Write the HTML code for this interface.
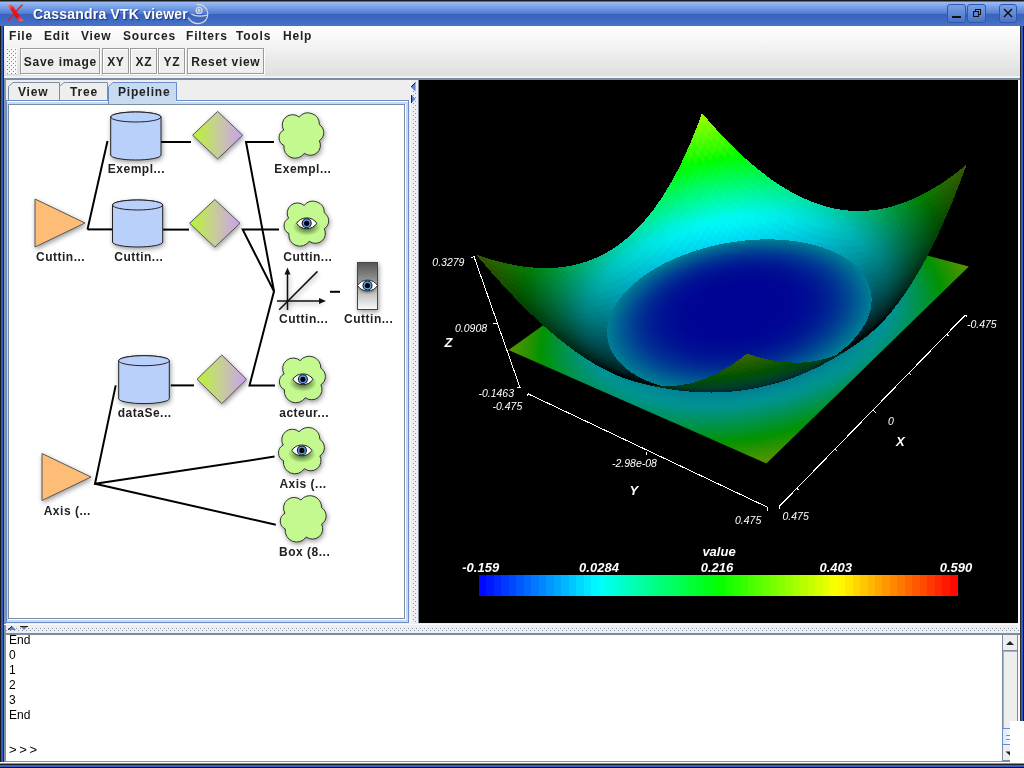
<!DOCTYPE html>
<html><head><meta charset="utf-8">
<style>
*{margin:0;padding:0;box-sizing:border-box}
html,body{width:1024px;height:768px;overflow:hidden;background:#000}
body{position:relative;font-family:"Liberation Sans",sans-serif}
.t,.btn span,.tx,svg{will-change:transform}
.a{position:absolute}
.t{position:absolute;white-space:nowrap;font-weight:bold;font-size:12px;color:#222;line-height:14px;letter-spacing:0.8px}
#title{left:0;top:0;width:1024px;height:26px;background:linear-gradient(#1a1a1a 0,#1a1a1a 1px,#9cbef6 2px,#7ea6ea 6px,#5c86d8 12px,#4c78d0 14px,#3a62bc 14px,#3e68c2 19px,#4672c8 25px,#4a74c9 26px)}
#frameL{left:0;top:0;width:4px;height:768px;background:linear-gradient(90deg,#1a1a14 0,#1a1a14 1px,#2f5bc8 1px,#2f5bc8 3px,#2a2a28 3px)}
#frameR{left:1020px;top:0;width:4px;height:768px;background:linear-gradient(90deg,#2a2a20 0,#2a2a20 1px,#2f5bc8 1px,#2f5bc8 3px,#111 3px)}
#frameB{left:0;top:762px;width:1024px;height:6px;background:linear-gradient(#fff 0,#fff 1px,#222 2px,#222 3px,#3a62c4 3px,#3a62c4 5px,#111 5px)}
#chrome{left:4px;top:26px;width:1016px;height:52px;background:linear-gradient(#ffffff,#f3f3f3 20px,#dedede 50px)}
.btn{position:absolute;top:48px;height:26px;border:1px solid #9a9a9a;background:#efefef;box-shadow:inset 1px 1px 0 #fff,1px 1px 0 #fff}
.btn span{position:absolute;top:6px;left:0;right:0;text-align:center;font-weight:bold;font-size:12px;color:#222;line-height:14px;letter-spacing:0.7px;text-indent:0.7px}
</style></head><body>
<div id="frameL" class="a"></div>
<div id="frameR" class="a"></div>
<div id="title" class="a"></div>
<!-- title icon X -->
<svg class="a" style="left:0;top:0" width="30" height="26" viewBox="0 0 30 26">
<defs><linearGradient id="xg" x1="0" y1="0" x2="1" y2="1"><stop offset="0" stop-color="#ff9a9a"/><stop offset="0.3" stop-color="#ee1a1a"/><stop offset="0.7" stop-color="#e01010"/><stop offset="1" stop-color="#ff8080"/></linearGradient></defs>
<path d="M21.6 4.6 L23.4 4.6 L8.6 21 L6.8 21 Z" fill="#e41c1c"/>
<path d="M6.8 4.6 L11.6 4.6 L23.2 21 L18.4 21 Z" fill="url(#xg)"/>
</svg>
<div class="t" style="left:33px;top:7px;font-size:14px;letter-spacing:0.2px;color:#fff;text-shadow:1px 1px 1px #1c3478">Cassandra VTK viewer</div>
<svg class="a" style="left:186px;top:2px" width="24" height="24" viewBox="0 0 24 24">
<g fill="none" stroke="#d8d8d8" stroke-width="1.2">
<circle cx="13.1" cy="8.4" r="3"/><circle cx="13.1" cy="8.4" r="1"/>
<path d="M10.4 2.3 Q20 2 21.8 11 Q22 20 13 21.6 Q6 22 2.2 15.6"/>
<path d="M5.3 11.9 Q11 15.5 21.3 13.2"/>
</g></svg>
<!-- title buttons -->
<div class="a" style="left:947px;top:4px;width:19px;height:19px;border:1px solid #3458a8;border-radius:3px;background:linear-gradient(#7aa0e6,#4a72c8)"></div>
<div class="a" style="left:952px;top:16px;width:9px;height:2px;background:#111"></div>
<div class="a" style="left:967px;top:4px;width:19px;height:19px;border:1px solid #3458a8;border-radius:3px;background:linear-gradient(#7aa0e6,#4a72c8)"></div>
<div class="a" style="left:975px;top:9px;width:6px;height:6px;border:1px solid #111"></div>
<div class="a" style="left:973px;top:11px;width:6px;height:6px;border:1px solid #111;background:#5a82d4"></div>
<div class="a" style="left:999px;top:4px;width:18px;height:19px;border:1px solid #3458a8;border-radius:3px;background:linear-gradient(#7aa0e6,#4a72c8)"></div>
<svg class="a" style="left:1002px;top:7px" width="12" height="12"><path d="M2 2L10 10M10 2L2 10" stroke="#111" stroke-width="1.5"/></svg>

<div id="chrome" class="a"></div>
<div class="a" style="left:4px;top:76px;width:1016px;height:2px;background:#f2f2f2"></div>
<div class="a" style="left:4px;top:78px;width:1016px;height:2px;background:#7a8ea2"></div>
<!-- menu -->
<div class="t" style="left:9px;top:29px">File</div>
<div class="t" style="left:44px;top:29px">Edit</div>
<div class="t" style="left:81px;top:29px">View</div>
<div class="t" style="left:123px;top:29px">Sources</div>
<div class="t" style="left:186px;top:29px">Filters</div>
<div class="t" style="left:236px;top:29px">Tools</div>
<div class="t" style="left:283px;top:29px">Help</div>
<!-- toolbar grip -->
<svg class="a" style="left:6px;top:48px" width="12" height="27"><defs><pattern id="gp" width="4" height="4" patternUnits="userSpaceOnUse" x="1" y="1"><rect width="4" height="4" fill="#f6f6f6"/><rect x="0" y="0" width="1" height="1" fill="#75859c"/><rect x="2" y="2" width="1" height="1" fill="#75859c"/><rect x="1" y="1" width="1" height="1" fill="#fff"/><rect x="3" y="3" width="1" height="1" fill="#fff"/></pattern></defs><rect x="0" y="0" width="11" height="26" fill="url(#gp)"/></svg>
<div class="btn" style="left:20px;width:80px"><span>Save image</span></div>
<div class="btn" style="left:102px;width:27px"><span>XY</span></div>
<div class="btn" style="left:130px;width:27px"><span>XZ</span></div>
<div class="btn" style="left:158px;width:27px"><span>YZ</span></div>
<div class="btn" style="left:187px;width:77px"><span>Reset view</span></div>

<!-- main split area -->
<div class="a" style="left:4px;top:80px;width:1016px;height:554px;background:#eeeeee"></div>
<div class="a" style="left:4px;top:80px;width:2px;height:682px;background:#8494a6"></div>
<!-- tabs -->
<div class="a" style="left:6px;top:100px;width:403px;height:523px;background:#6a8ccc"></div>
<div class="a" style="left:7px;top:101px;width:401px;height:521px;background:#c6daf0;border-top:1px solid #fff"></div>
<div class="a" style="left:8px;top:104px;width:397px;height:515px;background:#7a8ca2"></div>
<div class="a" style="left:9px;top:105px;width:395px;height:513px;background:#fff"></div>
<div class="a" style="left:405px;top:104px;width:1px;height:516px;background:#fff"></div>
<svg class="a" style="left:0;top:0" width="409" height="620" viewBox="0 0 409 620">
<defs>
<filter id="sh" x="-30%" y="-30%" width="160%" height="160%"><feGaussianBlur in="SourceAlpha" stdDeviation="2.6"/><feOffset dx="1" dy="1.5"/><feComponentTransfer><feFuncA type="linear" slope="0.4"/></feComponentTransfer><feMerge><feMergeNode/><feMergeNode in="SourceGraphic"/></feMerge></filter>
<linearGradient id="dg" x1="0" x2="1" y1="0" y2="0"><stop offset="0" stop-color="#b8f530"/><stop offset="0.5" stop-color="#c8cc9a"/><stop offset="1" stop-color="#c8a0f0"/></linearGradient>
<radialGradient id="eyesh"><stop offset="0" stop-color="#2a4a18" stop-opacity="0.95"/><stop offset="1" stop-color="#2a4a18" stop-opacity="0"/></radialGradient><radialGradient id="eyesh2"><stop offset="0" stop-color="#000" stop-opacity="0.5"/><stop offset="1" stop-color="#000" stop-opacity="0"/></radialGradient>
<linearGradient id="rg" x1="0" x2="0" y1="0" y2="1"><stop offset="0" stop-color="#555"/><stop offset="1" stop-color="#fafafa"/></linearGradient>
<clipPath id="wc"><rect x="9" y="105" width="395" height="513"/></clipPath>
</defs>
<g clip-path="url(#wc)">
<g stroke="#000" stroke-width="2" fill="none">
<path d="M87.5 229.4 L107.5 141"/>
<path d="M87.5 229.4 L112 229.4"/>
<path d="M161 142 L191 142"/>
<path d="M274 142 L246 142 L274 291.3"/>
<path d="M163 229.6 L189 229.6"/>
<path d="M279 229.6 L242.7 229.6 L274 291.3 L249.5 385.4 L275 385.4"/>
<path d="M170.8 385.4 L194 385.4"/>
<path d="M330 291.8 L340 291.8"/>
<path d="M115.7 385.4 L95 483.8 L274.6 456.6"/>
<path d="M95 483.8 L275.8 524.7"/>
</g>

<path d="M35.0 199.0 L35.0 247.0 L85.0 223.0 Z" fill="#fdbd76" stroke="#555" stroke-width="1" filter="url(#sh)"/>
<path d="M42.0 453.5 L42.0 500.5 L91.0 477.0 Z" fill="#fdbd76" stroke="#555" stroke-width="1" filter="url(#sh)"/>
<path d="M110.7 117.0 L110.7 155.0 A25.1 5.0 0 0 0 161.0 155.0 L161.0 117.0 A25.1 5.0 0 0 0 110.7 117.0 Z" fill="#b8d0fa" stroke="#222" stroke-width="1" filter="url(#sh)"/><ellipse cx="135.8" cy="117.0" rx="25.1" ry="5.0" fill="#b8d0fa" stroke="#222" stroke-width="1"/>
<path d="M112.5 205.0 L112.5 242.0 A25.1 5.0 0 0 0 162.7 242.0 L162.7 205.0 A25.1 5.0 0 0 0 112.5 205.0 Z" fill="#b8d0fa" stroke="#222" stroke-width="1" filter="url(#sh)"/><ellipse cx="137.6" cy="205.0" rx="25.1" ry="5.0" fill="#b8d0fa" stroke="#222" stroke-width="1"/>
<path d="M118.7 360.7 L118.7 398.6 A25.3 5.0 0 0 0 169.3 398.6 L169.3 360.7 A25.3 5.0 0 0 0 118.7 360.7 Z" fill="#b8d0fa" stroke="#222" stroke-width="1" filter="url(#sh)"/><ellipse cx="144.0" cy="360.7" rx="25.3" ry="5.0" fill="#b8d0fa" stroke="#222" stroke-width="1"/>
<path d="M192.6 135.2 L217.6 111.4 L242.7 135.2 L217.6 159.0 Z" fill="url(#dg)" stroke="#555" stroke-width="1" filter="url(#sh)"/>
<path d="M189.6 223.3 L214.8 199.5 L240.0 223.3 L214.8 247.2 Z" fill="url(#dg)" stroke="#555" stroke-width="1" filter="url(#sh)"/>
<path d="M197.0 379.3 L221.8 355.0 L246.5 379.3 L221.8 403.6 Z" fill="url(#dg)" stroke="#555" stroke-width="1" filter="url(#sh)"/>
<path d="M299.21 117.13 A11.31 11.31 0 0 1 319.32 124.58 A9.54 9.54 0 0 1 319.32 140.69 A10.05 10.05 0 0 1 304.29 153.27 A11.16 11.16 0 0 1 283.98 145.42 A8.54 8.54 0 0 1 283.68 130.11 A10.26 10.26 0 0 1 299.21 117.13 Z" fill="#c3f98f" stroke="#333" stroke-width="1" filter="url(#sh)"/>
<path d="M304.16 205.48 A11.31 11.31 0 0 1 324.31 212.85 A9.43 9.43 0 0 1 324.31 228.78 A10.01 10.01 0 0 1 309.24 241.22 A11.16 11.16 0 0 1 288.89 233.45 A8.45 8.45 0 0 1 288.59 218.32 A10.22 10.22 0 0 1 304.16 205.48 Z" fill="#c3f98f" stroke="#333" stroke-width="1" filter="url(#sh)"/>
<ellipse cx="306.7" cy="226.8" rx="14" ry="9" fill="url(#eyesh)"/><path d="M296.7 223.3 C300.7 216.1 312.7 216.1 316.7 223.3 C312.7 230.5 300.7 230.5 296.7 223.3 Z" fill="#fff" stroke="#222" stroke-width="1"/><circle cx="306.7" cy="223.3" r="5" fill="#151515"/><circle cx="306.7" cy="223.3" r="4" fill="#5a9af0"/><circle cx="306.7" cy="223.3" r="2.6" fill="#000"/>
<path d="M300.13 360.62 A11.65 11.65 0 0 1 320.87 368.26 A9.77 9.77 0 0 1 320.87 384.77 A10.34 10.34 0 0 1 305.36 397.67 A11.50 11.50 0 0 1 284.42 389.62 A8.76 8.76 0 0 1 284.11 373.93 A10.55 10.55 0 0 1 300.13 360.62 Z" fill="#c3f98f" stroke="#333" stroke-width="1" filter="url(#sh)"/>
<ellipse cx="302.9" cy="382.8" rx="14" ry="9" fill="url(#eyesh)"/><path d="M292.9 379.3 C296.9 372.1 308.9 372.1 312.9 379.3 C308.9 386.5 296.9 386.5 292.9 379.3 Z" fill="#fff" stroke="#222" stroke-width="1"/><circle cx="302.9" cy="379.3" r="5" fill="#151515"/><circle cx="302.9" cy="379.3" r="4" fill="#5a9af0"/><circle cx="302.9" cy="379.3" r="2.6" fill="#000"/>
<path d="M299.18 431.81 A11.62 11.62 0 0 1 319.88 439.41 A9.73 9.73 0 0 1 319.88 455.84 A10.30 10.30 0 0 1 304.41 468.69 A11.47 11.47 0 0 1 283.51 460.67 A8.72 8.72 0 0 1 283.20 445.06 A10.52 10.52 0 0 1 299.18 431.81 Z" fill="#c3f98f" stroke="#333" stroke-width="1" filter="url(#sh)"/>
<ellipse cx="301.9" cy="453.9" rx="14" ry="9" fill="url(#eyesh)"/><path d="M291.9 450.4 C295.9 443.2 307.9 443.2 311.9 450.4 C307.9 457.6 295.9 457.6 291.9 450.4 Z" fill="#fff" stroke="#222" stroke-width="1"/><circle cx="301.9" cy="450.4" r="5" fill="#151515"/><circle cx="301.9" cy="450.4" r="4" fill="#5a9af0"/><circle cx="301.9" cy="450.4" r="2.6" fill="#000"/>
<path d="M300.94 500.02 A11.60 11.60 0 0 1 321.59 507.63 A9.75 9.75 0 0 1 321.59 524.11 A10.30 10.30 0 0 1 306.15 536.98 A11.45 11.45 0 0 1 285.30 528.95 A8.74 8.74 0 0 1 284.99 513.30 A10.51 10.51 0 0 1 300.94 500.02 Z" fill="#c3f98f" stroke="#333" stroke-width="1" filter="url(#sh)"/>
<g filter="url(#sh)" stroke="#111" stroke-width="1.5" fill="none">
<path d="M287.5 310 L287.5 272"/><path d="M277 301 L321 301"/><path d="M279.2 309.8 L317.5 271.4"/>
</g>
<path d="M287.5 267.6 L284.5 274.5 L290.5 274.5 Z" fill="#111"/>
<path d="M326 301 L319 298 L319 304 Z" fill="#111"/>

<rect x="357.5" y="262.5" width="20" height="47" fill="url(#rg)" stroke="#444" stroke-width="1" filter="url(#sh)"/>
<ellipse cx="367.5" cy="289.5" rx="10" ry="5" fill="url(#eyesh2)"/><path d="M357.5 285.5 C361.5 278.3 373.5 278.3 377.5 285.5 C373.5 292.7 361.5 292.7 357.5 285.5 Z" fill="#fff" stroke="#222" stroke-width="1"/><circle cx="367.5" cy="285.5" r="5" fill="#151515"/><circle cx="367.5" cy="285.5" r="4" fill="#5a9af0"/><circle cx="367.5" cy="285.5" r="2.6" fill="#000"/>
<g font-family="Liberation Sans" font-weight="bold" font-size="12" fill="#222" letter-spacing="0.5">
<text x="136.4" y="172.8" text-anchor="middle">Exempl...</text>
<text x="60.6" y="260.8" text-anchor="middle">Cuttin...</text>
<text x="138.8" y="260.8" text-anchor="middle">Cuttin...</text>
<text x="302.8" y="173.3" text-anchor="middle">Exempl...</text>
<text x="307.8" y="260.8" text-anchor="middle">Cuttin...</text>
<text x="303.7" y="322.8" text-anchor="middle">Cuttin...</text>
<text x="368.7" y="322.8" text-anchor="middle">Cuttin...</text>
<text x="144.7" y="417.3" text-anchor="middle">dataSe...</text>
<text x="304.2" y="417.3" text-anchor="middle">acteur...</text>
<text x="67.3" y="515.3" text-anchor="middle">Axis (...</text>
<text x="303.0" y="487.8" text-anchor="middle">Axis (...</text>
<text x="304.7" y="555.8" text-anchor="middle">Box (8...</text>
</g></g></svg>
<div class="a" style="left:8px;top:619px;width:398px;height:1px;background:#fff"></div>

<svg class="a" style="left:0;top:76px" width="200" height="30">
<path d="M8.5 24 L8.5 10.5 L13 6.5 L59.5 6.5 L59.5 24" fill="#eeeeee" stroke="#7a8ea8" stroke-width="1"/>
<path d="M59.5 24 L59.5 10.5 L64 6.5 L107.5 6.5 L107.5 24" fill="#eeeeee" stroke="#7a8ea8" stroke-width="1"/>
<path d="M108.5 28 L108.5 10.5 L113 6.5 L176.5 6.5 L176.5 24.5 L200 24.5" fill="#c6daf0" stroke="#6a8ccc" stroke-width="1"/>
<path d="M6 24.5 L108 24.5" stroke="#6a8ccc" stroke-width="1"/>
<rect x="109" y="24" width="67" height="4" fill="#c6daf0"/>
</svg>
<div class="t" style="left:18px;top:85px">View</div>
<div class="t" style="left:70px;top:85px">Tree</div>
<div class="t" style="left:118px;top:85px">Pipeline</div>

<!-- vertical splitter -->
<svg class="a" style="left:409px;top:80px" width="10" height="543"><defs><pattern id="dv" width="10" height="4" patternUnits="userSpaceOnUse"><rect x="4" y="3" width="1" height="1" fill="#8494aa"/><rect x="6" y="1" width="1" height="1" fill="#8494aa"/></pattern></defs><rect x="1" y="0" width="1" height="543" fill="#fafafa"/><rect width="10" height="543" fill="url(#dv)"/></svg>
<svg class="a" style="left:408px;top:80px" width="10" height="30">
<rect x="3" y="0" width="7" height="10" fill="#eeeeee"/>
<path d="M3 7 L7.5 2.5 L7.5 11.5 Z" fill="#5a7ed0"/><path d="M3 7 L7.5 2.5" stroke="#111" stroke-width="1"/>
<path d="M7.5 19 L3.5 15 L3.5 23 Z" fill="#5a7ed0"/><path d="M3.5 15 L3.5 23" stroke="#222" stroke-width="1"/>
</svg>
<div class="a" style="left:418px;top:80px;width:1px;height:543px;background:#7a8ca2"></div>
<div class="a" style="left:1018px;top:80px;width:2px;height:682px;background:#fbfbfb"></div>
<div class="a" style="left:419px;top:80px;width:599px;height:543px;background:#000"></div>
<svg class="a" style="left:419px;top:80px" width="599" height="543" viewBox="419 80 599 543">
<defs>
<clipPath id="bowlc"><path d="M476.2 254.6 C480.0 255.8 491.0 259.6 499.1 261.5 C507.2 263.4 516.4 264.9 525.1 265.7 C533.8 266.4 542.5 266.6 551.2 266.0 C559.9 265.4 568.5 264.1 577.2 262.0 C585.9 259.9 594.6 257.6 603.3 253.2 C612.0 248.8 620.7 242.8 629.4 235.5 C638.1 228.2 647.6 219.0 655.4 209.4 C663.2 199.8 670.6 188.2 676.3 178.2 C681.9 168.2 685.0 160.4 689.3 149.5 C693.6 138.6 699.9 119.1 702.0 113.0 C706.2 117.7 718.5 132.4 727.3 141.0 C736.1 149.6 745.6 157.0 754.7 164.3 C763.8 171.6 772.9 178.9 782.0 184.8 C791.1 190.7 800.3 196.0 809.4 199.8 C818.5 203.6 827.6 206.0 836.7 207.5 C845.8 209.0 855.0 209.4 864.1 208.8 C873.2 208.2 882.3 206.8 891.4 203.9 C900.5 201.0 909.7 196.2 918.8 191.6 C927.9 187.0 938.1 181.1 946.1 176.6 C954.1 172.1 963.5 166.5 967.0 164.5 C965.3 169.2 960.5 183.7 957.0 193.0 C953.5 202.3 950.2 210.3 946.1 220.3 C942.0 230.3 937.0 244.0 932.4 253.1 C927.8 262.2 924.2 267.2 918.8 275.0 C913.4 282.8 906.5 292.2 900.0 300.0 C893.5 307.8 890.0 312.8 879.8 321.9 C869.6 331.0 854.8 345.1 838.8 354.7 C822.8 364.3 800.5 373.3 784.0 379.3 C767.5 385.3 753.7 388.4 740.0 390.5 C726.3 392.6 714.0 392.2 702.0 391.6 C690.0 391.0 677.6 388.6 667.8 387.0 C658.0 385.4 651.3 384.4 643.1 382.1 C634.9 379.8 626.6 376.7 618.4 373.4 C610.1 370.1 601.9 366.8 593.6 362.3 C585.4 357.8 577.5 352.6 568.9 346.2 C560.2 339.8 549.9 331.8 541.7 324.0 C533.5 316.2 527.3 307.6 519.5 299.2 C511.7 290.8 501.9 280.7 494.7 273.3 C487.5 265.9 479.3 257.7 476.2 254.6 Z"/></clipPath>
<clipPath id="planec"><path d="M508.3 349.9 L711.0 152.0 L968.6 266.4 L767.0 463.5 Z"/></clipPath>
<filter id="bl1" x="-50%" y="-50%" width="200%" height="200%" color-interpolation-filters="sRGB"><feGaussianBlur stdDeviation="1"/></filter>
<filter id="bl2" x="-50%" y="-50%" width="200%" height="200%" color-interpolation-filters="sRGB"><feGaussianBlur stdDeviation="2"/></filter>
<filter id="bl4" x="-50%" y="-50%" width="200%" height="200%" color-interpolation-filters="sRGB"><feGaussianBlur stdDeviation="4"/></filter>
<filter id="bl8" x="-50%" y="-50%" width="200%" height="200%" color-interpolation-filters="sRGB"><feGaussianBlur stdDeviation="8"/></filter>
<filter id="bl15" x="-50%" y="-50%" width="200%" height="200%" color-interpolation-filters="sRGB"><feGaussianBlur stdDeviation="15"/></filter>
<filter id="bl25" x="-50%" y="-50%" width="200%" height="200%" color-interpolation-filters="sRGB"><feGaussianBlur stdDeviation="25"/></filter>
<radialGradient id="ellg" cx="0.56" cy="0.42" r="0.6"><stop offset="0" stop-color="#000090"/><stop offset="0.4" stop-color="#000a92"/><stop offset="0.8" stop-color="#0a5aa0"/><stop offset="1" stop-color="#1090a0"/></radialGradient>
</defs>
<clipPath id="pq"><path d="M508.5 349.9 L766.4 463.4 L968.9 266.4 L717.7 201.5 Z"/></clipPath>
<g clip-path="url(#pq)"><g filter="url(#bl2)"><path d="M567.9 446.6L584.7 454.0L603.3 460.3L623.6 465.4L645.3 469.1L668.2 471.5L692.1 472.3L716.7 471.7L741.7 469.5L766.8 465.8L791.6 460.6L815.9 454.0L839.3 446.1L861.5 437.0L882.3 426.8L901.5 415.8L918.9 403.9L934.3 391.4L947.5 378.5L958.7 365.4L967.6 352.1L974.3 338.8L978.9 325.6L981.3 312.8L981.7 300.3L980.2 288.2L976.8 276.8L971.8 265.9L965.1 255.7L956.9 246.2L947.4 237.5L936.7 229.5L924.8 222.3L912.0 215.9L898.3 210.3L883.8 205.6L868.7 201.6L853.0 198.4L836.9 196.0L820.4 194.4L803.5 193.6L786.5 193.5L769.3 194.1L752.0 195.5L734.7 197.6L717.5 200.4L700.5 203.9L683.6 208.0L667.1 212.9L650.9 218.4L635.1 224.5L619.8 231.2L605.0 238.5L591.0 246.4L577.6 254.9L565.1 263.9L553.5 273.4L542.9 283.4L533.3 293.8L525.0 304.5L518.0 315.7L512.4 327.1L508.2 338.7L505.7 350.4L504.9 362.3L505.9 374.1L508.7 385.7L513.5 397.2L520.3 408.2L529.2 418.9L540.1 428.9L553.0 438.1Z" fill="#619300"/><path d="M569.7 445.1L586.3 452.5L604.8 458.7L624.8 463.7L646.3 467.4L669.0 469.7L692.6 470.5L717.0 469.9L741.7 467.7L766.5 464.0L791.0 458.9L815.0 452.4L838.2 444.6L860.2 435.6L880.8 425.5L899.8 414.6L916.9 402.9L932.2 390.6L945.3 377.8L956.4 364.8L965.2 351.6L971.9 338.5L976.5 325.5L979.0 312.7L979.4 300.3L977.9 288.4L974.6 277.1L969.6 266.3L963.0 256.2L955.0 246.8L945.6 238.1L934.9 230.2L923.2 223.0L910.5 216.7L897.0 211.2L882.7 206.4L867.7 202.5L852.1 199.3L836.1 196.9L819.7 195.3L803.0 194.4L786.1 194.3L769.0 195.0L751.9 196.4L734.8 198.4L717.7 201.2L700.8 204.7L684.1 208.8L667.6 213.6L651.5 219.1L635.9 225.1L620.7 231.8L606.1 239.1L592.1 246.9L578.9 255.3L566.5 264.3L555.0 273.7L544.5 283.6L535.0 293.9L526.8 304.6L519.9 315.6L514.3 326.9L510.3 338.4L507.8 350.1L507.0 361.8L508.0 373.4L510.9 385.0L515.7 396.3L522.5 407.3L531.2 417.8L542.1 427.6L554.9 436.8Z" fill="#5d9300"/><path d="M571.4 443.7L587.9 450.9L606.2 457.1L626.0 462.0L647.3 465.6L669.7 467.9L693.1 468.7L717.2 468.1L741.7 465.9L766.2 462.3L790.4 457.2L814.2 450.8L837.0 443.1L858.8 434.2L879.2 424.3L898.0 413.4L915.0 401.8L930.1 389.7L943.1 377.1L954.1 364.2L962.9 351.2L969.6 338.2L974.1 325.3L976.6 312.7L977.1 300.4L975.6 288.6L972.4 277.3L967.5 266.7L961.0 256.6L953.0 247.3L943.7 238.7L933.2 230.9L921.6 223.8L909.1 217.5L895.6 212.0L881.5 207.2L866.6 203.3L851.2 200.2L835.3 197.8L819.1 196.2L802.5 195.3L785.7 195.2L768.8 195.9L751.8 197.2L734.8 199.3L717.8 202.0L701.1 205.5L684.5 209.6L668.2 214.4L652.2 219.8L636.7 225.8L621.6 232.4L607.1 239.6L593.3 247.4L580.2 255.8L567.9 264.6L556.5 274.0L546.1 283.8L536.8 294.0L528.6 304.6L521.8 315.5L516.3 326.7L512.3 338.1L509.9 349.7L509.2 361.3L510.2 372.8L513.1 384.3L517.9 395.4L524.6 406.3L533.3 416.7L544.1 426.4L556.8 435.5Z" fill="#579300"/><path d="M573.2 442.3L589.5 449.4L607.6 455.4L627.3 460.3L648.3 463.9L670.5 466.1L693.6 466.9L717.4 466.3L741.6 464.1L765.8 460.5L789.8 455.5L813.3 449.2L835.9 441.6L857.4 432.8L877.6 423.0L896.2 412.3L913.1 400.8L928.0 388.8L940.9 376.3L951.8 363.6L960.6 350.7L967.2 337.9L971.7 325.1L974.2 312.6L974.7 300.5L973.3 288.8L970.2 277.6L965.3 267.1L958.9 257.1L951.1 247.9L941.9 239.3L931.5 231.5L920.1 224.5L907.6 218.3L894.3 212.8L880.3 208.1L865.5 204.2L850.3 201.1L834.5 198.7L818.4 197.1L802.0 196.2L785.3 196.1L768.5 196.8L751.7 198.1L734.8 200.1L718.0 202.9L701.3 206.3L684.9 210.4L668.7 215.1L652.9 220.5L637.5 226.4L622.5 233.0L608.2 240.2L594.5 247.9L581.5 256.2L569.3 265.0L558.0 274.3L547.7 284.0L538.5 294.1L530.4 304.6L523.7 315.5L518.3 326.6L514.4 337.9L512.0 349.3L511.3 360.8L512.4 372.2L515.2 383.5L520.0 394.6L526.7 405.3L535.4 415.6L546.0 425.2L558.7 434.2Z" fill="#519300"/><path d="M574.9 440.8L591.1 447.9L609.0 453.8L628.5 458.6L649.3 462.2L671.3 464.3L694.1 465.1L717.7 464.5L741.6 462.4L765.5 458.8L789.2 453.9L812.4 447.6L834.8 440.0L856.1 431.4L876.0 421.7L894.5 411.1L911.1 399.8L925.9 387.9L938.8 375.6L949.5 363.0L958.2 350.3L964.8 337.6L969.3 325.0L971.8 312.6L972.4 300.6L971.1 289.0L968.0 277.9L963.2 267.4L956.9 257.6L949.1 248.4L940.1 239.9L929.8 232.2L918.5 225.2L906.2 219.0L893.0 213.6L879.1 208.9L864.5 205.0L849.3 201.9L833.7 199.6L817.7 198.0L801.5 197.1L784.9 197.0L768.3 197.7L751.6 199.0L734.8 201.0L718.2 203.7L701.6 207.1L685.3 211.1L669.3 215.8L653.6 221.2L638.3 227.1L623.5 233.6L609.2 240.7L595.6 248.4L582.8 256.6L570.7 265.4L559.5 274.6L549.3 284.2L540.2 294.3L532.3 304.7L525.6 315.4L520.3 326.4L516.4 337.6L514.1 348.9L513.4 360.3L514.5 371.6L517.4 382.8L522.2 393.7L528.8 404.3L537.5 414.5L548.0 424.0L560.5 432.8Z" fill="#4b9300"/><path d="M576.7 439.4L592.7 446.4L610.4 452.2L629.7 457.0L650.3 460.4L672.0 462.6L694.6 463.3L717.9 462.7L741.5 460.6L765.2 457.1L788.7 452.2L811.6 446.0L833.7 438.5L854.8 430.0L874.5 420.4L892.7 410.0L909.2 398.8L923.9 387.1L936.6 374.9L947.3 362.4L955.9 349.8L962.5 337.3L967.0 324.8L969.5 312.6L970.1 300.7L968.8 289.2L965.7 278.2L961.1 267.8L954.8 258.1L947.2 249.0L938.2 240.6L928.1 232.9L916.9 226.0L904.7 219.8L891.7 214.4L877.9 209.8L863.4 205.9L848.4 202.8L832.9 200.5L817.1 198.9L800.9 198.1L784.6 197.9L768.0 198.5L751.4 199.9L734.8 201.9L718.3 204.6L701.9 207.9L685.7 211.9L669.8 216.6L654.2 221.9L639.1 227.8L624.4 234.2L610.3 241.3L596.8 248.9L584.1 257.1L572.1 265.7L561.0 274.8L551.0 284.4L541.9 294.4L534.1 304.7L527.5 315.4L522.2 326.2L518.4 337.3L516.2 348.5L515.6 359.8L516.7 371.0L519.6 382.1L524.3 392.9L531.0 403.4L539.5 413.4L550.0 422.8L562.4 431.5Z" fill="#459300"/><path d="M578.4 438.0L594.3 444.8L611.9 450.6L630.9 455.3L651.3 458.7L672.8 460.8L695.1 461.6L718.1 460.9L741.5 458.8L764.9 455.4L788.1 450.5L810.7 444.4L832.6 437.0L853.4 428.6L872.9 419.1L891.0 408.8L907.3 397.8L921.8 386.2L934.4 374.2L945.0 361.8L953.6 349.4L960.1 336.9L964.6 324.6L967.1 312.5L967.7 300.7L966.5 289.4L963.5 278.5L958.9 268.2L952.8 258.5L945.2 249.5L936.4 241.2L926.4 233.6L915.3 226.7L903.2 220.6L890.3 215.2L876.7 210.6L862.3 206.8L847.5 203.7L832.1 201.4L816.4 199.8L800.4 199.0L784.2 198.8L767.8 199.4L751.3 200.7L734.9 202.7L718.5 205.4L702.2 208.7L686.1 212.7L670.4 217.3L654.9 222.6L639.9 228.4L625.3 234.9L611.3 241.9L598.0 249.4L585.4 257.5L573.5 266.1L562.6 275.1L552.6 284.6L543.7 294.5L535.9 304.7L529.4 315.3L524.2 326.1L520.5 337.1L518.3 348.2L517.7 359.3L518.8 370.4L521.7 381.3L526.5 392.0L533.1 402.4L541.6 412.3L552.0 421.6L564.3 430.2Z" fill="#409300"/><path d="M580.2 436.6L595.9 443.3L613.3 449.1L632.1 453.6L652.2 457.0L673.5 459.1L695.6 459.8L718.3 459.1L741.4 457.1L764.6 453.6L787.5 448.9L809.9 442.8L831.5 435.6L852.1 427.2L871.4 417.9L889.2 407.7L905.4 396.8L919.8 385.3L932.2 373.4L942.8 361.3L951.3 349.0L957.7 336.6L962.2 324.4L964.8 312.5L965.4 300.8L964.2 289.6L961.3 278.8L956.8 268.6L950.7 259.0L943.3 250.1L934.6 241.8L924.7 234.3L913.7 227.4L901.8 221.4L889.0 216.0L875.4 211.5L861.3 207.7L846.5 204.6L831.3 202.3L815.8 200.7L799.9 199.9L783.8 199.7L767.5 200.3L751.2 201.6L734.9 203.6L718.6 206.2L702.5 209.5L686.6 213.5L670.9 218.1L655.6 223.3L640.7 229.1L626.3 235.5L612.4 242.4L599.2 249.9L586.7 257.9L574.9 266.4L564.1 275.4L554.2 284.8L545.4 294.6L537.7 304.8L531.3 315.2L526.2 325.9L522.5 336.8L520.4 347.8L519.9 358.8L521.0 369.8L523.9 380.6L528.6 391.2L535.2 401.4L543.6 411.2L554.0 420.4L566.2 428.9Z" fill="#3a9300"/><path d="M581.9 435.2L597.5 441.8L614.7 447.5L633.3 452.0L653.2 455.3L674.2 457.3L696.1 458.0L718.6 457.4L741.4 455.3L764.2 451.9L786.9 447.2L809.0 441.2L830.4 434.1L850.7 425.8L869.8 416.6L887.5 406.5L903.5 395.8L917.7 384.5L930.1 372.7L940.5 360.7L948.9 348.5L955.4 336.3L959.9 324.3L962.4 312.4L963.1 300.9L961.9 289.8L959.1 279.1L954.6 269.0L948.7 259.5L941.3 250.6L932.7 242.4L922.9 234.9L912.1 228.2L900.3 222.1L887.6 216.9L874.2 212.3L860.2 208.5L845.6 205.5L830.5 203.2L815.1 201.6L799.4 200.8L783.4 200.7L767.3 201.2L751.1 202.5L734.9 204.5L718.8 207.1L702.8 210.4L687.0 214.3L671.5 218.8L656.3 224.0L641.5 229.7L627.2 236.1L613.5 243.0L600.4 250.4L588.0 258.4L576.3 266.8L565.6 275.7L555.8 285.0L547.1 294.8L539.5 304.8L533.2 315.2L528.2 325.8L524.6 336.5L522.5 347.4L522.0 358.3L523.2 369.2L526.1 379.9L530.8 390.3L537.3 400.4L545.7 410.1L555.9 419.2L568.0 427.6Z" fill="#349300"/><path d="M583.6 433.7L599.1 440.3L616.1 445.9L634.5 450.3L654.2 453.6L675.0 455.6L696.6 456.3L718.8 455.6L741.3 453.6L763.9 450.2L786.3 445.6L808.2 439.7L829.3 432.6L849.4 424.4L868.3 415.3L885.7 405.4L901.6 394.8L915.7 383.6L927.9 372.0L938.3 360.1L946.6 348.1L953.1 336.0L957.5 324.1L960.1 312.4L960.7 301.0L959.7 289.9L956.9 279.4L952.5 269.4L946.6 260.0L939.4 251.2L930.9 243.0L921.2 235.6L910.5 228.9L898.8 222.9L886.3 217.7L873.0 213.2L859.1 209.4L844.7 206.4L829.7 204.1L814.4 202.5L798.8 201.7L783.0 201.6L767.0 202.1L751.0 203.4L734.9 205.3L718.9 207.9L703.1 211.2L687.4 215.1L672.0 219.6L657.0 224.7L642.3 230.4L628.1 236.7L614.5 243.5L601.5 250.9L589.3 258.8L577.8 267.2L567.1 276.0L557.5 285.2L548.9 294.9L541.4 304.8L535.1 315.1L530.2 325.6L526.6 336.3L524.6 347.0L524.1 357.8L525.3 368.5L528.2 379.1L532.9 389.5L539.4 399.5L547.7 409.0L557.9 418.0L569.9 426.3Z" fill="#2f9300"/><path d="M585.4 432.3L600.6 438.8L617.5 444.3L635.7 448.7L655.2 451.9L675.7 453.9L697.1 454.5L719.0 453.9L741.3 451.9L763.6 448.6L785.7 443.9L807.4 438.1L828.2 431.1L848.1 423.1L866.8 414.1L884.0 404.3L899.7 393.8L913.6 382.7L925.8 371.3L936.0 359.5L944.3 347.6L950.7 335.7L955.2 323.9L957.7 312.3L958.4 301.0L957.4 290.1L954.7 279.7L950.4 269.8L944.6 260.4L937.5 251.7L929.0 243.7L919.5 236.3L908.9 229.6L897.3 223.7L884.9 218.5L871.8 214.0L858.0 210.3L843.7 207.3L828.9 205.0L813.8 203.5L798.3 202.6L782.6 202.5L766.8 203.0L750.9 204.3L735.0 206.2L719.1 208.8L703.4 212.0L687.8 215.9L672.6 220.3L657.7 225.4L643.1 231.1L629.1 237.3L615.6 244.1L602.7 251.4L590.6 259.2L579.2 267.5L568.7 276.3L559.1 285.5L550.6 295.0L543.2 304.9L537.0 315.0L532.2 325.4L528.7 336.0L526.7 346.6L526.3 357.3L527.5 367.9L530.4 378.4L535.1 388.6L541.5 398.5L549.8 407.9L559.9 416.8L571.7 425.0Z" fill="#299300"/><path d="M587.1 430.9L602.2 437.3L618.8 442.7L636.9 447.1L656.1 450.2L676.4 452.1L697.6 452.8L719.2 452.1L741.2 450.2L763.3 446.9L785.2 442.3L806.5 436.6L827.1 429.7L846.8 421.7L865.2 412.8L882.3 403.2L897.8 392.8L911.6 381.9L923.6 370.6L933.8 359.0L942.0 347.2L948.4 335.4L952.8 323.8L955.4 312.3L956.1 301.1L955.1 290.3L952.5 280.0L948.2 270.2L942.5 260.9L935.5 252.3L927.2 244.3L917.8 237.0L907.3 230.4L895.8 224.5L883.6 219.3L870.6 214.9L857.0 211.2L842.8 208.2L828.1 205.9L813.1 204.4L797.8 203.5L782.2 203.4L766.5 204.0L750.8 205.2L735.0 207.1L719.3 209.6L703.7 212.8L688.3 216.7L673.1 221.1L658.3 226.1L644.0 231.7L630.0 237.9L616.7 244.7L603.9 251.9L591.9 259.7L580.6 267.9L570.2 276.6L560.8 285.7L552.3 295.1L545.0 304.9L538.9 315.0L534.1 325.3L530.7 335.7L528.8 346.3L528.4 356.8L529.6 367.3L532.5 377.7L537.2 387.8L543.6 397.5L551.8 406.8L561.8 415.6L573.6 423.7Z" fill="#249300"/><path d="M588.8 429.5L603.8 435.8L620.2 441.2L638.1 445.4L657.1 448.5L677.2 450.4L698.0 451.1L719.5 450.4L741.2 448.4L763.0 445.2L784.6 440.7L805.7 435.0L826.1 428.2L845.5 420.4L863.7 411.6L880.6 402.0L895.9 391.8L909.6 381.0L921.5 369.8L931.6 358.4L939.8 346.8L946.0 335.1L950.5 323.6L953.0 312.3L953.8 301.2L952.8 290.5L950.2 280.3L946.1 270.5L940.5 261.4L933.5 252.8L925.4 244.9L916.0 237.7L905.7 231.1L894.4 225.3L882.2 220.1L869.4 215.7L855.9 212.0L841.8 209.1L827.3 206.8L812.4 205.3L797.3 204.5L781.8 204.3L766.3 204.9L750.6 206.1L735.0 208.0L719.4 210.5L704.0 213.7L688.7 217.4L673.7 221.8L659.0 226.8L644.8 232.4L631.0 238.6L617.7 245.2L605.1 252.4L593.2 260.1L582.0 268.3L571.8 276.9L562.4 285.9L554.1 295.3L546.9 304.9L540.9 314.9L536.1 325.1L532.8 335.4L530.9 345.9L530.5 356.3L531.8 366.7L534.7 376.9L539.3 386.9L545.7 396.6L553.9 405.8L563.8 414.4L575.4 422.4Z" fill="#1e9300"/><path d="M590.5 428.1L605.3 434.4L621.6 439.6L639.2 443.8L658.1 446.9L677.9 448.7L698.5 449.3L719.7 448.7L741.2 446.7L762.7 443.5L784.0 439.1L804.9 433.5L825.0 426.7L844.2 419.0L862.2 410.4L878.9 400.9L894.1 390.8L907.6 380.2L919.4 369.1L929.3 357.8L937.5 346.3L943.7 334.8L948.1 323.4L950.7 312.2L951.5 301.3L950.6 290.7L948.0 280.6L944.0 270.9L938.4 261.9L931.6 253.4L923.5 245.5L914.3 238.4L904.1 231.9L892.9 226.1L880.9 221.0L868.2 216.6L854.8 212.9L840.9 210.0L826.5 207.7L811.8 206.2L796.7 205.4L781.5 205.2L766.0 205.8L750.5 207.0L735.0 208.8L719.6 211.3L704.3 214.5L689.1 218.2L674.3 222.6L659.7 227.6L645.6 233.1L631.9 239.2L618.8 245.8L606.3 252.9L594.5 260.6L583.5 268.6L573.3 277.2L564.0 286.1L555.8 295.4L548.7 305.0L542.8 314.8L538.1 324.9L534.8 335.2L533.0 345.5L532.7 355.8L533.9 366.1L536.9 376.2L541.5 386.1L547.8 395.6L555.9 404.7L565.7 413.2L577.3 421.1Z" fill="#199300"/><path d="M592.2 426.8L606.9 432.9L623.0 438.1L640.4 442.2L659.0 445.2L678.6 447.0L699.0 447.6L719.9 447.0L741.1 445.0L762.4 441.9L783.4 437.5L804.0 431.9L823.9 425.3L842.9 417.7L860.7 409.1L877.2 399.8L892.2 389.8L905.6 379.3L917.2 368.4L927.1 357.2L935.2 345.9L941.4 334.5L945.8 323.3L948.3 312.2L949.2 301.4L948.3 290.9L945.8 280.9L941.8 271.3L936.4 262.3L929.6 253.9L921.7 246.2L912.6 239.0L902.4 232.6L891.4 226.8L879.5 221.8L866.9 217.5L853.7 213.8L839.9 210.9L825.7 208.7L811.1 207.1L796.2 206.3L781.1 206.2L765.8 206.7L750.4 207.9L735.0 209.7L719.7 212.2L704.5 215.3L689.6 219.0L674.8 223.4L660.4 228.3L646.4 233.8L632.9 239.8L619.9 246.4L607.5 253.4L595.8 261.0L584.9 269.0L574.8 277.5L565.7 286.3L557.6 295.5L550.5 305.0L544.7 314.8L540.1 324.8L536.9 334.9L535.1 345.1L534.8 355.3L536.1 365.5L539.0 375.5L543.6 385.2L549.9 394.7L557.9 403.6L567.7 412.0L579.1 419.8Z" fill="#129300"/><path d="M593.9 425.4L608.4 431.4L624.3 436.5L641.6 440.6L660.0 443.5L679.3 445.3L699.5 445.9L720.1 445.2L741.1 443.3L762.1 440.2L782.9 435.9L803.2 430.4L822.9 423.8L841.6 416.3L859.2 407.9L875.5 398.7L890.3 388.9L903.6 378.5L915.1 367.7L924.9 356.7L932.9 345.5L939.1 334.2L943.4 323.1L946.0 312.1L946.9 301.4L946.0 291.1L943.6 281.2L939.7 271.7L934.3 262.8L927.7 254.5L919.8 246.8L910.8 239.7L900.8 233.3L889.9 227.6L878.2 222.6L865.7 218.3L852.6 214.7L839.0 211.8L824.9 209.6L810.4 208.1L795.7 207.2L780.7 207.1L765.5 207.6L750.3 208.8L735.1 210.6L719.9 213.1L704.8 216.2L690.0 219.8L675.4 224.1L661.1 229.0L647.3 234.4L633.8 240.4L621.0 246.9L608.7 253.9L597.2 261.4L586.3 269.4L576.4 277.8L567.3 286.5L559.3 295.6L552.4 305.0L546.6 314.7L542.1 324.6L538.9 334.6L537.2 344.7L536.9 354.8L538.2 364.9L541.2 374.8L545.7 384.4L552.0 393.7L560.0 402.5L569.6 410.8L581.0 418.5Z" fill="#0a9300"/><path d="M595.6 424.0L610.0 429.9L625.7 435.0L642.8 439.0L660.9 441.9L680.1 443.6L699.9 444.2L720.3 443.5L741.0 441.6L761.8 438.6L782.3 434.3L802.4 428.9L821.8 422.4L840.3 415.0L857.7 406.7L873.8 397.6L888.5 387.9L901.6 377.6L913.0 367.0L922.7 356.1L930.6 345.0L936.8 334.0L941.1 322.9L943.7 312.1L944.5 301.5L943.8 291.3L941.4 281.4L937.5 272.1L932.3 263.3L925.7 255.0L918.0 247.4L909.1 240.4L899.2 234.1L888.4 228.4L876.8 223.5L864.5 219.2L851.5 215.6L838.0 212.7L824.1 210.5L809.8 209.0L795.1 208.2L780.3 208.0L765.3 208.5L750.2 209.7L735.1 211.5L720.1 213.9L705.1 217.0L690.4 220.7L676.0 224.9L661.8 229.7L648.1 235.1L634.8 241.1L622.1 247.5L609.9 254.5L598.5 261.9L587.8 269.8L577.9 278.1L569.0 286.7L561.1 295.8L554.2 305.1L548.5 314.7L544.1 324.4L541.0 334.4L539.3 344.4L539.1 354.4L540.4 364.3L543.3 374.0L547.8 383.6L554.1 392.7L562.0 401.5L571.6 409.7L582.8 417.2Z" fill="#029300"/><path d="M597.3 422.6L611.5 428.5L627.1 433.4L643.9 437.4L661.9 440.2L680.8 441.9L700.4 442.5L720.6 441.8L741.0 440.0L761.5 436.9L781.7 432.7L801.6 427.4L820.7 421.0L839.0 413.6L856.2 405.4L872.1 396.5L886.6 386.9L899.6 376.8L910.9 366.3L920.5 355.5L928.4 344.6L934.5 333.7L938.8 322.8L941.4 312.0L942.2 301.6L941.5 291.5L939.2 281.7L935.4 272.5L930.2 263.8L923.8 255.6L916.1 248.0L907.4 241.1L897.6 234.8L886.9 229.2L875.5 224.3L863.3 220.0L850.4 216.5L837.1 213.6L823.3 211.4L809.1 209.9L794.6 209.1L779.9 208.9L765.0 209.4L750.1 210.6L735.1 212.4L720.2 214.8L705.4 217.8L690.9 221.5L676.5 225.7L662.5 230.5L648.9 235.8L635.8 241.7L623.1 248.1L611.1 255.0L599.8 262.3L589.2 270.1L579.5 278.3L570.7 286.9L562.8 295.9L556.1 305.1L550.5 314.6L546.1 324.3L543.1 334.1L541.4 344.0L541.2 353.9L542.5 363.7L545.4 373.3L550.0 382.7L556.2 391.8L564.0 400.4L573.5 408.5L584.6 415.9Z" fill="#009305"/><path d="M599.0 421.2L613.0 427.0L628.4 431.9L645.1 435.8L662.8 438.6L681.5 440.3L700.9 440.8L720.8 440.1L740.9 438.3L761.2 435.3L781.2 431.1L800.8 425.8L819.7 419.6L837.7 412.3L854.7 404.2L870.4 395.4L884.8 385.9L897.6 376.0L908.8 365.6L918.3 355.0L926.1 344.2L932.1 333.4L936.4 322.6L939.0 312.0L939.9 301.7L939.2 291.6L937.0 282.0L933.3 272.9L928.2 264.2L921.8 256.2L914.3 248.7L905.6 241.8L896.0 235.6L885.4 230.0L874.1 225.1L862.0 220.9L849.3 217.4L836.1 214.5L822.5 212.4L808.4 210.9L794.1 210.0L779.5 209.9L764.8 210.4L750.0 211.5L735.1 213.3L720.4 215.7L705.7 218.7L691.3 222.3L677.1 226.4L663.2 231.2L649.7 236.5L636.7 242.3L624.2 248.7L612.3 255.5L601.1 262.8L590.7 270.5L581.0 278.6L572.3 287.2L564.6 296.0L557.9 305.1L552.4 314.5L548.1 324.1L545.1 333.8L543.5 343.6L543.3 353.4L544.7 363.1L547.6 372.6L552.1 381.9L558.2 390.8L566.0 399.3L575.4 407.3L586.4 414.6Z" fill="#00930d"/><path d="M600.7 419.9L614.6 425.6L629.8 430.3L646.2 434.2L663.8 436.9L682.2 438.6L701.4 439.1L721.0 438.5L740.9 436.6L760.8 433.6L780.6 429.5L799.9 424.3L818.6 418.1L836.5 411.0L853.2 403.0L868.8 394.3L883.0 385.0L895.6 375.1L906.7 364.9L916.1 354.4L923.9 343.8L929.8 333.1L934.1 322.4L936.7 312.0L937.6 301.7L937.0 291.8L934.8 282.3L931.1 273.3L926.1 264.7L919.9 256.7L912.4 249.3L903.9 242.5L894.4 236.3L883.9 230.8L872.7 226.0L860.8 221.8L848.2 218.3L835.2 215.4L821.6 213.3L807.7 211.8L793.5 211.0L779.1 210.8L764.5 211.3L749.8 212.4L735.2 214.2L720.5 216.5L706.0 219.5L691.7 223.1L677.7 227.2L663.9 231.9L650.6 237.2L637.7 242.9L625.3 249.2L613.6 256.0L602.5 263.2L592.1 270.9L582.6 278.9L574.0 287.4L566.3 296.1L559.8 305.2L554.3 314.5L550.1 323.9L547.2 333.5L545.6 343.2L545.5 352.9L546.8 362.4L549.7 371.9L554.2 381.0L560.3 389.9L568.0 398.3L577.3 406.1L588.2 413.4Z" fill="#009314"/><path d="M602.4 418.5L616.1 424.1L631.1 428.8L647.4 432.6L664.7 435.3L682.9 436.9L701.8 437.4L721.2 436.8L740.9 435.0L760.5 432.0L780.1 428.0L799.1 422.8L817.6 416.7L835.2 409.7L851.8 401.8L867.1 393.2L881.1 384.0L893.7 374.3L904.6 364.2L914.0 353.8L921.6 343.3L927.6 332.8L931.8 322.3L934.4 311.9L935.3 301.8L934.7 292.0L932.6 282.6L929.0 273.6L924.1 265.2L917.9 257.3L910.6 249.9L902.1 243.2L892.7 237.1L882.4 231.6L871.3 226.8L859.6 222.6L847.1 219.2L834.2 216.4L820.8 214.2L807.0 212.7L793.0 211.9L778.7 211.8L764.2 212.2L749.7 213.3L735.2 215.1L720.7 217.4L706.3 220.4L692.2 223.9L678.2 228.0L664.6 232.7L651.4 237.9L638.7 243.6L626.4 249.8L614.8 256.5L603.8 263.7L593.6 271.3L584.2 279.2L575.6 287.6L568.1 296.3L561.6 305.2L556.3 314.4L552.1 323.8L549.2 333.3L547.7 342.8L547.6 352.4L549.0 361.8L551.9 371.1L556.3 380.2L562.4 388.9L570.0 397.2L579.3 404.9L590.1 412.1Z" fill="#00931b"/><path d="M604.0 417.1L617.6 422.7L632.5 427.3L648.6 431.0L665.7 433.7L683.6 435.3L702.3 435.7L721.4 435.1L740.8 433.3L760.2 430.4L779.5 426.4L798.3 421.3L816.5 415.3L833.9 408.4L850.3 400.6L865.5 392.1L879.3 383.0L891.7 373.5L902.5 363.5L911.8 353.3L919.4 342.9L925.3 332.5L929.5 322.1L932.1 311.9L933.0 301.9L932.5 292.2L930.4 282.9L926.9 274.0L922.0 265.7L915.9 257.8L908.7 250.5L900.4 243.9L891.1 237.8L880.9 232.4L870.0 227.6L858.3 223.5L846.0 220.1L833.2 217.3L820.0 215.2L806.4 213.7L792.4 212.9L778.3 212.7L764.0 213.2L749.6 214.3L735.2 216.0L720.9 218.3L706.6 221.2L692.6 224.7L678.8 228.8L665.3 233.4L652.3 238.5L639.6 244.2L627.5 250.4L616.0 257.0L605.1 264.1L595.0 271.6L585.7 279.5L577.3 287.8L569.9 296.4L563.5 305.2L558.2 314.3L554.1 323.6L551.3 333.0L549.8 342.4L549.7 351.9L551.1 361.2L554.0 370.4L558.4 379.4L564.5 388.0L572.0 396.1L581.2 403.8L591.9 410.8Z" fill="#009323"/><path d="M605.7 415.8L619.1 421.2L633.8 425.8L649.7 429.4L666.6 432.0L684.3 433.6L702.7 434.1L721.6 433.4L740.8 431.7L759.9 428.8L778.9 424.8L797.5 419.9L815.5 413.9L832.7 407.1L848.8 399.4L863.8 391.0L877.5 382.1L889.7 372.6L900.5 362.8L909.6 352.7L917.1 342.5L923.0 332.2L927.2 321.9L929.8 311.8L930.8 302.0L930.2 292.4L928.2 283.2L924.7 274.4L920.0 266.1L914.0 258.4L906.8 251.2L898.6 244.6L889.5 238.6L879.4 233.2L868.6 228.5L857.1 224.4L844.9 221.0L832.3 218.2L819.2 216.1L805.7 214.6L791.9 213.8L777.9 213.6L763.7 214.1L749.5 215.2L735.2 216.9L721.0 219.2L706.9 222.1L693.0 225.5L679.4 229.6L666.1 234.1L653.1 239.2L640.6 244.9L628.6 251.0L617.2 257.5L606.5 264.6L596.5 272.0L587.3 279.8L579.0 288.0L571.6 296.5L565.3 305.3L560.1 314.3L556.1 323.4L553.3 332.7L551.9 342.1L551.9 351.4L553.3 360.6L556.1 369.7L560.6 378.5L566.5 387.0L574.0 395.1L583.1 402.6L593.7 409.5Z" fill="#00932a"/><path d="M607.4 414.4L620.6 419.8L635.2 424.3L650.8 427.8L667.5 430.4L685.0 432.0L703.2 432.4L721.8 431.8L740.7 430.0L759.7 427.2L778.4 423.3L796.7 418.4L814.5 412.5L831.4 405.7L847.4 398.2L862.2 390.0L875.7 381.1L887.8 371.8L898.4 362.1L907.4 352.2L914.9 342.1L920.7 331.9L924.9 321.8L927.5 311.8L928.5 302.0L927.9 292.6L926.0 283.5L922.6 274.8L917.9 266.6L912.0 258.9L905.0 251.8L896.9 245.3L887.8 239.3L877.9 234.0L867.2 229.3L855.8 225.3L843.8 221.9L831.3 219.1L818.3 217.0L805.0 215.6L791.3 214.8L777.5 214.6L763.5 215.0L749.4 216.1L735.3 217.8L721.2 220.1L707.2 222.9L693.5 226.4L680.0 230.3L666.8 234.9L654.0 239.9L641.6 245.5L629.7 251.5L618.5 258.1L607.8 265.0L598.0 272.4L588.9 280.1L580.7 288.2L573.4 296.6L567.2 305.3L562.1 314.2L558.1 323.3L555.4 332.5L554.0 341.7L554.0 350.9L555.4 360.0L558.3 369.0L562.7 377.7L568.6 386.1L576.0 394.0L585.0 401.4L595.5 408.3Z" fill="#009331"/><path d="M609.0 413.1L622.1 418.3L636.5 422.8L652.0 426.3L668.4 428.8L685.7 430.3L703.7 430.8L722.1 430.1L740.7 428.4L759.4 425.6L777.8 421.7L795.9 416.9L813.4 411.1L830.2 404.4L845.9 397.0L860.5 388.9L873.9 380.2L885.8 371.0L896.3 361.4L905.3 351.6L912.6 341.6L918.4 331.6L922.6 321.6L925.2 311.8L926.2 302.1L925.7 292.8L923.8 283.8L920.5 275.2L915.9 267.1L910.1 259.5L903.1 252.4L895.1 245.9L886.2 240.1L876.4 234.8L865.8 230.1L854.6 226.1L842.7 222.8L830.3 220.0L817.5 218.0L804.3 216.5L790.8 215.7L777.1 215.5L763.2 216.0L749.2 217.0L735.3 218.7L721.4 221.0L707.6 223.8L693.9 227.2L680.6 231.1L667.5 235.6L654.8 240.6L642.6 246.1L630.8 252.1L619.7 258.6L609.2 265.5L599.4 272.8L590.4 280.4L582.3 288.4L575.2 296.8L569.0 305.3L564.0 314.1L560.1 323.1L557.5 332.2L556.1 341.3L556.1 350.4L557.5 359.4L560.4 368.3L564.8 376.8L570.7 385.1L578.0 392.9L586.9 400.3L597.3 407.0Z" fill="#009338"/><path d="M610.7 411.7L623.7 416.9L637.8 421.3L653.1 424.7L669.4 427.2L686.4 428.7L704.1 429.1L722.3 428.5L740.6 426.8L759.1 424.0L777.3 420.2L795.1 415.4L812.4 409.7L828.9 403.2L844.4 395.8L858.9 387.8L872.1 379.2L883.9 370.2L894.3 360.7L903.1 351.0L910.4 341.2L916.1 331.3L920.3 321.4L922.8 311.7L923.9 302.2L923.4 293.0L921.6 284.1L918.3 275.6L913.8 267.6L908.1 260.0L901.3 253.1L893.4 246.6L884.6 240.8L874.9 235.6L864.5 231.0L853.3 227.0L841.6 223.7L829.4 221.0L816.7 218.9L803.6 217.5L790.2 216.7L776.7 216.5L762.9 216.9L749.1 218.0L735.3 219.6L721.5 221.8L707.9 224.6L694.4 228.0L681.1 231.9L668.2 236.4L655.7 241.3L643.5 246.8L631.9 252.7L620.9 259.1L610.5 265.9L600.9 273.1L592.0 280.7L584.0 288.7L577.0 296.9L570.9 305.4L565.9 314.1L562.1 322.9L559.5 331.9L558.2 340.9L558.2 349.9L559.7 358.8L562.5 367.5L566.9 376.0L572.7 384.2L580.0 391.9L588.8 399.1L599.1 405.7Z" fill="#00933f"/><path d="M612.4 410.4L625.2 415.5L639.2 419.8L654.2 423.1L670.3 425.6L687.1 427.0L704.6 427.5L722.5 426.8L740.6 425.1L758.8 422.4L776.8 418.7L794.4 414.0L811.4 408.3L827.7 401.9L843.0 394.6L857.2 386.7L870.3 378.3L881.9 369.3L892.2 360.1L901.0 350.5L908.2 340.8L913.9 331.0L918.0 321.3L920.5 311.7L921.6 302.3L921.2 293.1L919.4 284.4L916.2 276.0L911.8 268.0L906.1 260.6L899.4 253.7L891.6 247.3L882.9 241.6L873.4 236.4L863.1 231.8L852.1 227.9L840.5 224.6L828.4 221.9L815.8 219.9L802.9 218.4L789.7 217.6L776.3 217.4L762.7 217.9L749.0 218.9L735.3 220.5L721.7 222.7L708.2 225.5L694.8 228.8L681.7 232.7L668.9 237.1L656.5 242.0L644.5 247.4L633.0 253.3L622.1 259.6L611.9 266.4L602.4 273.5L593.6 281.0L585.7 288.9L578.7 297.0L572.8 305.4L567.9 314.0L564.1 322.8L561.6 331.6L560.3 340.5L560.4 349.4L561.8 358.2L564.7 366.8L569.0 375.2L574.8 383.2L582.0 390.8L590.7 398.0L600.9 404.5Z" fill="#009346"/><path d="M614.0 409.0L626.6 414.0L640.5 418.3L655.4 421.6L671.2 424.0L687.8 425.4L705.0 425.8L722.7 425.2L740.6 423.5L758.5 420.8L776.2 417.1L793.6 412.5L810.4 407.0L826.4 400.6L841.6 393.5L855.6 385.7L868.5 377.3L880.0 368.5L890.2 359.4L898.8 349.9L906.0 340.4L911.6 330.7L915.7 321.1L918.3 311.6L919.3 302.3L918.9 293.3L917.2 284.6L914.1 276.4L909.7 268.5L904.2 261.2L897.5 254.3L889.9 248.0L881.3 242.3L871.9 237.2L861.7 232.7L850.8 228.8L839.4 225.5L827.4 222.8L815.0 220.8L802.2 219.4L789.1 218.6L775.9 218.4L762.4 218.8L748.9 219.8L735.3 221.4L721.9 223.6L708.5 226.4L695.3 229.7L682.3 233.5L669.6 237.9L657.4 242.7L645.5 248.1L634.2 253.9L623.4 260.1L613.3 266.8L603.8 273.9L595.2 281.3L587.4 289.1L580.5 297.1L574.6 305.4L569.8 313.9L566.1 322.6L563.6 331.4L562.4 340.2L562.5 348.9L564.0 357.6L566.8 366.1L571.1 374.3L576.8 382.3L584.0 389.8L592.6 396.8L602.6 403.2Z" fill="#00934c"/><path d="M615.6 407.7L628.1 412.6L641.8 416.8L656.5 420.1L672.1 422.4L688.5 423.8L705.5 424.2L722.9 423.6L740.5 421.9L758.2 419.3L775.7 415.6L792.8 411.0L809.4 405.6L825.2 399.3L840.1 392.3L854.0 384.6L866.7 376.4L878.1 367.7L888.1 358.7L896.7 349.4L903.8 339.9L909.3 330.4L913.4 321.0L916.0 311.6L917.0 302.4L916.7 293.5L915.0 284.9L911.9 276.7L907.6 269.0L902.2 261.7L895.7 255.0L888.1 248.7L879.7 243.1L870.4 238.0L860.3 233.5L849.6 229.7L838.3 226.4L826.4 223.8L814.2 221.7L801.5 220.3L788.6 219.5L775.4 219.4L762.2 219.8L748.8 220.8L735.4 222.4L722.0 224.5L708.8 227.2L695.7 230.5L682.9 234.3L670.4 238.6L658.2 243.4L646.5 248.7L635.3 254.5L624.6 260.7L614.6 267.3L605.3 274.3L596.8 281.6L589.1 289.3L582.3 297.3L576.5 305.5L571.8 313.9L568.1 322.4L565.7 331.1L564.5 339.8L564.6 348.4L566.1 357.0L568.9 365.4L573.2 373.5L578.9 381.3L586.0 388.7L594.5 395.6L604.4 402.0Z" fill="#009353"/><path d="M617.3 406.3L629.6 411.2L643.1 415.3L657.6 418.5L673.0 420.8L689.2 422.2L705.9 422.6L723.1 421.9L740.5 420.3L757.9 417.7L775.1 414.1L792.0 409.6L808.4 404.2L824.0 398.0L838.7 391.1L852.4 383.6L864.9 375.5L876.2 366.9L886.1 358.0L894.6 348.8L901.6 339.5L907.1 330.1L911.1 320.8L913.7 311.5L914.8 302.5L914.4 293.7L912.8 285.2L909.8 277.1L905.6 269.5L900.2 262.3L893.8 255.6L886.4 249.4L878.0 243.8L868.8 238.8L858.9 234.4L848.3 230.5L837.1 227.3L825.4 224.7L813.3 222.7L800.8 221.3L788.0 220.5L775.0 220.3L761.9 220.7L748.6 221.7L735.4 223.3L722.2 225.4L709.1 228.1L696.2 231.3L683.5 235.1L671.1 239.4L659.1 244.1L647.5 249.4L636.4 255.1L625.9 261.2L616.0 267.7L606.8 274.7L598.4 281.9L590.8 289.5L584.1 297.4L578.4 305.5L573.7 313.8L570.2 322.3L567.8 330.8L566.6 339.4L566.8 347.9L568.2 356.4L571.1 364.7L575.3 372.7L580.9 380.4L588.0 387.7L596.4 394.5L606.2 400.7Z" fill="#00935a"/><path d="M618.9 405.0L631.1 409.8L644.4 413.8L658.7 417.0L673.9 419.2L689.9 420.6L706.4 420.9L723.3 420.3L740.4 418.7L757.6 416.1L774.6 412.6L791.2 408.2L807.3 402.9L822.7 396.8L837.3 390.0L850.8 382.5L863.1 374.5L874.3 366.1L884.0 357.3L892.4 348.3L899.4 339.1L904.8 329.9L908.8 320.6L911.4 311.5L912.5 302.6L912.2 293.9L910.6 285.5L907.7 277.5L903.5 269.9L898.3 262.8L891.9 256.2L884.6 250.1L876.4 244.6L867.3 239.6L857.5 235.2L847.1 231.4L836.0 228.2L824.5 225.6L812.5 223.7L800.1 222.3L787.5 221.5L774.6 221.3L761.6 221.7L748.5 222.7L735.4 224.2L722.4 226.3L709.4 229.0L696.6 232.2L684.1 235.9L671.8 240.1L659.9 244.8L648.5 250.0L637.5 255.7L627.1 261.7L617.3 268.2L608.3 275.0L599.9 282.2L592.5 289.7L585.9 297.5L580.2 305.5L575.7 313.8L572.2 322.1L569.8 330.5L568.7 339.0L568.9 347.4L570.4 355.8L573.2 363.9L577.4 371.9L583.0 379.5L589.9 386.6L598.3 393.3L608.0 399.5Z" fill="#009360"/><path d="M620.6 403.7L632.6 408.4L645.7 412.3L659.8 415.4L674.8 417.7L690.6 419.0L706.8 419.3L723.5 418.7L740.4 417.1L757.3 414.6L774.1 411.1L790.5 406.7L806.3 401.5L821.5 395.5L835.8 388.8L849.2 381.5L861.4 373.6L872.4 365.3L882.0 356.6L890.3 347.7L897.2 338.7L902.6 329.6L906.6 320.5L909.1 311.5L910.2 302.6L910.0 294.1L908.4 285.8L905.5 277.9L901.5 270.4L896.3 263.4L890.1 256.8L882.8 250.8L874.7 245.3L865.8 240.4L856.1 236.1L845.8 232.3L834.9 229.1L823.5 226.6L811.6 224.6L799.4 223.2L786.9 222.5L774.2 222.3L761.4 222.6L748.4 223.6L735.4 225.1L722.5 227.2L709.7 229.9L697.1 233.0L684.7 236.7L672.6 240.9L660.8 245.5L649.5 250.7L638.6 256.2L628.4 262.2L618.7 268.6L609.7 275.4L601.5 282.5L594.1 290.0L587.7 297.7L582.1 305.6L577.6 313.7L574.2 321.9L571.9 330.3L570.8 338.6L571.0 347.0L572.5 355.2L575.3 363.2L579.5 371.0L585.0 378.5L591.9 385.6L600.2 392.2L609.7 398.3Z" fill="#009367"/><path d="M622.2 402.3L634.1 407.0L647.0 410.9L661.0 413.9L675.7 416.1L691.2 417.4L707.3 417.7L723.7 417.1L740.4 415.5L757.0 413.0L773.5 409.6L789.7 405.3L805.3 400.1L820.3 394.2L834.4 387.6L847.6 380.4L859.6 372.7L870.4 364.5L880.0 356.0L888.2 347.2L895.0 338.3L900.3 329.3L904.3 320.3L906.8 311.4L907.9 302.7L907.7 294.3L906.2 286.1L903.4 278.3L899.4 270.9L894.3 263.9L888.2 257.5L881.1 251.5L873.1 246.1L864.3 241.2L854.7 236.9L844.5 233.2L833.8 230.1L822.5 227.5L810.8 225.6L798.7 224.2L786.4 223.4L773.8 223.2L761.1 223.6L748.3 224.6L735.5 226.1L722.7 228.1L710.0 230.7L697.5 233.9L685.3 237.5L673.3 241.6L661.7 246.2L650.5 251.3L639.8 256.8L629.6 262.8L620.1 269.1L611.2 275.8L603.1 282.8L595.8 290.2L589.4 297.8L584.0 305.6L579.6 313.6L576.2 321.8L574.0 330.0L572.9 338.2L573.1 346.5L574.6 354.6L577.4 362.5L581.6 370.2L587.0 377.6L593.9 384.6L602.0 391.1L611.5 397.0Z" fill="#00936d"/><path d="M623.8 401.0L635.5 405.6L648.3 409.4L662.1 412.4L676.6 414.5L691.9 415.8L707.7 416.1L723.9 415.5L740.3 414.0L756.7 411.5L773.0 408.1L788.9 403.9L804.4 398.8L819.1 393.0L833.0 386.5L846.0 379.4L857.9 371.7L868.6 363.7L878.0 355.3L886.1 346.7L892.8 337.9L898.1 329.0L902.0 320.1L904.5 311.4L905.7 302.8L905.5 294.4L904.0 286.4L901.3 278.7L897.4 271.4L892.4 264.5L886.3 258.1L879.3 252.2L871.4 246.9L862.7 242.0L853.3 237.8L843.3 234.1L832.6 231.0L821.5 228.5L809.9 226.5L798.0 225.2L785.8 224.4L773.4 224.2L760.8 224.6L748.2 225.5L735.5 227.0L722.9 229.0L710.3 231.6L698.0 234.7L685.8 238.3L674.0 242.4L662.5 247.0L651.5 252.0L640.9 257.4L630.9 263.3L621.5 269.6L612.7 276.2L604.7 283.1L597.5 290.4L591.2 297.9L585.9 305.6L581.5 313.6L578.2 321.6L576.0 329.7L575.0 337.9L575.3 346.0L576.8 354.0L579.5 361.8L583.6 369.4L589.1 376.6L595.8 383.5L603.9 389.9L613.3 395.8Z" fill="#009374"/><path d="M625.4 399.7L637.0 404.2L649.6 407.9L663.2 410.9L677.5 413.0L692.6 414.2L708.2 414.5L724.1 413.9L740.3 412.4L756.4 409.9L772.5 406.6L788.2 402.4L803.4 397.5L817.9 391.7L831.6 385.3L844.4 378.3L856.1 370.8L866.7 362.9L876.0 354.6L884.0 346.1L890.6 337.4L895.9 328.7L899.8 320.0L902.3 311.3L903.4 302.9L903.2 294.6L901.8 286.7L899.1 279.1L895.3 271.9L890.4 265.1L884.4 258.7L877.5 252.9L869.8 247.6L861.2 242.9L851.9 238.6L842.0 235.0L831.5 231.9L820.5 229.4L809.1 227.5L797.3 226.1L785.2 225.4L773.0 225.2L760.6 225.5L748.0 226.5L735.5 227.9L723.0 230.0L710.6 232.5L698.4 235.6L686.4 239.1L674.8 243.2L663.4 247.7L652.5 252.6L642.0 258.0L632.1 263.8L622.8 270.0L614.2 276.6L606.3 283.4L599.3 290.6L593.0 298.0L587.8 305.7L583.5 313.5L580.2 321.4L578.1 329.5L577.1 337.5L577.4 345.5L578.9 353.4L581.7 361.1L585.7 368.5L591.1 375.7L597.8 382.5L605.8 388.8L615.0 394.5Z" fill="#00937a"/><path d="M627.1 398.4L638.5 402.8L650.9 406.5L664.3 409.4L678.4 411.4L693.3 412.6L708.6 412.9L724.3 412.3L740.2 410.8L756.2 408.4L771.9 405.1L787.4 401.0L802.4 396.1L816.7 390.5L830.2 384.2L842.8 377.3L854.4 369.9L864.8 362.1L874.0 354.0L881.9 345.6L888.4 337.0L893.6 328.4L897.5 319.8L900.0 311.3L901.1 302.9L901.0 294.8L899.6 287.0L897.0 279.5L893.2 272.3L888.4 265.6L882.6 259.4L875.8 253.6L868.1 248.4L859.7 243.7L850.5 239.5L840.7 235.9L830.4 232.8L819.5 230.4L808.2 228.5L796.6 227.1L784.7 226.4L772.6 226.2L760.3 226.5L747.9 227.4L735.5 228.9L723.2 230.9L711.0 233.4L698.9 236.4L687.0 239.9L675.5 243.9L664.3 248.4L653.5 253.3L643.2 258.6L633.4 264.4L624.2 270.5L615.7 277.0L607.9 283.8L601.0 290.8L594.8 298.2L589.6 305.7L585.4 313.4L582.2 321.3L580.2 329.2L579.2 337.1L579.5 345.0L581.0 352.8L583.8 360.4L587.8 367.7L593.1 374.8L599.8 381.4L607.6 387.6L616.8 393.3Z" fill="#009380"/><path d="M628.7 397.1L639.9 401.4L652.2 405.0L665.4 407.9L679.3 409.9L693.9 411.1L709.0 411.3L724.5 410.7L740.2 409.3L755.9 406.9L771.4 403.7L786.6 399.6L801.4 394.8L815.5 389.2L828.8 383.0L841.2 376.3L852.6 369.0L862.9 361.3L872.0 353.3L879.8 345.0L886.3 336.6L891.4 328.1L895.2 319.7L897.7 311.3L898.9 303.0L898.8 295.0L897.4 287.3L894.9 279.8L891.2 272.8L886.4 266.2L880.7 260.0L874.0 254.3L866.5 249.1L858.1 244.5L849.1 240.4L839.4 236.8L829.2 233.8L818.5 231.3L807.4 229.4L795.9 228.1L784.1 227.3L772.1 227.1L760.0 227.5L747.8 228.4L735.6 229.8L723.4 231.8L711.3 234.3L699.3 237.3L687.6 240.7L676.2 244.7L665.2 249.1L654.5 254.0L644.3 259.2L634.7 264.9L625.6 271.0L617.2 277.3L609.5 284.1L602.7 291.1L596.6 298.3L591.5 305.7L587.4 313.4L584.3 321.1L582.2 328.9L581.3 336.7L581.6 344.5L583.1 352.2L585.9 359.6L589.9 366.9L595.2 373.8L601.7 380.4L609.5 386.5L618.5 392.1Z" fill="#009386"/><path d="M630.3 395.8L641.4 400.0L653.5 403.6L666.4 406.3L680.2 408.3L694.6 409.5L709.5 409.8L724.7 409.2L740.2 407.7L755.6 405.4L770.9 402.2L785.9 398.2L800.4 393.5L814.3 388.0L827.4 381.9L839.7 375.2L850.9 368.1L861.0 360.5L870.0 352.6L877.7 344.5L884.1 336.2L889.2 327.8L893.0 319.5L895.5 311.2L896.6 303.1L896.5 295.2L895.2 287.5L892.7 280.2L889.1 273.3L884.5 266.7L878.8 260.7L872.2 255.0L864.8 249.9L856.6 245.3L847.7 241.2L838.2 237.7L828.1 234.7L817.5 232.3L806.5 230.4L795.2 229.1L783.6 228.3L771.7 228.1L759.7 228.5L747.7 229.4L735.6 230.8L723.5 232.7L711.6 235.2L699.8 238.1L688.2 241.6L677.0 245.5L666.0 249.8L655.5 254.6L645.5 259.8L635.9 265.4L627.0 271.4L618.7 277.7L611.2 284.4L604.4 291.3L598.4 298.4L593.4 305.8L589.3 313.3L586.3 320.9L584.3 328.6L583.5 336.3L583.8 344.0L585.3 351.6L588.0 358.9L592.0 366.1L597.2 372.9L603.7 379.4L611.4 385.4L620.3 390.9Z" fill="#00938c"/><path d="M631.9 394.5L642.8 398.6L654.7 402.1L667.5 404.9L681.1 406.8L695.3 407.9L709.9 408.2L724.9 407.6L740.1 406.2L755.3 403.9L770.4 400.7L785.1 396.8L799.4 392.1L813.1 386.8L826.0 380.8L838.1 374.2L849.2 367.2L859.2 359.7L868.0 352.0L875.6 343.9L881.9 335.8L887.0 327.6L890.7 319.3L893.2 311.2L894.4 303.2L894.3 295.4L893.0 287.8L890.6 280.6L887.1 273.8L882.5 267.3L876.9 261.3L870.4 255.7L863.1 250.7L855.1 246.1L846.3 242.1L836.9 238.6L826.9 235.6L816.5 233.2L805.6 231.4L794.5 230.1L783.0 229.3L771.3 229.1L759.5 229.5L747.6 230.3L735.6 231.7L723.7 233.6L711.9 236.1L700.3 239.0L688.9 242.4L677.7 246.2L666.9 250.5L656.5 255.3L646.6 260.4L637.2 266.0L628.4 271.9L620.2 278.1L612.8 284.7L606.1 291.5L600.3 298.6L595.3 305.8L591.3 313.2L588.3 320.8L586.4 328.4L585.6 336.0L585.9 343.5L587.4 351.0L590.1 358.2L594.0 365.3L599.2 372.0L605.6 378.3L613.2 384.2L622.0 389.6Z" fill="#00938f"/><path d="M633.5 393.1L644.3 397.3L656.0 400.7L668.6 403.4L682.0 405.3L695.9 406.4L710.4 406.6L725.1 406.0L740.1 404.6L755.0 402.4L769.9 399.3L784.4 395.4L798.5 390.8L811.9 385.5L824.7 379.6L836.5 373.2L847.4 366.3L857.3 358.9L866.0 351.3L873.5 343.4L879.8 335.4L884.8 327.3L888.5 319.2L890.9 311.1L892.1 303.2L892.1 295.6L890.8 288.1L888.5 281.0L885.0 274.2L880.5 267.9L875.0 261.9L868.7 256.4L861.5 251.4L853.5 246.9L844.9 242.9L835.6 239.5L825.8 236.6L815.5 234.2L804.8 232.3L793.7 231.1L782.4 230.3L770.9 230.1L759.2 230.4L747.4 231.3L735.6 232.7L723.9 234.6L712.2 237.0L700.7 239.8L689.5 243.2L678.5 247.0L667.8 251.3L657.5 256.0L647.8 261.0L638.5 266.5L629.8 272.3L621.7 278.5L614.4 285.0L607.8 291.7L602.1 298.7L597.2 305.8L593.3 313.2L590.3 320.6L588.5 328.1L587.7 335.6L588.0 343.0L589.5 350.4L592.2 357.5L596.1 364.4L601.2 371.1L607.6 377.3L615.1 383.1L623.7 388.4Z" fill="#009391"/><path d="M635.1 391.8L645.7 395.9L657.3 399.2L669.7 401.9L682.8 403.7L696.6 404.8L710.8 405.1L725.3 404.5L740.0 403.1L754.8 400.9L769.3 397.8L783.6 394.0L797.5 389.5L810.8 384.3L823.3 378.5L835.0 372.2L845.7 365.4L855.4 358.1L864.0 350.6L871.4 342.9L877.6 335.0L882.6 327.0L886.2 319.0L888.7 311.1L889.9 303.3L889.8 295.7L888.7 288.4L886.3 281.4L882.9 274.7L878.5 268.4L873.2 262.6L866.9 257.1L859.8 252.2L852.0 247.7L843.4 243.8L834.3 240.4L824.6 237.5L814.5 235.1L803.9 233.3L793.0 232.0L781.8 231.3L770.5 231.1L758.9 231.4L747.3 232.3L735.7 233.6L724.1 235.5L712.5 237.9L701.2 240.7L690.1 244.0L679.2 247.8L668.7 252.0L658.6 256.6L648.9 261.6L639.8 267.1L631.2 272.8L623.2 278.9L616.0 285.3L609.5 291.9L603.9 298.8L599.1 305.9L595.2 313.1L592.4 320.4L590.5 327.8L589.8 335.2L590.1 342.5L591.6 349.7L594.3 356.8L598.2 363.6L603.2 370.1L609.5 376.3L616.9 382.0L625.5 387.2Z" fill="#009293"/><path d="M636.7 390.6L647.2 394.5L658.6 397.8L670.8 400.4L683.7 402.2L697.2 403.3L711.2 403.5L725.5 402.9L740.0 401.5L754.5 399.4L768.8 396.4L782.9 392.6L796.5 388.2L809.6 383.1L821.9 377.4L833.4 371.2L844.0 364.5L853.6 357.4L862.0 350.0L869.3 342.3L875.5 334.6L880.3 326.7L884.0 318.8L886.4 311.1L887.6 303.4L887.6 295.9L886.5 288.7L884.2 281.8L880.9 275.2L876.5 269.0L871.3 263.2L865.1 257.8L858.1 253.0L850.4 248.6L842.0 244.7L833.0 241.3L823.5 238.4L813.5 236.1L803.1 234.3L792.3 233.0L781.3 232.3L770.0 232.1L758.6 232.4L747.2 233.2L735.7 234.6L724.2 236.4L712.9 238.8L701.7 241.6L690.7 244.8L680.0 248.6L669.6 252.7L659.6 257.3L650.1 262.3L641.0 267.6L632.6 273.3L624.8 279.3L617.6 285.6L611.3 292.2L605.7 298.9L601.0 305.9L597.2 313.0L594.4 320.3L592.6 327.5L591.9 334.8L592.2 342.0L593.8 349.1L596.4 356.1L600.3 362.8L605.3 369.2L611.4 375.2L618.8 380.9L627.2 386.0Z" fill="#009093"/><path d="M638.3 389.3L648.6 393.1L659.8 396.4L671.8 398.9L684.6 400.7L697.9 401.7L711.6 402.0L725.7 401.4L740.0 400.0L754.2 397.9L768.3 394.9L782.2 391.3L795.6 386.9L808.4 381.9L820.6 376.3L831.9 370.1L842.3 363.6L851.7 356.6L860.1 349.3L867.3 341.8L873.3 334.2L878.1 326.4L881.8 318.7L884.2 311.0L885.4 303.5L885.4 296.1L884.3 289.0L882.1 282.2L878.8 275.7L874.6 269.5L869.4 263.8L863.3 258.6L856.5 253.7L848.9 249.4L840.6 245.5L831.7 242.2L822.3 239.4L812.5 237.1L802.2 235.3L791.6 234.0L780.7 233.3L769.6 233.1L758.4 233.4L747.1 234.2L735.7 235.5L724.4 237.4L713.2 239.7L702.1 242.4L691.3 245.7L680.7 249.3L670.5 253.5L660.6 258.0L651.2 262.9L642.3 268.1L634.0 273.8L626.3 279.7L619.3 285.9L613.0 292.4L607.5 299.1L602.9 306.0L599.2 313.0L596.4 320.1L594.7 327.3L594.0 334.4L594.4 341.5L595.9 348.5L598.5 355.4L602.3 362.0L607.3 368.3L613.4 374.2L620.6 379.7L628.9 384.8Z" fill="#008e93"/><path d="M639.8 388.0L650.0 391.8L661.1 395.0L672.9 397.4L685.4 399.2L698.5 400.2L712.1 400.4L725.9 399.9L739.9 398.5L753.9 396.4L767.8 393.5L781.4 389.9L794.6 385.6L807.2 380.7L819.2 375.2L830.3 369.1L840.6 362.7L849.9 355.8L858.1 348.7L865.2 341.3L871.2 333.7L875.9 326.1L879.5 318.5L881.9 311.0L883.1 303.5L883.2 296.3L882.1 289.3L879.9 282.6L876.8 276.1L872.6 270.1L867.5 264.5L861.5 259.3L854.8 254.5L847.3 250.2L839.2 246.4L830.4 243.1L821.2 240.3L811.4 238.0L801.3 236.3L790.9 235.0L780.1 234.3L769.2 234.1L758.1 234.4L746.9 235.2L735.7 236.5L724.6 238.3L713.5 240.6L702.6 243.3L691.9 246.5L681.5 250.1L671.4 254.2L661.7 258.6L652.4 263.5L643.6 268.7L635.4 274.2L627.8 280.1L620.9 286.2L614.7 292.6L609.3 299.2L604.8 306.0L601.1 312.9L598.5 319.9L596.7 327.0L596.1 334.0L596.5 341.1L598.0 347.9L600.6 354.7L604.4 361.2L609.3 367.4L615.3 373.2L622.4 378.6L630.6 383.6Z" fill="#008b93"/><path d="M641.4 386.7L651.4 390.4L662.3 393.5L674.0 396.0L686.3 397.7L699.2 398.7L712.5 398.9L726.1 398.3L739.9 397.0L753.7 394.9L767.3 392.1L780.7 388.5L793.7 384.3L806.1 379.5L817.8 374.0L828.8 368.1L838.9 361.8L848.1 355.0L856.2 348.0L863.2 340.7L869.0 333.3L873.8 325.9L877.3 318.4L879.7 310.9L880.9 303.6L880.9 296.5L879.9 289.6L877.8 282.9L874.7 276.6L870.6 270.7L865.6 265.1L859.8 260.0L853.1 255.3L845.8 251.0L837.8 247.3L829.1 244.0L820.0 241.3L810.4 239.0L800.4 237.3L790.1 236.0L779.5 235.3L768.8 235.1L757.8 235.4L746.8 236.2L735.8 237.5L724.8 239.2L713.8 241.5L703.1 244.2L692.5 247.3L682.2 250.9L672.3 254.9L662.7 259.3L653.5 264.1L644.9 269.2L636.8 274.7L629.3 280.5L622.5 286.5L616.4 292.8L611.2 299.3L606.7 306.0L603.1 312.8L600.5 319.8L598.8 326.7L598.2 333.7L598.6 340.6L600.1 347.3L602.7 354.0L606.4 360.3L611.3 366.4L617.2 372.2L624.3 377.5L632.3 382.4Z" fill="#008993"/><path d="M643.0 385.4L652.9 389.1L663.6 392.1L675.0 394.5L687.2 396.2L699.8 397.1L712.9 397.3L726.3 396.8L739.8 395.5L753.4 393.4L766.8 390.6L780.0 387.2L792.7 383.0L804.9 378.3L816.5 372.9L827.3 367.1L837.2 360.9L846.2 354.3L854.2 347.3L861.1 340.2L866.9 332.9L871.6 325.6L875.1 318.2L877.4 310.9L878.6 303.7L878.7 296.7L877.7 289.9L875.7 283.3L872.6 277.1L868.6 271.2L863.7 265.8L858.0 260.7L851.4 256.0L844.2 251.9L836.3 248.2L827.8 244.9L818.9 242.2L809.4 240.0L799.6 238.2L789.4 237.0L779.0 236.3L768.3 236.1L757.5 236.4L746.7 237.2L735.8 238.4L724.9 240.2L714.2 242.4L703.5 245.1L693.1 248.2L683.0 251.7L673.2 255.7L663.7 260.0L654.7 264.7L646.2 269.8L638.2 275.2L630.9 280.9L624.2 286.8L618.2 293.0L613.0 299.5L608.6 306.1L605.1 312.8L602.5 319.6L600.9 326.4L600.3 333.3L600.7 340.1L602.2 346.7L604.8 353.2L608.5 359.5L613.3 365.5L619.2 371.2L626.1 376.4L634.1 381.2Z" fill="#008793"/><path d="M644.6 384.1L654.3 387.7L664.8 390.7L676.1 393.0L688.0 394.7L700.5 395.6L713.4 395.8L726.5 395.3L739.8 394.0L753.1 392.0L766.3 389.2L779.2 385.8L791.8 381.7L803.8 377.1L815.1 371.8L825.8 366.1L835.5 360.0L844.4 353.5L852.3 346.7L859.1 339.7L864.8 332.5L869.4 325.3L872.8 318.1L875.2 310.9L876.4 303.8L876.5 296.8L875.5 290.1L873.5 283.7L870.6 277.6L866.6 271.8L861.8 266.4L856.2 261.4L849.8 256.8L842.6 252.7L834.9 249.0L826.5 245.8L817.7 243.1L808.4 240.9L798.7 239.2L788.7 238.0L778.4 237.3L767.9 237.1L757.3 237.4L746.6 238.2L735.8 239.4L725.1 241.1L714.5 243.3L704.0 245.9L693.8 249.0L683.7 252.5L674.1 256.4L664.8 260.7L655.9 265.3L647.5 270.3L639.6 275.6L632.4 281.3L625.8 287.1L619.9 293.3L614.8 299.6L610.5 306.1L607.1 312.7L604.5 319.4L603.0 326.2L602.4 332.9L602.8 339.6L604.3 346.1L606.9 352.5L610.6 358.7L615.3 364.6L621.1 370.1L627.9 375.3L635.8 380.0Z" fill="#008593"/><path d="M646.1 382.8L655.7 386.4L666.1 389.3L677.2 391.6L688.9 393.2L701.1 394.1L713.8 394.3L726.7 393.8L739.8 392.5L752.8 390.5L765.8 387.8L778.5 384.4L790.8 380.5L802.6 375.9L813.8 370.7L824.2 365.1L833.9 359.1L842.6 352.7L850.3 346.0L857.0 339.2L862.7 332.1L867.2 325.0L870.6 317.9L872.9 310.8L874.2 303.8L874.3 297.0L873.4 290.4L871.4 284.1L868.5 278.1L864.6 272.4L859.9 267.0L854.4 262.1L848.1 257.6L841.1 253.5L833.5 249.9L825.2 246.8L816.5 244.1L807.4 241.9L797.8 240.2L787.9 239.0L777.8 238.3L767.5 238.1L757.0 238.4L746.4 239.2L735.8 240.4L725.3 242.1L714.8 244.2L704.5 246.8L694.4 249.8L684.5 253.3L675.0 257.1L665.8 261.4L657.0 265.9L648.8 270.9L641.1 276.1L633.9 281.7L627.4 287.5L621.7 293.5L616.6 299.7L612.4 306.1L609.1 312.6L606.6 319.2L605.1 325.9L604.5 332.5L605.0 339.1L606.5 345.5L609.0 351.8L612.6 357.9L617.3 363.7L623.0 369.1L629.7 374.2L637.5 378.8Z" fill="#008293"/><path d="M647.7 381.6L657.1 385.0L667.3 387.9L678.2 390.1L689.7 391.7L701.8 392.6L714.2 392.8L726.9 392.2L739.7 391.0L752.6 389.0L765.3 386.4L777.8 383.1L789.9 379.2L801.5 374.7L812.5 369.6L822.7 364.1L832.2 358.2L840.8 352.0L848.4 345.4L855.0 338.6L860.5 331.7L865.0 324.7L868.4 317.7L870.7 310.8L871.9 303.9L872.1 297.2L871.2 290.7L869.3 284.5L866.4 278.5L862.7 272.9L858.0 267.7L852.6 262.8L846.4 258.4L839.5 254.3L832.0 250.8L823.9 247.7L815.4 245.0L806.3 242.9L796.9 241.2L787.2 240.1L777.2 239.4L767.0 239.1L756.7 239.4L746.3 240.2L735.9 241.4L725.5 243.0L715.1 245.2L705.0 247.7L695.0 250.7L685.3 254.1L675.9 257.9L666.8 262.0L658.2 266.6L650.1 271.4L642.5 276.6L635.5 282.1L629.1 287.8L623.4 293.7L618.5 299.9L614.3 306.2L611.0 312.6L608.6 319.1L607.1 325.6L606.6 332.1L607.1 338.6L608.6 344.9L611.1 351.1L614.7 357.1L619.3 362.8L624.9 368.1L631.6 373.1L639.2 377.6Z" fill="#007d93"/><path d="M649.3 380.3L658.5 383.7L668.5 386.5L679.3 388.7L690.6 390.2L702.4 391.1L714.6 391.3L727.1 390.7L739.7 389.5L752.3 387.6L764.8 385.0L777.0 381.8L788.9 377.9L800.3 373.5L811.1 368.5L821.2 363.1L830.5 357.3L838.9 351.2L846.4 344.8L853.0 338.1L858.4 331.3L862.9 324.5L866.2 317.6L868.5 310.7L869.7 304.0L869.9 297.4L869.0 291.0L867.2 284.9L864.4 279.0L860.7 273.5L856.1 268.3L850.8 263.5L844.7 259.1L838.0 255.2L830.6 251.7L822.6 248.6L814.2 246.0L805.3 243.9L796.0 242.2L786.5 241.1L776.6 240.4L766.6 240.2L756.4 240.4L746.2 241.2L735.9 242.3L725.6 244.0L715.5 246.1L705.4 248.6L695.6 251.5L686.0 254.9L676.8 258.6L667.9 262.7L659.4 267.2L651.4 272.0L643.9 277.1L637.0 282.4L630.7 288.1L625.2 293.9L620.3 300.0L616.2 306.2L613.0 312.5L610.7 318.9L609.2 325.3L608.7 331.8L609.2 338.1L610.7 344.3L613.2 350.4L616.7 356.3L621.3 361.8L626.8 367.1L633.4 371.9L640.9 376.4Z" fill="#007893"/><path d="M650.8 379.0L659.9 382.4L669.8 385.1L680.3 387.2L691.4 388.8L703.0 389.6L715.0 389.8L727.3 389.2L739.6 388.0L752.0 386.1L764.3 383.6L776.3 380.4L788.0 376.6L799.2 372.3L809.8 367.5L819.7 362.2L828.8 356.5L837.1 350.4L844.5 344.1L850.9 337.6L856.3 330.9L860.7 324.2L864.0 317.4L866.3 310.7L867.5 304.1L867.6 297.6L866.8 291.3L865.0 285.3L862.3 279.5L858.7 274.1L854.2 269.0L849.0 264.2L843.0 259.9L836.4 256.0L829.1 252.5L821.3 249.5L813.0 247.0L804.3 244.9L795.2 243.2L785.7 242.1L776.0 241.4L766.2 241.2L756.1 241.4L746.0 242.2L735.9 243.3L725.8 244.9L715.8 247.0L705.9 249.5L696.2 252.4L686.8 255.7L677.7 259.4L668.9 263.4L660.6 267.8L652.7 272.5L645.3 277.5L638.6 282.8L632.4 288.4L626.9 294.2L622.1 300.1L618.2 306.2L615.0 312.4L612.7 318.7L611.3 325.1L610.8 331.4L611.3 337.6L612.8 343.7L615.3 349.7L618.8 355.5L623.3 360.9L628.7 366.1L635.2 370.8L642.6 375.2Z" fill="#007393"/><path d="M652.4 377.8L661.3 381.0L671.0 383.7L681.4 385.8L692.3 387.3L703.7 388.1L715.4 388.3L727.5 387.7L739.6 386.6L751.8 384.7L763.8 382.2L775.6 379.1L787.1 375.4L798.1 371.1L808.5 366.4L818.2 361.2L827.2 355.6L835.3 349.7L842.6 343.5L848.9 337.1L854.2 330.5L858.5 323.9L861.8 317.3L864.0 310.7L865.2 304.1L865.4 297.8L864.6 291.6L862.9 285.6L860.2 280.0L856.7 274.6L852.3 269.6L847.2 264.9L841.3 260.7L834.8 256.8L827.7 253.4L820.0 250.4L811.8 247.9L803.2 245.8L794.3 244.2L785.0 243.1L775.5 242.4L765.7 242.2L755.9 242.5L745.9 243.2L735.9 244.3L726.0 245.9L716.1 247.9L706.4 250.4L696.9 253.2L687.6 256.5L678.6 260.1L670.0 264.1L661.8 268.4L654.0 273.1L646.8 278.0L640.1 283.2L634.0 288.7L628.7 294.4L624.0 300.3L620.1 306.3L617.0 312.4L614.7 318.6L613.4 324.8L612.9 331.0L613.4 337.1L614.9 343.2L617.4 349.0L620.8 354.6L625.2 360.0L630.6 365.1L637.0 369.7L644.2 374.0Z" fill="#006e93"/><path d="M653.9 376.5L662.7 379.7L672.2 382.3L682.4 384.4L693.1 385.8L704.3 386.6L715.9 386.8L727.6 386.3L739.6 385.1L751.5 383.3L763.3 380.8L774.9 377.8L786.1 374.1L796.9 370.0L807.1 365.3L816.7 360.2L825.5 354.7L833.5 348.9L840.7 342.8L846.9 336.6L852.1 330.1L856.4 323.6L859.6 317.1L861.8 310.6L863.0 304.2L863.2 297.9L862.5 291.9L860.8 286.0L858.2 280.5L854.7 275.2L850.4 270.2L845.4 265.7L839.6 261.5L833.2 257.7L826.2 254.3L818.7 251.4L810.7 248.9L802.2 246.8L793.4 245.2L784.3 244.1L774.9 243.4L765.3 243.2L755.6 243.5L745.8 244.2L736.0 245.3L726.2 246.9L716.5 248.9L706.9 251.3L697.5 254.1L688.4 257.3L679.5 260.9L671.0 264.8L663.0 269.1L655.3 273.6L648.2 278.5L641.7 283.6L635.7 289.0L630.4 294.6L625.8 300.4L622.0 306.3L619.0 312.3L616.8 318.4L615.5 324.5L615.0 330.6L615.6 336.6L617.0 342.6L619.5 348.3L622.9 353.8L627.2 359.1L632.5 364.1L638.8 368.6L645.9 372.8Z" fill="#006993"/><path d="M655.5 375.2L664.1 378.4L673.5 380.9L683.4 383.0L694.0 384.4L704.9 385.1L716.3 385.3L727.8 384.8L739.5 383.6L751.2 381.8L762.8 379.4L774.2 376.4L785.2 372.9L795.8 368.8L805.8 364.2L815.2 359.2L823.9 353.8L831.8 348.1L838.8 342.2L844.9 336.0L850.0 329.7L854.2 323.4L857.4 316.9L859.6 310.6L860.8 304.3L861.0 298.1L860.3 292.2L858.6 286.4L856.1 280.9L852.7 275.7L848.5 270.9L843.6 266.4L838.0 262.2L831.7 258.5L824.8 255.2L817.4 252.3L809.5 249.8L801.2 247.8L792.5 246.3L783.5 245.1L774.3 244.5L764.9 244.3L755.3 244.5L745.7 245.2L736.0 246.3L726.3 247.8L716.8 249.8L707.4 252.2L698.1 254.9L689.1 258.1L680.4 261.6L672.1 265.5L664.1 269.7L656.6 274.2L649.7 279.0L643.2 284.0L637.4 289.3L632.2 294.8L627.7 300.5L623.9 306.3L621.0 312.2L618.8 318.2L617.5 324.2L617.2 330.2L617.7 336.1L619.1 342.0L621.5 347.6L624.9 353.0L629.2 358.2L634.4 363.1L640.6 367.5L647.6 371.6Z" fill="#006493"/><path d="M657.0 374.0L665.5 377.0L674.7 379.6L684.5 381.5L694.8 382.9L705.6 383.7L716.7 383.8L728.0 383.3L739.5 382.2L751.0 380.4L762.3 378.1L773.5 375.1L784.3 371.6L794.7 367.6L804.5 363.1L813.7 358.2L822.2 353.0L830.0 347.4L836.9 341.6L842.9 335.5L847.9 329.3L852.0 323.1L855.2 316.8L857.4 310.5L858.6 304.4L858.8 298.3L858.1 292.4L856.5 286.8L854.0 281.4L850.7 276.3L846.6 271.5L841.8 267.1L836.3 263.0L830.1 259.3L823.3 256.1L816.0 253.2L808.3 250.8L800.1 248.8L791.6 247.3L782.8 246.2L773.7 245.5L764.4 245.3L755.0 245.5L745.5 246.2L736.0 247.3L726.5 248.8L717.1 250.7L707.9 253.1L698.8 255.8L689.9 258.9L681.4 262.4L673.2 266.2L665.3 270.3L658.0 274.7L651.1 279.5L644.8 284.4L639.0 289.7L633.9 295.1L629.5 300.6L625.9 306.4L623.0 312.2L620.9 318.1L619.6 324.0L619.3 329.8L619.8 335.7L621.2 341.4L623.6 346.9L626.9 352.2L631.2 357.3L636.3 362.0L642.4 366.4L649.3 370.4Z" fill="#005e93"/><path d="M658.6 372.7L666.9 375.7L675.9 378.2L685.5 380.1L695.6 381.4L706.2 382.2L717.1 382.3L728.2 381.8L739.5 380.7L750.7 379.0L761.8 376.7L772.8 373.8L783.4 370.4L793.6 366.5L803.2 362.1L812.3 357.3L820.6 352.1L828.2 346.6L835.0 340.9L840.9 335.0L845.8 328.9L849.9 322.8L853.0 316.6L855.2 310.5L856.3 304.4L856.6 298.5L855.9 292.7L854.4 287.2L852.0 281.9L848.7 276.9L844.7 272.2L840.0 267.8L834.6 263.8L828.5 260.2L821.9 257.0L814.7 254.2L807.1 251.8L799.1 249.8L790.7 248.3L782.0 247.2L773.1 246.5L764.0 246.3L754.7 246.6L745.4 247.2L736.0 248.3L726.7 249.8L717.5 251.7L708.3 254.0L699.4 256.7L690.7 259.7L682.3 263.1L674.2 266.9L666.5 270.9L659.3 275.3L652.5 280.0L646.3 284.9L640.7 290.0L635.7 295.3L631.4 300.8L627.8 306.4L625.0 312.1L622.9 317.9L621.7 323.7L621.4 329.5L621.9 335.2L623.3 340.8L625.7 346.2L629.0 351.4L633.1 356.4L638.2 361.0L644.2 365.4L651.0 369.3Z" fill="#005993"/><path d="M660.1 371.5L668.3 374.4L677.1 376.8L686.5 378.7L696.5 380.0L706.8 380.7L717.5 380.8L728.4 380.4L739.4 379.3L750.4 377.6L761.4 375.3L772.1 372.5L782.5 369.2L792.4 365.3L801.9 361.0L810.8 356.3L819.0 351.3L826.4 345.9L833.1 340.3L838.9 334.5L843.8 328.5L847.8 322.5L850.8 316.5L852.9 310.5L854.1 304.5L854.4 298.7L853.8 293.0L852.3 287.6L849.9 282.4L846.7 277.4L842.8 272.8L838.2 268.5L832.9 264.6L826.9 261.0L820.4 257.9L813.4 255.1L805.9 252.7L798.0 250.8L789.8 249.3L781.3 248.2L772.5 247.6L763.5 247.4L754.4 247.6L745.3 248.2L736.1 249.3L726.9 250.8L717.8 252.6L708.8 254.9L700.0 257.5L691.5 260.5L683.2 263.9L675.3 267.6L667.7 271.6L660.6 275.9L654.0 280.4L647.9 285.3L642.4 290.3L637.5 295.5L633.2 300.9L629.7 306.4L626.9 312.1L625.0 317.7L623.8 323.4L623.5 329.1L624.0 334.7L625.5 340.2L627.8 345.5L631.0 350.6L635.1 355.5L640.1 360.0L646.0 364.3L652.6 368.1Z" fill="#005493"/><path d="M661.6 370.2L669.6 373.1L678.3 375.5L687.6 377.3L697.3 378.6L707.4 379.3L717.9 379.4L728.6 378.9L739.4 377.8L750.2 376.2L760.9 374.0L771.4 371.2L781.6 367.9L791.3 364.2L800.6 360.0L809.3 355.3L817.3 350.4L824.6 345.1L831.2 339.7L836.9 334.0L841.7 328.1L845.6 322.2L848.6 316.3L850.7 310.4L851.9 304.6L852.2 298.9L851.6 293.3L850.1 288.0L847.8 282.8L844.7 278.0L840.9 273.5L836.4 269.2L831.2 265.4L825.3 261.9L819.0 258.7L812.1 256.0L804.7 253.7L797.0 251.8L788.9 250.3L780.5 249.3L771.9 248.6L763.1 248.4L754.2 248.6L745.1 249.3L736.1 250.3L727.1 251.7L718.1 253.6L709.3 255.8L700.7 258.4L692.3 261.3L684.2 264.6L676.4 268.3L668.9 272.2L662.0 276.4L655.4 280.9L649.5 285.7L644.0 290.6L639.2 295.7L635.1 301.0L631.7 306.5L628.9 312.0L627.0 317.6L625.9 323.1L625.6 328.7L626.1 334.2L627.6 339.6L629.9 344.8L633.0 349.8L637.1 354.6L642.0 359.0L647.7 363.2L654.3 366.9Z" fill="#004e93"/><path d="M663.1 369.0L671.0 371.8L679.5 374.1L688.6 375.9L698.1 377.1L708.1 377.8L718.3 377.9L728.8 377.4L739.3 376.4L749.9 374.8L760.4 372.6L770.7 369.9L780.6 366.7L790.2 363.0L799.3 358.9L807.8 354.4L815.7 349.5L822.9 344.4L829.3 339.0L834.9 333.5L839.6 327.8L843.5 322.0L846.5 316.2L848.5 310.4L849.7 304.7L850.0 299.0L849.4 293.6L848.0 288.3L845.8 283.3L842.7 278.6L839.0 274.1L834.5 270.0L829.4 266.2L823.7 262.7L817.5 259.6L810.7 257.0L803.5 254.7L795.9 252.8L788.0 251.3L779.8 250.3L771.3 249.7L762.6 249.5L753.9 249.7L745.0 250.3L736.1 251.3L727.3 252.7L718.5 254.5L709.8 256.7L701.3 259.3L693.1 262.2L685.1 265.4L677.4 269.0L670.1 272.8L663.3 277.0L656.9 281.4L651.0 286.1L645.7 290.9L641.0 296.0L637.0 301.2L633.6 306.5L630.9 311.9L629.1 317.4L628.0 322.9L627.7 328.3L628.2 333.7L629.7 339.0L631.9 344.1L635.1 349.0L639.1 353.7L643.9 358.0L649.5 362.1L656.0 365.8Z" fill="#004993"/><path d="M664.7 367.8L672.4 370.5L680.7 372.7L689.6 374.5L698.9 375.7L708.7 376.4L718.7 376.5L729.0 376.0L739.3 375.0L749.7 373.4L759.9 371.3L770.0 368.6L779.7 365.5L789.1 361.9L798.0 357.8L806.4 353.4L814.1 348.7L821.1 343.7L827.4 338.4L832.9 332.9L837.5 327.4L841.3 321.7L844.3 316.0L846.3 310.3L847.5 304.7L847.8 299.2L847.2 293.9L845.9 288.7L843.7 283.8L840.8 279.1L837.1 274.8L832.7 270.7L827.7 266.9L822.2 263.6L816.0 260.5L809.4 257.9L802.3 255.7L794.9 253.8L787.1 252.4L779.0 251.3L770.7 250.7L762.2 250.5L753.6 250.7L744.9 251.3L736.1 252.3L727.4 253.7L718.8 255.5L710.3 257.6L702.0 260.1L693.9 263.0L686.0 266.2L678.5 269.7L671.4 273.5L664.6 277.6L658.4 281.9L652.6 286.5L647.4 291.2L642.8 296.2L638.8 301.3L635.5 306.5L632.9 311.9L631.1 317.2L630.1 322.6L629.8 327.9L630.4 333.2L631.8 338.4L634.0 343.4L637.1 348.2L641.0 352.8L645.8 357.1L651.3 361.0L657.6 364.6Z" fill="#004593"/><path d="M666.2 366.5L673.7 369.2L681.9 371.4L690.6 373.1L699.8 374.3L709.3 374.9L719.1 375.0L729.1 374.5L739.3 373.5L749.4 372.0L759.4 369.9L769.3 367.3L778.8 364.2L788.0 360.7L796.7 356.8L804.9 352.5L812.5 347.8L819.4 342.9L825.5 337.8L830.9 332.4L835.5 327.0L839.2 321.4L842.1 315.9L844.1 310.3L845.3 304.8L845.6 299.4L845.1 294.2L843.7 289.1L841.6 284.3L838.8 279.7L835.2 275.4L830.9 271.4L826.0 267.7L820.6 264.4L814.6 261.4L808.1 258.8L801.1 256.6L793.8 254.8L786.2 253.4L778.2 252.4L770.1 251.8L761.8 251.6L753.3 251.8L744.7 252.3L736.2 253.3L727.6 254.7L719.1 256.4L710.8 258.5L702.6 261.0L694.7 263.8L687.0 266.9L679.6 270.4L672.6 274.1L666.0 278.1L659.8 282.4L654.2 286.9L649.1 291.6L644.6 296.4L640.7 301.4L637.5 306.6L635.0 311.8L633.2 317.0L632.1 322.3L631.9 327.5L632.5 332.7L633.9 337.8L636.1 342.7L639.1 347.4L643.0 351.9L647.6 356.1L653.1 359.9L659.3 363.4Z" fill="#004093"/><path d="M667.7 365.3L675.1 367.9L683.1 370.0L691.6 371.7L700.6 372.8L709.9 373.5L719.5 373.6L729.3 373.1L739.2 372.1L749.1 370.6L759.0 368.6L768.6 366.0L777.9 363.0L786.9 359.6L795.5 355.7L803.5 351.5L810.9 347.0L817.6 342.2L823.7 337.1L828.9 331.9L833.4 326.6L837.1 321.2L839.9 315.7L841.9 310.3L843.1 304.9L843.4 299.6L842.9 294.5L841.6 289.5L839.6 284.8L836.8 280.3L833.3 276.0L829.1 272.1L824.3 268.5L819.0 265.2L813.1 262.3L806.7 259.8L799.9 257.6L792.8 255.8L785.3 254.4L777.5 253.4L769.5 252.8L761.3 252.6L753.0 252.8L744.6 253.4L736.2 254.3L727.8 255.7L719.5 257.4L711.3 259.5L703.3 261.9L695.4 264.6L687.9 267.7L680.7 271.1L673.8 274.8L667.3 278.7L661.3 282.9L655.8 287.3L650.8 291.9L646.4 296.7L642.6 301.6L639.4 306.6L637.0 311.7L635.2 316.9L634.2 322.0L634.0 327.2L634.6 332.2L636.0 337.2L638.1 342.0L641.1 346.6L644.9 351.0L649.5 355.1L654.9 358.8L660.9 362.3Z" fill="#003b93"/><path d="M669.2 364.1L676.5 366.6L684.3 368.7L692.6 370.3L701.4 371.4L710.5 372.0L719.9 372.1L729.5 371.7L739.2 370.7L748.9 369.2L758.5 367.2L767.9 364.8L777.1 361.8L785.8 358.5L794.2 354.7L802.0 350.6L809.3 346.1L815.9 341.4L821.8 336.5L827.0 331.4L831.4 326.2L835.0 320.9L837.8 315.5L839.7 310.2L840.9 304.9L841.2 299.8L840.7 294.7L839.5 289.9L837.5 285.2L834.8 280.8L831.3 276.7L827.3 272.8L822.6 269.3L817.4 266.1L811.6 263.2L805.4 260.7L798.7 258.6L791.7 256.8L784.4 255.5L776.7 254.5L768.9 253.9L760.9 253.7L752.7 253.9L744.5 254.4L736.2 255.4L728.0 256.7L719.8 258.4L711.8 260.4L703.9 262.8L696.2 265.5L688.8 268.5L681.7 271.8L675.0 275.4L668.7 279.3L662.8 283.4L657.3 287.7L652.5 292.2L648.1 296.9L644.4 301.7L641.4 306.6L639.0 311.7L637.3 316.7L636.3 321.8L636.1 326.8L636.7 331.7L638.1 336.6L640.2 341.3L643.2 345.8L646.9 350.1L651.4 354.1L656.6 357.8L662.6 361.1Z" fill="#003793"/><path d="M670.7 362.8L677.8 365.3L685.5 367.3L693.6 368.9L702.2 370.0L711.1 370.6L720.3 370.7L729.7 370.2L739.2 369.3L748.6 367.8L758.0 365.9L767.2 363.5L776.2 360.6L784.8 357.3L792.9 353.7L800.6 349.6L807.7 345.3L814.1 340.7L819.9 335.9L825.0 330.9L829.3 325.8L832.9 320.6L835.6 315.4L837.5 310.2L838.7 305.0L839.0 300.0L838.6 295.0L837.4 290.3L835.4 285.7L832.8 281.4L829.4 277.3L825.5 273.6L820.9 270.1L815.8 266.9L810.1 264.1L804.0 261.7L797.5 259.6L790.6 257.8L783.4 256.5L776.0 255.5L768.3 254.9L760.4 254.7L752.4 254.9L744.3 255.5L736.2 256.4L728.2 257.7L720.2 259.3L712.3 261.3L704.6 263.6L697.0 266.3L689.8 269.3L682.8 272.5L676.2 276.0L670.0 279.8L664.2 283.9L658.9 288.1L654.2 292.5L649.9 297.1L646.3 301.8L643.3 306.7L641.0 311.6L639.3 316.5L638.4 321.5L638.2 326.4L638.8 331.3L640.2 336.0L642.3 340.6L645.2 345.0L648.8 349.2L653.2 353.1L658.4 356.7L664.2 359.9Z" fill="#003393"/><path d="M672.2 361.6L679.2 364.0L686.7 366.0L694.6 367.5L703.0 368.6L711.7 369.2L720.7 369.2L729.9 368.8L739.1 367.9L748.4 366.5L757.5 364.6L766.5 362.2L775.3 359.4L783.7 356.2L791.6 352.6L799.1 348.7L806.1 344.5L812.4 340.0L818.1 335.3L823.0 330.4L827.3 325.4L830.7 320.3L833.4 315.2L835.3 310.1L836.5 305.1L836.8 300.1L836.4 295.3L835.2 290.7L833.3 286.2L830.8 282.0L827.5 278.0L823.6 274.3L819.2 270.9L814.2 267.8L808.7 265.0L802.7 262.6L796.3 260.6L789.6 258.9L782.5 257.5L775.2 256.6L767.7 256.0L759.9 255.8L752.1 256.0L744.2 256.5L736.3 257.4L728.4 258.7L720.5 260.3L712.8 262.2L705.2 264.5L697.9 267.1L690.7 270.0L683.9 273.2L677.5 276.7L671.4 280.4L665.7 284.4L660.5 288.5L655.9 292.9L651.7 297.4L648.2 302.0L645.3 306.7L643.0 311.5L641.4 316.4L640.5 321.2L640.3 326.0L640.9 330.8L642.3 335.4L644.3 339.9L647.2 344.2L650.8 348.3L655.1 352.1L660.1 355.6L665.9 358.8Z" fill="#002f93"/><path d="M673.7 360.4L680.5 362.7L687.8 364.7L695.6 366.2L703.8 367.2L712.3 367.7L721.1 367.8L730.1 367.4L739.1 366.5L748.1 365.1L757.1 363.2L765.9 360.9L774.4 358.2L782.6 355.1L790.4 351.6L797.7 347.7L804.5 343.6L810.7 339.2L816.2 334.7L821.1 329.9L825.2 325.0L828.6 320.1L831.3 315.1L833.2 310.1L834.3 305.2L834.6 300.3L834.2 295.6L833.1 291.0L831.3 286.7L828.8 282.5L825.6 278.6L821.8 275.0L817.4 271.7L812.6 268.6L807.2 265.9L801.3 263.6L795.1 261.5L788.5 259.9L781.6 258.6L774.4 257.6L767.0 257.1L759.5 256.9L751.8 257.0L744.1 257.6L736.3 258.4L728.5 259.7L720.9 261.3L713.3 263.2L705.9 265.4L698.7 268.0L691.7 270.8L685.0 273.9L678.7 277.3L672.7 281.0L667.2 284.9L662.1 288.9L657.6 293.2L653.5 297.6L650.1 302.1L647.2 306.7L645.0 311.5L643.5 316.2L642.6 320.9L642.5 325.6L643.0 330.3L644.4 334.8L646.4 339.2L649.2 343.4L652.7 347.4L657.0 351.1L661.9 354.5L667.5 357.6Z" fill="#002b93"/><path d="M675.2 359.2L681.9 361.5L689.0 363.3L696.6 364.8L704.6 365.8L712.9 366.3L721.5 366.4L730.2 366.0L739.1 365.1L747.9 363.7L756.6 361.9L765.2 359.7L773.5 357.0L781.5 354.0L789.1 350.6L796.3 346.8L802.9 342.8L809.0 338.5L814.4 334.0L819.1 329.4L823.2 324.6L826.5 319.8L829.1 314.9L831.0 310.1L832.1 305.2L832.4 300.5L832.1 295.9L831.0 291.4L829.2 287.2L826.7 283.1L823.7 279.3L820.0 275.7L815.7 272.5L810.9 269.5L805.7 266.8L800.0 264.5L793.9 262.5L787.4 260.9L780.7 259.6L773.7 258.7L766.4 258.1L759.0 257.9L751.5 258.1L743.9 258.6L736.3 259.5L728.7 260.7L721.2 262.2L713.8 264.1L706.5 266.3L699.5 268.8L692.6 271.6L686.1 274.7L679.9 278.0L674.1 281.6L668.7 285.3L663.7 289.3L659.3 293.5L655.3 297.8L651.9 302.3L649.2 306.8L647.0 311.4L645.5 316.0L644.7 320.7L644.6 325.3L645.1 329.8L646.4 334.2L648.5 338.5L651.2 342.6L654.7 346.5L658.8 350.1L663.7 353.5L669.1 356.5Z" fill="#002893"/><path d="M676.7 358.0L683.2 360.2L690.2 362.0L697.6 363.4L705.4 364.4L713.5 364.9L721.9 365.0L730.4 364.6L739.0 363.7L747.6 362.4L756.1 360.6L764.5 358.4L772.6 355.8L780.4 352.9L787.9 349.5L794.8 345.9L801.3 342.0L807.2 337.8L812.5 333.4L817.2 328.9L821.2 324.2L824.4 319.5L827.0 314.8L828.8 310.0L829.9 305.3L830.3 300.7L829.9 296.2L828.9 291.8L827.1 287.6L824.7 283.7L821.7 279.9L818.1 276.5L814.0 273.3L809.3 270.3L804.2 267.8L798.6 265.5L792.7 263.5L786.4 261.9L779.8 260.7L772.9 259.8L765.8 259.2L758.6 259.0L751.2 259.2L743.8 259.7L736.4 260.5L728.9 261.7L721.6 263.2L714.3 265.1L707.2 267.2L700.3 269.6L693.6 272.4L687.2 275.4L681.2 278.6L675.5 282.1L670.2 285.8L665.3 289.7L661.0 293.8L657.1 298.0L653.8 302.4L651.1 306.8L649.0 311.3L647.6 315.8L646.8 320.4L646.7 324.9L647.3 329.3L648.5 333.6L650.5 337.8L653.2 341.8L656.6 345.6L660.7 349.1L665.4 352.4L670.8 355.4Z" fill="#002593"/><path d="M678.2 356.7L684.5 358.9L691.4 360.7L698.6 362.1L706.2 363.0L714.1 363.5L722.3 363.6L730.6 363.2L739.0 362.3L747.4 361.0L755.7 359.3L763.8 357.2L771.8 354.6L779.4 351.7L786.6 348.5L793.4 344.9L799.7 341.1L805.5 337.1L810.7 332.8L815.2 328.4L819.1 323.9L822.3 319.3L824.8 314.6L826.6 310.0L827.7 305.4L828.1 300.9L827.7 296.5L826.7 292.2L825.0 288.1L822.7 284.2L819.8 280.6L816.3 277.2L812.3 274.1L807.7 271.2L802.7 268.7L797.3 266.4L791.4 264.5L785.3 263.0L778.8 261.7L772.1 260.8L765.2 260.3L758.1 260.1L750.9 260.2L743.7 260.7L736.4 261.6L729.1 262.7L721.9 264.2L714.8 266.0L707.8 268.1L701.1 270.5L694.6 273.2L688.3 276.1L682.4 279.3L676.8 282.7L671.7 286.3L666.9 290.2L662.7 294.1L658.9 298.3L655.7 302.5L653.1 306.9L651.0 311.3L649.6 315.7L648.9 320.1L648.8 324.5L649.4 328.8L650.6 333.0L652.6 337.1L655.2 341.0L658.6 344.7L662.5 348.2L667.2 351.3L672.4 354.2Z" fill="#002293"/><path d="M679.7 355.5L685.9 357.6L692.5 359.4L699.6 360.7L707.0 361.6L714.7 362.1L722.7 362.2L730.8 361.8L738.9 360.9L747.1 359.7L755.2 358.0L763.2 355.9L770.9 353.5L778.3 350.6L785.4 347.5L792.0 344.0L798.2 340.3L803.8 336.3L808.9 332.2L813.3 327.9L817.1 323.5L820.2 319.0L822.7 314.5L824.4 309.9L825.5 305.5L825.9 301.0L825.6 296.7L824.6 292.6L823.0 288.6L820.7 284.8L817.9 281.2L814.5 277.9L810.5 274.8L806.1 272.1L801.2 269.6L795.9 267.4L790.2 265.5L784.2 264.0L777.9 262.8L771.3 261.9L764.6 261.4L757.7 261.2L750.6 261.3L743.5 261.8L736.4 262.6L729.3 263.7L722.3 265.2L715.3 266.9L708.5 269.0L701.9 271.3L695.5 274.0L689.4 276.8L683.6 279.9L678.2 283.3L673.2 286.8L668.5 290.6L664.4 294.5L660.7 298.5L657.6 302.7L655.0 306.9L653.1 311.2L651.7 315.5L651.0 319.8L650.9 324.1L651.5 328.3L652.7 332.4L654.6 336.4L657.2 340.2L660.5 343.8L664.4 347.2L668.9 350.3L674.0 353.1Z" fill="#001f93"/><path d="M681.2 354.3L687.2 356.4L693.7 358.1L700.6 359.3L707.8 360.2L715.3 360.7L723.1 360.8L731.0 360.4L738.9 359.6L746.9 358.3L754.8 356.7L762.5 354.7L770.0 352.3L777.2 349.5L784.1 346.5L790.6 343.1L796.6 339.5L802.1 335.6L807.0 331.6L811.4 327.4L815.1 323.1L818.1 318.7L820.5 314.3L822.3 309.9L823.3 305.5L823.7 301.2L823.4 297.0L822.5 293.0L820.9 289.1L818.7 285.4L816.0 281.9L812.6 278.6L808.8 275.6L804.5 272.9L799.7 270.5L794.5 268.3L789.0 266.5L783.1 265.0L777.0 263.8L770.6 263.0L764.0 262.4L757.2 262.3L750.3 262.4L743.4 262.9L736.4 263.6L729.5 264.7L722.6 266.2L715.8 267.9L709.2 269.9L702.7 272.2L696.5 274.7L690.5 277.6L684.9 280.6L679.6 283.9L674.7 287.3L670.1 291.0L666.1 294.8L662.5 298.7L659.5 302.8L657.0 306.9L655.1 311.1L653.8 315.3L653.1 319.5L653.0 323.7L653.6 327.8L654.8 331.8L656.7 335.7L659.2 339.4L662.4 342.9L666.2 346.2L670.6 349.2L675.6 351.9Z" fill="#001c93"/><path d="M682.6 353.1L688.5 355.1L694.8 356.7L701.6 358.0L708.6 358.9L715.9 359.3L723.5 359.4L731.1 359.0L738.9 358.2L746.6 357.0L754.3 355.4L761.8 353.4L769.1 351.1L776.2 348.4L782.9 345.4L789.2 342.2L795.0 338.7L800.4 334.9L805.2 331.0L809.4 326.9L813.1 322.7L816.1 318.5L818.4 314.2L820.1 309.9L821.1 305.6L821.5 301.4L821.3 297.3L820.3 293.4L818.8 289.6L816.7 285.9L814.0 282.5L810.8 279.4L807.1 276.4L802.9 273.8L798.2 271.4L793.2 269.3L787.8 267.5L782.0 266.0L776.0 264.9L769.8 264.0L763.3 263.5L756.7 263.3L750.0 263.5L743.3 263.9L736.5 264.7L729.7 265.8L723.0 267.2L716.3 268.8L709.8 270.8L703.5 273.0L697.5 275.5L691.6 278.3L686.1 281.3L681.0 284.5L676.2 287.8L671.8 291.4L667.8 295.1L664.4 299.0L661.4 302.9L659.0 307.0L657.1 311.0L655.8 315.2L655.2 319.3L655.1 323.3L655.7 327.3L656.9 331.2L658.8 335.0L661.2 338.6L664.4 342.0L668.1 345.2L672.4 348.2L677.2 350.8Z" fill="#001a93"/><path d="M684.1 351.9L689.8 353.9L696.0 355.4L702.5 356.7L709.4 357.5L716.5 357.9L723.8 358.0L731.3 357.6L738.8 356.8L746.4 355.7L753.8 354.1L761.2 352.2L768.3 349.9L775.1 347.3L781.7 344.4L787.8 341.3L793.5 337.8L798.7 334.2L803.4 330.4L807.5 326.4L811.1 322.3L814.0 318.2L816.3 314.0L817.9 309.8L819.0 305.7L819.3 301.6L819.1 297.6L818.2 293.7L816.8 290.0L814.7 286.5L812.1 283.2L809.0 280.1L805.3 277.2L801.2 274.6L796.7 272.3L791.8 270.3L786.5 268.5L780.9 267.1L775.1 265.9L769.0 265.1L762.7 264.6L756.3 264.4L749.7 264.6L743.1 265.0L736.5 265.7L729.9 266.8L723.3 268.1L716.8 269.8L710.5 271.7L704.4 273.9L698.4 276.3L692.8 279.0L687.4 281.9L682.3 285.0L677.7 288.3L673.4 291.8L669.5 295.5L666.2 299.2L663.3 303.1L660.9 307.0L659.1 311.0L657.9 315.0L657.3 319.0L657.2 323.0L657.8 326.9L659.0 330.7L660.8 334.3L663.2 337.8L666.3 341.2L669.9 344.3L674.1 347.1L678.9 349.7Z" fill="#001793"/><path d="M685.6 350.7L691.2 352.6L697.2 354.1L703.5 355.3L710.2 356.1L717.1 356.5L724.2 356.6L731.5 356.2L738.8 355.5L746.1 354.3L753.4 352.8L760.5 351.0L767.4 348.8L774.1 346.3L780.4 343.4L786.4 340.3L791.9 337.0L797.0 333.5L801.6 329.8L805.6 325.9L809.0 321.9L811.9 317.9L814.1 313.9L815.8 309.8L816.8 305.7L817.2 301.8L816.9 297.9L816.1 294.1L814.7 290.5L812.7 287.1L810.2 283.8L807.1 280.8L803.6 278.0L799.6 275.5L795.2 273.2L790.4 271.2L785.3 269.5L779.9 268.1L774.2 267.0L768.2 266.2L762.1 265.7L755.8 265.5L749.4 265.6L743.0 266.1L736.5 266.8L730.1 267.8L723.7 269.1L717.4 270.7L711.2 272.6L705.2 274.7L699.4 277.1L693.9 279.7L688.6 282.6L683.7 285.6L679.2 288.9L675.0 292.2L671.3 295.8L668.0 299.4L665.2 303.2L662.9 307.0L661.2 310.9L660.0 314.8L659.4 318.7L659.3 322.6L659.9 326.4L661.1 330.1L662.9 333.6L665.2 337.0L668.2 340.3L671.7 343.3L675.8 346.0L680.5 348.5Z" fill="#001593"/><path d="M687.1 349.5L692.5 351.3L698.3 352.8L704.5 354.0L711.0 354.7L717.7 355.2L724.6 355.2L731.7 354.8L738.8 354.1L745.9 353.0L752.9 351.6L759.8 349.8L766.6 347.6L773.0 345.2L779.2 342.4L785.0 339.4L790.4 336.2L795.3 332.8L799.8 329.2L803.7 325.4L807.0 321.6L809.8 317.7L812.0 313.7L813.6 309.7L814.6 305.8L815.0 302.0L814.8 298.2L814.0 294.5L812.6 291.0L810.7 287.7L808.2 284.5L805.3 281.6L801.9 278.8L798.0 276.4L793.7 274.1L789.1 272.2L784.1 270.5L778.8 269.2L773.2 268.1L767.4 267.3L761.5 266.8L755.3 266.6L749.1 266.7L742.9 267.2L736.5 267.9L730.3 268.9L724.0 270.1L717.9 271.7L711.9 273.5L706.0 275.6L700.4 277.9L695.0 280.5L689.9 283.2L685.1 286.2L680.7 289.4L676.6 292.7L673.0 296.1L669.8 299.7L667.1 303.3L664.9 307.1L663.2 310.8L662.1 314.6L661.5 318.4L661.5 322.2L662.0 325.9L663.2 329.5L664.9 332.9L667.2 336.3L670.1 339.4L673.6 342.3L677.6 345.0L682.1 347.4Z" fill="#001393"/><path d="M688.5 348.3L693.8 350.1L699.4 351.5L705.4 352.6L711.7 353.4L718.3 353.8L725.0 353.8L731.8 353.5L738.7 352.8L745.6 351.7L752.5 350.3L759.2 348.5L765.7 346.5L772.0 344.1L778.0 341.4L783.6 338.5L788.8 335.4L793.6 332.1L798.0 328.6L801.8 324.9L805.0 321.2L807.8 317.4L809.9 313.5L811.5 309.7L812.4 305.9L812.8 302.1L812.6 298.5L811.8 294.9L810.5 291.5L808.7 288.2L806.3 285.2L803.4 282.3L800.1 279.6L796.4 277.2L792.2 275.1L787.7 273.2L782.8 271.5L777.7 270.2L772.3 269.1L766.6 268.4L760.8 267.9L754.9 267.7L748.8 267.8L742.7 268.2L736.6 268.9L730.4 269.9L724.4 271.1L718.4 272.7L712.5 274.4L706.8 276.5L701.4 278.7L696.1 281.2L691.2 283.9L686.5 286.8L682.2 289.9L678.3 293.1L674.7 296.4L671.6 299.9L669.0 303.5L666.9 307.1L665.2 310.8L664.1 314.5L663.6 318.2L663.6 321.8L664.1 325.4L665.3 328.9L667.0 332.2L669.2 335.5L672.0 338.5L675.4 341.3L679.3 343.9L683.7 346.3Z" fill="#001193"/><path d="M690.0 347.1L695.1 348.9L700.6 350.2L706.4 351.3L712.5 352.0L718.9 352.4L725.4 352.4L732.0 352.1L738.7 351.4L745.4 350.4L752.0 349.0L758.5 347.3L764.9 345.3L771.0 343.0L776.8 340.4L782.2 337.6L787.3 334.6L792.0 331.3L796.2 328.0L799.9 324.4L803.0 320.8L805.7 317.1L807.8 313.4L809.3 309.7L810.2 306.0L810.6 302.3L810.5 298.7L809.7 295.3L808.4 292.0L806.7 288.8L804.4 285.8L801.6 283.0L798.4 280.4L794.7 278.1L790.7 276.0L786.3 274.1L781.6 272.6L776.6 271.2L771.3 270.2L765.8 269.5L760.2 269.0L754.4 268.8L748.5 268.9L742.6 269.3L736.6 270.0L730.6 270.9L724.7 272.2L718.9 273.6L713.2 275.4L707.7 277.3L702.3 279.5L697.3 282.0L692.4 284.6L687.9 287.4L683.7 290.4L679.9 293.5L676.5 296.8L673.5 300.1L670.9 303.6L668.8 307.1L667.3 310.7L666.2 314.3L665.7 317.9L665.7 321.4L666.2 324.9L667.3 328.3L669.0 331.6L671.2 334.7L674.0 337.6L677.2 340.4L681.0 342.9L685.3 345.2Z" fill="#001093"/><path d="M691.4 346.0L696.4 347.6L701.7 349.0L707.4 350.0L713.3 350.7L719.4 351.0L725.8 351.1L732.2 350.7L738.7 350.1L745.1 349.1L751.6 347.8L757.9 346.1L764.0 344.2L769.9 341.9L775.5 339.4L780.8 336.7L785.8 333.8L790.3 330.6L794.4 327.4L798.0 323.9L801.1 320.4L803.6 316.9L805.7 313.2L807.1 309.6L808.1 306.0L808.5 302.5L808.3 299.0L807.6 295.7L806.4 292.4L804.6 289.4L802.4 286.5L799.7 283.8L796.6 281.2L793.1 279.0L789.2 276.9L784.9 275.1L780.3 273.6L775.5 272.3L770.4 271.3L765.1 270.6L759.6 270.1L753.9 269.9L748.2 270.0L742.4 270.4L736.6 271.1L730.8 272.0L725.1 273.2L719.4 274.6L713.9 276.3L708.5 278.2L703.3 280.3L698.4 282.7L693.7 285.2L689.3 288.0L685.2 290.9L681.5 293.9L678.2 297.1L675.3 300.4L672.8 303.7L670.8 307.2L669.3 310.6L668.3 314.1L667.8 317.6L667.8 321.0L668.3 324.4L669.4 327.7L671.0 330.9L673.2 333.9L675.9 336.7L679.1 339.4L682.7 341.8L686.9 344.0Z" fill="#000e93"/><path d="M692.9 344.8L697.7 346.4L702.9 347.7L708.3 348.7L714.1 349.3L720.0 349.7L726.1 349.7L732.4 349.4L738.6 348.7L744.9 347.8L751.1 346.5L757.2 344.9L763.2 343.0L768.9 340.9L774.3 338.4L779.5 335.8L784.2 333.0L788.6 329.9L792.6 326.8L796.1 323.5L799.1 320.1L801.6 316.6L803.5 313.1L805.0 309.6L805.9 306.1L806.3 302.7L806.1 299.3L805.5 296.1L804.3 292.9L802.6 289.9L800.5 287.1L797.9 284.5L794.9 282.1L791.4 279.8L787.7 277.8L783.5 276.1L779.1 274.6L774.4 273.3L769.4 272.4L764.3 271.7L758.9 271.2L753.5 271.0L747.9 271.1L742.3 271.5L736.7 272.1L731.0 273.0L725.4 274.2L719.9 275.6L714.6 277.2L709.4 279.1L704.3 281.2L699.5 283.4L695.0 285.9L690.7 288.6L686.8 291.4L683.2 294.3L680.0 297.4L677.1 300.6L674.7 303.9L672.8 307.2L671.3 310.6L670.4 314.0L669.9 317.3L669.9 320.7L670.4 323.9L671.5 327.1L673.1 330.2L675.2 333.1L677.8 335.9L680.9 338.4L684.4 340.8L688.5 342.9Z" fill="#000d93"/><path d="M694.3 343.6L699.0 345.1L704.0 346.4L709.3 347.3L714.8 348.0L720.6 348.3L726.5 348.3L732.5 348.0L738.6 347.4L744.7 346.5L750.7 345.2L756.6 343.7L762.3 341.9L767.9 339.8L773.1 337.5L778.1 334.9L782.7 332.2L787.0 329.2L790.8 326.2L794.2 323.0L797.1 319.7L799.5 316.3L801.4 312.9L802.8 309.6L803.7 306.2L804.1 302.9L804.0 299.6L803.3 296.4L802.2 293.4L800.6 290.5L798.5 287.8L796.0 285.2L793.1 282.9L789.8 280.7L786.1 278.8L782.1 277.1L777.8 275.6L773.3 274.4L768.5 273.4L763.5 272.7L758.3 272.3L753.0 272.1L747.6 272.2L742.2 272.6L736.7 273.2L731.2 274.1L725.8 275.2L720.5 276.5L715.3 278.1L710.2 279.9L705.3 282.0L700.7 284.2L696.2 286.6L692.1 289.2L688.3 291.9L684.8 294.8L681.7 297.8L679.0 300.9L676.7 304.0L674.8 307.2L673.4 310.5L672.4 313.8L672.0 317.0L672.0 320.3L672.5 323.4L673.6 326.5L675.1 329.5L677.2 332.3L679.7 335.0L682.7 337.5L686.2 339.8L690.0 341.8Z" fill="#000c93"/><path d="M695.8 342.4L700.3 343.9L705.1 345.1L710.2 346.0L715.6 346.7L721.2 347.0L726.9 347.0L732.7 346.7L738.6 346.1L744.4 345.2L750.2 344.0L755.9 342.5L761.5 340.7L766.8 338.7L771.9 336.5L776.7 334.0L781.2 331.4L785.3 328.5L789.0 325.6L792.3 322.5L795.1 319.3L797.5 316.1L799.3 312.8L800.7 309.5L801.6 306.3L802.0 303.0L801.8 299.9L801.2 296.8L800.1 293.9L798.6 291.1L796.6 288.4L794.2 286.0L791.4 283.7L788.2 281.6L784.6 279.7L780.7 278.0L776.6 276.6L772.2 275.5L767.5 274.5L762.7 273.9L757.7 273.4L752.5 273.3L747.3 273.4L742.0 273.7L736.7 274.3L731.4 275.1L726.2 276.2L721.0 277.5L715.9 279.1L711.0 280.8L706.3 282.8L701.8 284.9L697.5 287.3L693.5 289.8L689.8 292.4L686.5 295.2L683.4 298.1L680.8 301.1L678.6 304.2L676.8 307.3L675.4 310.4L674.5 313.6L674.1 316.8L674.1 319.9L674.7 323.0L675.7 325.9L677.2 328.8L679.1 331.5L681.6 334.1L684.5 336.5L687.9 338.7L691.6 340.7Z" fill="#000b93"/><path d="M697.2 341.2L701.6 342.7L706.3 343.8L711.2 344.7L716.4 345.3L721.7 345.6L727.3 345.6L732.9 345.3L738.5 344.8L744.2 343.9L749.8 342.7L755.3 341.3L760.6 339.6L765.8 337.7L770.7 335.5L775.4 333.1L779.7 330.6L783.7 327.8L787.2 325.0L790.4 322.0L793.1 318.9L795.4 315.8L797.2 312.6L798.6 309.5L799.4 306.3L799.8 303.2L799.7 300.2L799.1 297.2L798.1 294.4L796.6 291.7L794.7 289.1L792.3 286.7L789.6 284.5L786.5 282.4L783.1 280.6L779.3 279.0L775.3 277.7L771.0 276.5L766.5 275.6L761.9 275.0L757.0 274.5L752.0 274.4L747.0 274.5L741.9 274.8L736.7 275.4L731.6 276.2L726.5 277.2L721.5 278.5L716.6 280.0L711.9 281.7L707.3 283.6L702.9 285.7L698.8 287.9L694.9 290.4L691.4 292.9L688.1 295.6L685.2 298.4L682.7 301.3L680.5 304.3L678.8 307.3L677.5 310.4L676.6 313.4L676.2 316.5L676.2 319.5L676.8 322.5L677.7 325.3L679.2 328.1L681.1 330.7L683.5 333.2L686.3 335.6L689.6 337.7L693.2 339.6Z" fill="#000a93"/><path d="M698.7 340.1L702.9 341.4L707.4 342.6L712.1 343.4L717.1 344.0L722.3 344.3L727.6 344.3L733.0 344.0L738.5 343.4L743.9 342.6L749.3 341.5L754.7 340.1L759.8 338.5L764.8 336.6L769.5 334.5L774.0 332.2L778.2 329.8L782.0 327.1L785.5 324.4L788.5 321.5L791.2 318.6L793.4 315.5L795.1 312.5L796.4 309.4L797.3 306.4L797.6 303.4L797.5 300.5L797.0 297.6L796.0 294.9L794.6 292.2L792.7 289.7L790.5 287.4L787.8 285.3L784.9 283.3L781.6 281.6L777.9 280.0L774.1 278.7L769.9 277.6L765.6 276.7L761.1 276.1L756.4 275.7L751.6 275.5L746.7 275.6L741.7 275.9L736.8 276.5L731.8 277.2L726.9 278.3L722.1 279.5L717.3 280.9L712.7 282.6L708.3 284.4L704.1 286.4L700.1 288.6L696.4 291.0L692.9 293.4L689.8 296.0L687.0 298.8L684.5 301.6L682.4 304.4L680.8 307.4L679.5 310.3L678.7 313.3L678.3 316.2L678.4 319.1L678.9 322.0L679.8 324.8L681.2 327.4L683.1 330.0L685.4 332.4L688.1 334.6L691.3 336.6L694.8 338.5Z" fill="#000993"/><path d="M700.1 338.9L704.2 340.2L708.5 341.3L713.1 342.1L717.9 342.7L722.9 342.9L728.0 342.9L733.2 342.7L738.5 342.1L743.7 341.3L748.9 340.2L754.0 338.9L759.0 337.3L763.8 335.6L768.3 333.5L772.7 331.3L776.7 329.0L780.4 326.4L783.7 323.8L786.6 321.0L789.2 318.2L791.3 315.3L793.0 312.3L794.3 309.4L795.1 306.5L795.5 303.6L795.4 300.7L794.9 298.0L793.9 295.3L792.5 292.8L790.8 290.4L788.6 288.2L786.1 286.1L783.2 284.2L780.0 282.5L776.5 281.0L772.8 279.7L768.8 278.6L764.6 277.8L760.2 277.2L755.7 276.8L751.1 276.6L746.4 276.7L741.6 277.0L736.8 277.5L732.0 278.3L727.3 279.3L722.6 280.5L718.0 281.9L713.6 283.5L709.3 285.2L705.2 287.2L701.4 289.3L697.8 291.6L694.4 294.0L691.4 296.5L688.7 299.1L686.4 301.8L684.4 304.6L682.8 307.4L681.6 310.2L680.8 313.1L680.4 315.9L680.5 318.7L681.0 321.5L681.9 324.2L683.3 326.7L685.1 329.2L687.3 331.5L689.9 333.6L693.0 335.6L696.4 337.4Z" fill="#000893"/><path d="M701.5 337.7L705.4 339.0L709.6 340.0L714.0 340.8L718.7 341.3L723.5 341.6L728.4 341.6L733.4 341.4L738.4 340.8L743.5 340.0L748.5 339.0L753.4 337.7L758.2 336.2L762.8 334.5L767.2 332.6L771.3 330.5L775.2 328.2L778.7 325.7L781.9 323.2L784.8 320.5L787.2 317.8L789.3 315.0L790.9 312.2L792.1 309.4L792.9 306.5L793.3 303.8L793.2 301.0L792.7 298.4L791.8 295.8L790.5 293.4L788.8 291.1L786.7 288.9L784.3 286.9L781.6 285.1L778.5 283.4L775.1 282.0L771.5 280.7L767.7 279.7L763.7 278.9L759.4 278.3L755.1 277.9L750.6 277.8L746.1 277.8L741.5 278.1L736.8 278.6L732.2 279.4L727.6 280.3L723.1 281.5L718.7 282.8L714.4 284.3L710.3 286.1L706.4 287.9L702.7 290.0L699.2 292.2L696.0 294.5L693.1 296.9L690.5 299.4L688.2 302.0L686.3 304.7L684.8 307.4L683.6 310.2L682.9 312.9L682.5 315.7L682.6 318.4L683.1 321.0L684.0 323.6L685.3 326.0L687.1 328.4L689.2 330.6L691.7 332.7L694.7 334.6L697.9 336.3Z" fill="#000793"/><path d="M703.0 336.6L706.7 337.8L710.7 338.8L715.0 339.5L719.4 340.0L724.0 340.3L728.7 340.3L733.5 340.0L738.4 339.5L743.2 338.8L748.0 337.8L752.7 336.6L757.3 335.1L761.8 333.5L766.0 331.6L770.0 329.6L773.7 327.4L777.1 325.1L780.2 322.6L782.9 320.1L785.3 317.4L787.3 314.8L788.8 312.0L790.0 309.3L790.8 306.6L791.1 303.9L791.1 301.3L790.6 298.8L789.7 296.3L788.5 293.9L786.9 291.7L784.9 289.6L782.5 287.7L779.9 286.0L777.0 284.4L773.7 283.0L770.3 281.8L766.6 280.8L762.7 280.0L758.6 279.4L754.4 279.0L750.1 278.9L745.7 279.0L741.3 279.2L736.9 279.7L732.4 280.4L728.0 281.4L723.7 282.5L719.4 283.8L715.3 285.2L711.3 286.9L707.5 288.7L704.0 290.7L700.6 292.8L697.5 295.0L694.7 297.3L692.2 299.8L690.1 302.3L688.2 304.8L686.8 307.5L685.7 310.1L684.9 312.7L684.6 315.4L684.7 318.0L685.2 320.5L686.1 323.0L687.3 325.4L689.0 327.6L691.1 329.7L693.5 331.7L696.3 333.5L699.5 335.2Z" fill="#000793"/><path d="M704.4 335.4L708.0 336.6L711.8 337.5L715.9 338.2L720.2 338.7L724.6 339.0L729.1 339.0L733.7 338.7L738.4 338.2L743.0 337.5L747.6 336.6L752.1 335.4L756.5 334.0L760.7 332.4L764.8 330.6L768.6 328.7L772.2 326.6L775.4 324.4L778.4 322.0L781.0 319.6L783.3 317.1L785.2 314.5L786.8 311.9L787.9 309.3L788.6 306.7L789.0 304.1L788.9 301.6L788.5 299.1L787.7 296.8L786.5 294.5L784.9 292.4L783.0 290.4L780.8 288.5L778.2 286.8L775.4 285.3L772.3 284.0L769.0 282.8L765.4 281.8L761.7 281.1L757.8 280.5L753.8 280.2L749.6 280.0L745.4 280.1L741.2 280.4L736.9 280.8L732.6 281.5L728.4 282.4L724.2 283.5L720.1 284.7L716.2 286.1L712.3 287.7L708.7 289.5L705.3 291.3L702.1 293.4L699.1 295.5L696.4 297.8L694.0 300.1L691.9 302.5L690.2 305.0L688.8 307.5L687.7 310.0L687.0 312.6L686.7 315.1L686.8 317.6L687.3 320.0L688.1 322.4L689.4 324.7L691.0 326.8L693.0 328.9L695.3 330.8L698.0 332.5L701.1 334.1Z" fill="#000693"/><path d="M705.8 334.3L709.3 335.4L712.9 336.3L716.8 336.9L720.9 337.4L725.1 337.6L729.5 337.6L733.9 337.4L738.3 336.9L742.8 336.2L747.2 335.3L751.5 334.2L755.7 332.9L759.7 331.4L763.6 329.7L767.3 327.8L770.7 325.8L773.8 323.7L776.7 321.4L779.2 319.1L781.4 316.7L783.2 314.2L784.7 311.7L785.8 309.2L786.5 306.8L786.8 304.3L786.8 301.9L786.4 299.5L785.6 297.3L784.4 295.1L783.0 293.0L781.1 291.1L779.0 289.3L776.6 287.7L773.9 286.2L770.9 285.0L767.7 283.8L764.3 282.9L760.7 282.2L757.0 281.6L753.1 281.3L749.2 281.2L745.1 281.2L741.0 281.5L736.9 281.9L732.8 282.6L728.7 283.4L724.7 284.5L720.8 285.7L717.0 287.0L713.4 288.5L709.9 290.2L706.6 292.0L703.5 294.0L700.7 296.0L698.1 298.2L695.8 300.4L693.8 302.8L692.1 305.1L690.8 307.5L689.8 310.0L689.1 312.4L688.8 314.8L688.9 317.2L689.4 319.5L690.2 321.8L691.4 324.0L693.0 326.1L694.9 328.0L697.1 329.8L699.7 331.5L702.6 333.0Z" fill="#000693"/><path d="M707.2 333.1L710.5 334.2L714.1 335.0L717.8 335.7L721.7 336.1L725.7 336.3L729.8 336.3L734.1 336.1L738.3 335.6L742.5 335.0L746.7 334.1L750.9 333.0L754.9 331.8L758.7 330.3L762.4 328.7L765.9 326.9L769.2 325.0L772.2 323.0L774.9 320.9L777.3 318.6L779.4 316.3L781.2 314.0L782.6 311.6L783.6 309.2L784.3 306.8L784.7 304.5L784.6 302.2L784.2 299.9L783.5 297.7L782.4 295.7L781.0 293.7L779.3 291.9L777.2 290.2L774.9 288.6L772.3 287.2L769.5 286.0L766.4 284.9L763.2 284.0L759.8 283.3L756.2 282.8L752.5 282.4L748.7 282.3L744.8 282.4L740.9 282.6L736.9 283.1L733.0 283.7L729.1 284.5L725.3 285.5L721.5 286.6L717.9 287.9L714.4 289.4L711.0 291.0L707.9 292.7L704.9 294.6L702.2 296.6L699.8 298.6L697.6 300.8L695.7 303.0L694.1 305.3L692.8 307.6L691.8 309.9L691.2 312.2L690.9 314.5L691.0 316.8L691.5 319.1L692.3 321.2L693.4 323.3L694.9 325.3L696.8 327.1L698.9 328.9L701.4 330.5L704.2 331.9Z" fill="#000593"/><path d="M708.6 332.0L711.8 333.0L715.2 333.8L718.7 334.4L722.4 334.8L726.3 335.0L730.2 335.0L734.2 334.8L738.3 334.4L742.3 333.7L746.3 332.9L750.2 331.9L754.1 330.7L757.8 329.3L761.3 327.8L764.6 326.1L767.7 324.3L770.6 322.3L773.2 320.3L775.5 318.1L777.5 316.0L779.2 313.7L780.5 311.4L781.5 309.2L782.2 306.9L782.5 304.6L782.5 302.4L782.1 300.3L781.4 298.2L780.4 296.2L779.0 294.4L777.4 292.6L775.5 291.0L773.2 289.5L770.8 288.1L768.1 286.9L765.2 285.9L762.1 285.1L758.8 284.4L755.4 283.9L751.8 283.6L748.2 283.5L744.5 283.5L740.7 283.7L737.0 284.2L733.2 284.8L729.5 285.5L725.8 286.5L722.2 287.6L718.7 288.8L715.4 290.2L712.2 291.8L709.2 293.4L706.4 295.2L703.8 297.1L701.4 299.1L699.4 301.1L697.5 303.2L696.0 305.4L694.8 307.6L693.9 309.8L693.3 312.1L693.1 314.3L693.1 316.4L693.6 318.6L694.3 320.6L695.4 322.6L696.9 324.5L698.6 326.3L700.7 327.9L703.1 329.4L705.7 330.8Z" fill="#000593"/><path d="M710.0 330.8L713.0 331.8L716.3 332.5L719.6 333.1L723.2 333.5L726.8 333.7L730.6 333.7L734.4 333.5L738.2 333.1L742.1 332.5L745.9 331.7L749.6 330.7L753.2 329.6L756.8 328.3L760.1 326.8L763.3 325.2L766.2 323.5L769.0 321.6L771.4 319.7L773.6 317.7L775.5 315.6L777.1 313.5L778.4 311.3L779.4 309.1L780.0 307.0L780.4 304.8L780.3 302.7L780.0 300.7L779.3 298.7L778.4 296.8L777.1 295.0L775.5 293.3L773.7 291.8L771.6 290.4L769.2 289.1L766.7 287.9L763.9 287.0L760.9 286.2L757.8 285.5L754.5 285.0L751.2 284.7L747.7 284.6L744.2 284.7L740.6 284.9L737.0 285.3L733.4 285.8L729.9 286.6L726.4 287.5L722.9 288.5L719.6 289.7L716.4 291.1L713.4 292.5L710.5 294.1L707.8 295.8L705.4 297.6L703.1 299.5L701.1 301.5L699.4 303.5L698.0 305.5L696.8 307.6L695.9 309.8L695.4 311.9L695.2 314.0L695.3 316.1L695.7 318.1L696.4 320.0L697.5 321.9L698.8 323.7L700.5 325.4L702.5 327.0L704.8 328.4L707.3 329.7Z" fill="#000593"/><path d="M711.5 329.7L714.3 330.6L717.3 331.3L720.6 331.8L723.9 332.2L727.4 332.4L730.9 332.4L734.6 332.2L738.2 331.8L741.8 331.2L745.4 330.5L749.0 329.6L752.4 328.5L755.8 327.2L759.0 325.9L762.0 324.3L764.8 322.7L767.4 320.9L769.7 319.1L771.8 317.2L773.6 315.2L775.1 313.2L776.4 311.1L777.3 309.1L777.9 307.0L778.2 305.0L778.2 303.0L777.9 301.1L777.2 299.2L776.3 297.4L775.1 295.7L773.6 294.1L771.9 292.6L769.9 291.3L767.7 290.0L765.2 288.9L762.6 288.0L759.8 287.2L756.8 286.6L753.7 286.2L750.5 285.9L747.2 285.8L743.8 285.8L740.4 286.0L737.0 286.4L733.6 286.9L730.2 287.6L726.9 288.5L723.6 289.5L720.5 290.6L717.5 291.9L714.6 293.3L711.8 294.8L709.3 296.4L706.9 298.1L704.8 299.9L702.9 301.8L701.3 303.7L699.9 305.7L698.8 307.7L698.0 309.7L697.5 311.7L697.3 313.7L697.4 315.7L697.8 317.6L698.5 319.5L699.5 321.3L700.8 323.0L702.4 324.6L704.3 326.0L706.4 327.4L708.8 328.6Z" fill="#000593"/><path d="M712.9 328.5L715.6 329.4L718.4 330.0L721.5 330.6L724.6 330.9L727.9 331.1L731.3 331.1L734.7 330.9L738.2 330.5L741.6 330.0L745.0 329.3L748.4 328.4L751.6 327.4L754.8 326.2L757.8 324.9L760.6 323.5L763.3 321.9L765.8 320.3L768.0 318.5L770.0 316.7L771.7 314.9L773.1 312.9L774.3 311.0L775.2 309.1L775.8 307.1L776.0 305.2L776.0 303.3L775.7 301.5L775.2 299.7L774.3 298.0L773.2 296.4L771.8 294.8L770.1 293.4L768.2 292.1L766.1 291.0L763.8 290.0L761.3 289.1L758.6 288.3L755.8 287.7L752.9 287.3L749.8 287.0L746.7 286.9L743.5 287.0L740.3 287.2L737.1 287.5L733.8 288.0L730.6 288.7L727.4 289.5L724.4 290.5L721.4 291.5L718.5 292.7L715.7 294.1L713.2 295.5L710.7 297.0L708.5 298.7L706.5 300.4L704.7 302.1L703.2 304.0L701.9 305.8L700.8 307.7L700.1 309.6L699.6 311.5L699.4 313.4L699.5 315.3L699.9 317.1L700.5 318.9L701.5 320.6L702.8 322.2L704.3 323.7L706.1 325.1L708.1 326.4L710.4 327.5Z" fill="#000493"/><path d="M714.3 327.4L716.8 328.2L719.5 328.8L722.4 329.3L725.4 329.6L728.5 329.8L731.7 329.8L734.9 329.6L738.1 329.3L741.4 328.8L744.6 328.1L747.8 327.3L750.8 326.3L753.8 325.2L756.6 324.0L759.3 322.6L761.8 321.2L764.2 319.6L766.3 318.0L768.1 316.2L769.7 314.5L771.1 312.7L772.2 310.9L773.1 309.0L773.6 307.2L773.9 305.4L773.9 303.6L773.6 301.8L773.1 300.2L772.3 298.5L771.2 297.0L769.9 295.6L768.3 294.3L766.5 293.0L764.6 291.9L762.4 291.0L760.0 290.1L757.5 289.4L754.8 288.9L752.1 288.5L749.2 288.2L746.2 288.1L743.2 288.1L740.2 288.3L737.1 288.6L734.0 289.1L731.0 289.8L728.0 290.5L725.1 291.4L722.2 292.4L719.5 293.6L716.9 294.8L714.5 296.2L712.2 297.7L710.1 299.2L708.2 300.8L706.5 302.5L705.1 304.2L703.8 306.0L702.9 307.8L702.1 309.6L701.7 311.4L701.5 313.1L701.6 314.9L702.0 316.6L702.6 318.3L703.5 319.9L704.7 321.4L706.1 322.8L707.8 324.1L709.8 325.4L711.9 326.4Z" fill="#000493"/><path d="M715.7 326.2L718.1 327.0L720.6 327.6L723.3 328.0L726.1 328.3L729.0 328.5L732.0 328.5L735.0 328.3L738.1 328.0L741.1 327.5L744.2 326.9L747.1 326.1L750.0 325.2L752.8 324.2L755.5 323.0L758.0 321.8L760.4 320.4L762.6 318.9L764.5 317.4L766.3 315.8L767.8 314.1L769.1 312.4L770.2 310.7L771.0 309.0L771.5 307.3L771.8 305.5L771.8 303.9L771.5 302.2L771.0 300.6L770.2 299.1L769.2 297.7L768.0 296.3L766.5 295.1L764.9 293.9L763.0 292.9L760.9 292.0L758.7 291.2L756.3 290.5L753.8 290.0L751.2 289.6L748.5 289.4L745.7 289.2L742.9 289.3L740.0 289.5L737.1 289.8L734.2 290.2L731.4 290.8L728.5 291.5L725.8 292.4L723.1 293.4L720.6 294.4L718.1 295.6L715.8 296.9L713.7 298.3L711.7 299.7L709.9 301.2L708.3 302.8L706.9 304.4L705.8 306.1L704.9 307.8L704.2 309.5L703.8 311.2L703.6 312.9L703.7 314.5L704.1 316.1L704.7 317.7L705.5 319.2L706.7 320.6L708.0 322.0L709.6 323.2L711.4 324.3L713.4 325.3Z" fill="#000493"/><path d="M717.1 325.1L719.3 325.8L721.7 326.4L724.2 326.8L726.9 327.1L729.6 327.2L732.4 327.2L735.2 327.0L738.1 326.7L740.9 326.3L743.7 325.7L746.5 325.0L749.2 324.1L751.8 323.2L754.3 322.1L756.7 320.9L758.9 319.6L761.0 318.2L762.8 316.8L764.5 315.3L765.9 313.8L767.1 312.2L768.1 310.6L768.8 308.9L769.4 307.3L769.6 305.7L769.6 304.1L769.4 302.6L768.9 301.1L768.2 299.7L767.3 298.3L766.1 297.1L764.7 295.9L763.2 294.8L761.4 293.8L759.5 293.0L757.4 292.2L755.2 291.6L752.8 291.1L750.4 290.7L747.8 290.5L745.2 290.4L742.6 290.4L739.9 290.6L737.1 290.9L734.4 291.3L731.7 291.9L729.1 292.6L726.5 293.4L724.0 294.3L721.6 295.3L719.3 296.4L717.1 297.6L715.1 298.9L713.3 300.3L711.6 301.7L710.1 303.2L708.8 304.7L707.8 306.2L706.9 307.8L706.3 309.4L705.9 311.0L705.7 312.6L705.8 314.1L706.2 315.7L706.7 317.1L707.6 318.5L708.6 319.9L709.9 321.1L711.4 322.3L713.1 323.3L715.0 324.3Z" fill="#000493"/><path d="M718.4 324.0L720.5 324.6L722.8 325.1L725.1 325.5L727.6 325.8L730.1 325.9L732.7 325.9L735.4 325.8L738.0 325.5L740.7 325.1L743.3 324.5L745.9 323.9L748.4 323.1L750.9 322.2L753.2 321.2L755.4 320.0L757.5 318.9L759.4 317.6L761.1 316.2L762.6 314.8L764.0 313.4L765.1 311.9L766.0 310.4L766.7 308.9L767.2 307.4L767.5 305.9L767.5 304.4L767.3 303.0L766.8 301.6L766.2 300.3L765.3 299.0L764.2 297.8L762.9 296.7L761.5 295.7L759.9 294.8L758.1 294.0L756.1 293.3L754.0 292.7L751.8 292.2L749.6 291.9L747.2 291.7L744.7 291.6L742.2 291.6L739.7 291.8L737.2 292.1L734.6 292.5L732.1 293.0L729.6 293.6L727.2 294.3L724.9 295.2L722.6 296.1L720.5 297.2L718.5 298.3L716.6 299.5L714.9 300.8L713.3 302.1L711.9 303.5L710.7 304.9L709.7 306.4L708.9 307.9L708.4 309.3L708.0 310.8L707.9 312.3L708.0 313.8L708.3 315.2L708.8 316.5L709.6 317.8L710.6 319.1L711.7 320.3L713.1 321.3L714.7 322.3L716.5 323.2Z" fill="#000493"/><path d="M719.8 322.8L721.8 323.4L723.9 323.9L726.0 324.3L728.3 324.5L730.7 324.6L733.1 324.6L735.5 324.5L738.0 324.2L740.5 323.9L742.9 323.4L745.3 322.7L747.6 322.0L749.9 321.2L752.1 320.2L754.1 319.2L756.0 318.1L757.8 316.9L759.4 315.7L760.8 314.4L762.1 313.0L763.1 311.7L764.0 310.3L764.6 308.9L765.1 307.5L765.3 306.1L765.3 304.7L765.1 303.4L764.7 302.1L764.1 300.9L763.3 299.7L762.3 298.6L761.2 297.5L759.8 296.6L758.3 295.8L756.6 295.0L754.8 294.4L752.9 293.8L750.8 293.4L748.7 293.1L746.5 292.9L744.2 292.8L741.9 292.8L739.6 292.9L737.2 293.2L734.8 293.6L732.5 294.0L730.2 294.6L728.0 295.3L725.8 296.1L723.7 297.0L721.7 298.0L719.8 299.0L718.1 300.1L716.5 301.3L715.0 302.6L713.7 303.8L712.6 305.2L711.7 306.5L711.0 307.9L710.4 309.3L710.1 310.7L710.0 312.0L710.1 313.4L710.4 314.7L710.9 316.0L711.6 317.2L712.5 318.3L713.6 319.4L714.9 320.4L716.4 321.3L718.0 322.1Z" fill="#000493"/><path d="M721.2 321.7L723.0 322.3L724.9 322.7L726.9 323.0L729.0 323.3L731.2 323.4L733.4 323.4L735.7 323.2L738.0 323.0L740.2 322.6L742.5 322.2L744.7 321.6L746.9 320.9L748.9 320.2L750.9 319.3L752.8 318.4L754.6 317.3L756.2 316.2L757.7 315.1L759.0 313.9L760.2 312.7L761.2 311.4L761.9 310.1L762.5 308.8L763.0 307.5L763.2 306.3L763.2 305.0L763.0 303.8L762.7 302.6L762.1 301.4L761.4 300.3L760.4 299.3L759.4 298.4L758.1 297.5L756.7 296.7L755.2 296.0L753.5 295.4L751.7 294.9L749.8 294.5L747.9 294.2L745.8 294.0L743.7 293.9L741.6 294.0L739.4 294.1L737.2 294.3L735.0 294.7L732.9 295.1L730.8 295.7L728.7 296.3L726.7 297.0L724.7 297.9L722.9 298.8L721.2 299.7L719.5 300.8L718.1 301.9L716.7 303.0L715.5 304.2L714.5 305.4L713.7 306.7L713.0 307.9L712.5 309.2L712.2 310.5L712.1 311.7L712.2 313.0L712.5 314.2L712.9 315.4L713.6 316.5L714.4 317.5L715.5 318.5L716.7 319.5L718.0 320.3L719.6 321.1Z" fill="#000493"/><path d="M722.6 320.6L724.2 321.1L726.0 321.5L727.8 321.8L729.8 322.0L731.8 322.1L733.8 322.1L735.9 322.0L737.9 321.8L740.0 321.4L742.1 321.0L744.1 320.5L746.1 319.9L748.0 319.2L749.8 318.4L751.5 317.5L753.1 316.6L754.6 315.6L756.0 314.5L757.2 313.4L758.3 312.3L759.2 311.1L759.9 310.0L760.5 308.8L760.8 307.6L761.0 306.4L761.1 305.3L760.9 304.1L760.6 303.1L760.1 302.0L759.4 301.0L758.5 300.1L757.6 299.2L756.4 298.4L755.1 297.7L753.7 297.0L752.2 296.5L750.6 296.0L748.8 295.6L747.0 295.4L745.2 295.2L743.2 295.1L741.3 295.1L739.3 295.3L737.3 295.5L735.3 295.8L733.3 296.2L731.3 296.7L729.4 297.3L727.6 298.0L725.8 298.7L724.1 299.5L722.5 300.4L721.0 301.4L719.7 302.4L718.4 303.4L717.4 304.5L716.4 305.7L715.6 306.8L715.0 308.0L714.6 309.1L714.3 310.3L714.2 311.5L714.3 312.6L714.6 313.7L715.0 314.8L715.6 315.8L716.4 316.8L717.3 317.7L718.4 318.5L719.7 319.3L721.1 320.0Z" fill="#000493"/><path d="M724.0 319.5L725.5 319.9L727.1 320.3L728.7 320.6L730.5 320.7L732.3 320.8L734.1 320.8L736.0 320.7L737.9 320.5L739.8 320.2L741.7 319.8L743.5 319.4L745.3 318.8L747.0 318.2L748.7 317.4L750.2 316.7L751.7 315.8L753.1 314.9L754.3 314.0L755.4 313.0L756.4 311.9L757.2 310.9L757.9 309.8L758.4 308.8L758.7 307.7L758.9 306.6L758.9 305.6L758.8 304.5L758.5 303.5L758.0 302.6L757.4 301.7L756.7 300.8L755.8 300.0L754.7 299.3L753.6 298.6L752.3 298.1L750.9 297.6L749.4 297.1L747.8 296.8L746.2 296.5L744.5 296.4L742.7 296.3L740.9 296.3L739.1 296.4L737.3 296.6L735.5 296.9L733.7 297.3L731.9 297.8L730.1 298.3L728.5 298.9L726.8 299.6L725.3 300.3L723.9 301.1L722.5 302.0L721.3 302.9L720.2 303.9L719.2 304.9L718.3 305.9L717.6 306.9L717.1 308.0L716.7 309.1L716.4 310.1L716.3 311.2L716.4 312.2L716.7 313.2L717.1 314.2L717.6 315.1L718.3 316.0L719.2 316.8L720.2 317.6L721.3 318.3L722.6 318.9Z" fill="#000493"/><path d="M725.4 318.3L726.7 318.7L728.1 319.1L729.6 319.3L731.2 319.5L732.8 319.6L734.5 319.6L736.2 319.5L737.9 319.3L739.6 319.0L741.2 318.7L742.9 318.2L744.5 317.7L746.1 317.2L747.5 316.5L749.0 315.8L750.3 315.1L751.5 314.3L752.6 313.4L753.6 312.5L754.5 311.6L755.2 310.6L755.8 309.7L756.3 308.7L756.6 307.7L756.8 306.8L756.8 305.8L756.7 304.9L756.4 304.0L756.0 303.2L755.4 302.3L754.8 301.6L753.9 300.9L753.0 300.2L752.0 299.6L750.8 299.1L749.6 298.6L748.2 298.2L746.8 297.9L745.3 297.7L743.8 297.6L742.2 297.5L740.6 297.5L739.0 297.6L737.3 297.8L735.7 298.1L734.0 298.4L732.4 298.8L730.9 299.3L729.4 299.8L727.9 300.5L726.5 301.1L725.2 301.9L724.0 302.6L722.9 303.5L721.9 304.3L721.0 305.2L720.2 306.1L719.6 307.1L719.1 308.0L718.8 309.0L718.5 310.0L718.5 310.9L718.5 311.8L718.7 312.7L719.1 313.6L719.6 314.5L720.3 315.2L721.0 316.0L721.9 316.7L723.0 317.3L724.1 317.9Z" fill="#000493"/><path d="M726.7 317.2L727.9 317.6L729.2 317.9L730.5 318.1L731.9 318.2L733.4 318.3L734.8 318.3L736.3 318.2L737.8 318.1L739.3 317.8L740.8 317.5L742.3 317.1L743.7 316.7L745.1 316.2L746.4 315.6L747.7 315.0L748.9 314.3L749.9 313.6L750.9 312.8L751.8 312.0L752.6 311.2L753.2 310.4L753.8 309.5L754.2 308.7L754.5 307.8L754.6 307.0L754.6 306.1L754.5 305.3L754.3 304.5L753.9 303.7L753.5 303.0L752.9 302.3L752.1 301.7L751.3 301.1L750.4 300.6L749.4 300.1L748.3 299.7L747.1 299.4L745.8 299.1L744.5 298.9L743.1 298.8L741.7 298.7L740.3 298.7L738.8 298.8L737.3 299.0L735.9 299.2L734.4 299.5L733.0 299.8L731.6 300.3L730.3 300.8L729.0 301.3L727.7 301.9L726.6 302.6L725.5 303.3L724.5 304.0L723.6 304.8L722.8 305.6L722.2 306.4L721.6 307.2L721.2 308.1L720.8 308.9L720.6 309.8L720.6 310.6L720.6 311.4L720.8 312.3L721.2 313.0L721.6 313.8L722.2 314.5L722.9 315.1L723.7 315.7L724.6 316.3L725.6 316.8Z" fill="#000493"/><path d="M728.1 316.1L729.1 316.4L730.3 316.7L731.4 316.9L732.6 317.0L733.9 317.1L735.2 317.0L736.5 317.0L737.8 316.8L739.1 316.6L740.4 316.4L741.7 316.0L743.0 315.6L744.2 315.2L745.3 314.7L746.4 314.2L747.4 313.6L748.4 312.9L749.2 312.3L750.0 311.6L750.7 310.9L751.3 310.1L751.7 309.4L752.1 308.6L752.4 307.9L752.5 307.1L752.5 306.4L752.4 305.7L752.2 305.0L751.9 304.3L751.5 303.7L751.0 303.1L750.3 302.5L749.6 302.0L748.8 301.5L747.9 301.1L746.9 300.8L745.9 300.5L744.8 300.2L743.6 300.1L742.4 299.9L741.2 299.9L739.9 299.9L738.7 300.0L737.4 300.1L736.1 300.3L734.8 300.6L733.6 300.9L732.4 301.3L731.2 301.7L730.0 302.2L729.0 302.7L727.9 303.3L727.0 303.9L726.1 304.5L725.4 305.2L724.7 305.9L724.1 306.6L723.6 307.4L723.2 308.1L722.9 308.9L722.8 309.6L722.7 310.3L722.8 311.1L722.9 311.8L723.2 312.4L723.6 313.1L724.1 313.7L724.7 314.3L725.4 314.8L726.2 315.3L727.1 315.7Z" fill="#000493"/><path d="M729.5 315.0L730.4 315.3L731.3 315.5L732.3 315.6L733.4 315.8L734.4 315.8L735.5 315.8L736.7 315.7L737.8 315.6L738.9 315.4L740.0 315.2L741.1 314.9L742.2 314.6L743.2 314.2L744.2 313.8L745.1 313.3L746.0 312.8L746.8 312.3L747.6 311.7L748.2 311.1L748.8 310.5L749.3 309.9L749.7 309.2L750.0 308.6L750.2 308.0L750.4 307.3L750.4 306.7L750.3 306.1L750.1 305.5L749.9 304.9L749.5 304.4L749.1 303.8L748.5 303.4L747.9 302.9L747.2 302.5L746.4 302.2L745.6 301.9L744.7 301.6L743.8 301.4L742.8 301.2L741.7 301.1L740.7 301.1L739.6 301.1L738.5 301.2L737.4 301.3L736.3 301.5L735.2 301.7L734.1 302.0L733.1 302.3L732.1 302.7L731.1 303.1L730.2 303.5L729.3 304.0L728.5 304.5L727.8 305.1L727.1 305.7L726.5 306.3L726.0 306.9L725.6 307.5L725.2 308.2L725.0 308.8L724.9 309.4L724.8 310.1L724.9 310.7L725.0 311.3L725.3 311.9L725.6 312.4L726.1 312.9L726.6 313.4L727.2 313.9L727.9 314.3L728.6 314.7Z" fill="#000493"/><path d="M730.8 313.9L731.6 314.1L732.4 314.3L733.2 314.4L734.1 314.5L735.0 314.6L735.9 314.5L736.8 314.5L737.7 314.4L738.7 314.2L739.6 314.1L740.5 313.8L741.4 313.5L742.3 313.2L743.1 312.9L743.9 312.5L744.6 312.1L745.3 311.6L745.9 311.2L746.4 310.7L746.9 310.2L747.3 309.6L747.7 309.1L747.9 308.6L748.1 308.0L748.2 307.5L748.2 307.0L748.2 306.5L748.0 306.0L747.8 305.5L747.5 305.0L747.1 304.6L746.7 304.2L746.2 303.8L745.6 303.5L745.0 303.2L744.3 302.9L743.5 302.7L742.7 302.5L741.9 302.4L741.1 302.3L740.2 302.3L739.3 302.3L738.4 302.4L737.4 302.5L736.5 302.6L735.6 302.8L734.7 303.0L733.8 303.3L733.0 303.6L732.2 303.9L731.4 304.3L730.7 304.7L730.0 305.2L729.4 305.6L728.8 306.1L728.3 306.6L727.9 307.1L727.6 307.7L727.3 308.2L727.1 308.7L727.0 309.3L727.0 309.8L727.0 310.3L727.1 310.8L727.3 311.3L727.6 311.7L728.0 312.2L728.4 312.6L728.9 313.0L729.5 313.3L730.1 313.6Z" fill="#000493"/><path d="M732.2 312.8L732.8 313.0L733.4 313.1L734.1 313.2L734.8 313.3L735.5 313.3L736.2 313.3L737.0 313.3L737.7 313.2L738.5 313.1L739.2 312.9L739.9 312.7L740.6 312.5L741.3 312.3L742.0 312.0L742.6 311.7L743.2 311.3L743.7 311.0L744.2 310.6L744.7 310.2L745.1 309.8L745.4 309.4L745.7 309.0L745.9 308.5L746.0 308.1L746.1 307.7L746.1 307.3L746.1 306.8L746.0 306.4L745.8 306.1L745.5 305.7L745.2 305.3L744.9 305.0L744.5 304.7L744.0 304.5L743.5 304.2L742.9 304.0L742.3 303.8L741.7 303.7L741.1 303.6L740.4 303.5L739.7 303.5L738.9 303.5L738.2 303.6L737.5 303.6L736.7 303.7L736.0 303.9L735.3 304.1L734.6 304.3L733.9 304.5L733.3 304.8L732.6 305.1L732.1 305.5L731.5 305.8L731.0 306.2L730.6 306.6L730.2 307.0L729.8 307.4L729.6 307.8L729.4 308.2L729.2 308.7L729.1 309.1L729.1 309.5L729.1 309.9L729.2 310.3L729.4 310.7L729.6 311.1L729.9 311.4L730.3 311.7L730.7 312.0L731.1 312.3L731.6 312.6Z" fill="#000493"/><path d="M733.5 311.7L734.0 311.8L734.5 311.9L735.0 312.0L735.5 312.0L736.0 312.1L736.6 312.1L737.1 312.0L737.7 312.0L738.2 311.9L738.8 311.8L739.3 311.6L739.9 311.5L740.4 311.3L740.9 311.1L741.3 310.8L741.8 310.6L742.2 310.3L742.6 310.0L742.9 309.7L743.2 309.4L743.4 309.1L743.6 308.8L743.8 308.5L743.9 308.2L744.0 307.8L744.0 307.5L743.9 307.2L743.9 306.9L743.7 306.6L743.6 306.4L743.3 306.1L743.1 305.9L742.8 305.6L742.4 305.4L742.0 305.3L741.6 305.1L741.2 305.0L740.7 304.9L740.2 304.8L739.7 304.7L739.1 304.7L738.6 304.7L738.1 304.8L737.5 304.8L736.9 304.9L736.4 305.0L735.9 305.2L735.3 305.3L734.8 305.5L734.3 305.7L733.9 305.9L733.4 306.2L733.0 306.4L732.7 306.7L732.3 307.0L732.0 307.3L731.8 307.6L731.6 307.9L731.4 308.3L731.3 308.6L731.2 308.9L731.2 309.2L731.2 309.5L731.3 309.8L731.4 310.1L731.6 310.4L731.8 310.7L732.1 310.9L732.4 311.1L732.7 311.3L733.1 311.5Z" fill="#000493"/><path d="M734.9 310.6L735.2 310.7L735.5 310.7L735.8 310.8L736.2 310.8L736.5 310.8L736.9 310.8L737.3 310.8L737.7 310.8L738.0 310.7L738.4 310.6L738.8 310.5L739.1 310.4L739.5 310.3L739.8 310.2L740.1 310.0L740.4 309.8L740.7 309.7L740.9 309.5L741.1 309.3L741.3 309.1L741.5 308.9L741.6 308.7L741.7 308.5L741.8 308.2L741.8 308.0L741.8 307.8L741.8 307.6L741.8 307.4L741.7 307.2L741.6 307.0L741.4 306.9L741.2 306.7L741.0 306.5L740.8 306.4L740.6 306.3L740.3 306.2L740.0 306.1L739.7 306.0L739.3 306.0L739.0 305.9L738.6 305.9L738.3 305.9L737.9 306.0L737.5 306.0L737.2 306.1L736.8 306.1L736.4 306.2L736.1 306.3L735.7 306.5L735.4 306.6L735.1 306.7L734.8 306.9L734.5 307.1L734.3 307.3L734.1 307.5L733.9 307.7L733.7 307.9L733.6 308.1L733.5 308.3L733.4 308.5L733.3 308.7L733.3 308.9L733.4 309.1L733.4 309.3L733.5 309.5L733.6 309.7L733.8 309.9L733.9 310.1L734.1 310.2L734.4 310.3L734.6 310.5Z" fill="#000493"/><path d="M736.2 309.5L736.4 309.5L736.6 309.6L736.7 309.6L736.9 309.6L737.1 309.6L737.2 309.6L737.4 309.6L737.6 309.6L737.8 309.5L738.0 309.5L738.2 309.5L738.3 309.4L738.5 309.3L738.7 309.3L738.8 309.2L739.0 309.1L739.1 309.0L739.2 308.9L739.4 308.8L739.5 308.7L739.5 308.6L739.6 308.5L739.7 308.4L739.7 308.3L739.7 308.2L739.7 308.1L739.7 308.0L739.7 307.9L739.6 307.8L739.6 307.7L739.5 307.6L739.4 307.5L739.3 307.5L739.2 307.4L739.1 307.3L738.9 307.3L738.8 307.2L738.6 307.2L738.5 307.2L738.3 307.2L738.1 307.2L737.9 307.2L737.7 307.2L737.6 307.2L737.4 307.2L737.2 307.3L737.0 307.3L736.8 307.4L736.7 307.4L736.5 307.5L736.3 307.6L736.2 307.6L736.1 307.7L735.9 307.8L735.8 307.9L735.7 308.0L735.6 308.1L735.6 308.2L735.5 308.3L735.5 308.4L735.5 308.6L735.5 308.7L735.5 308.8L735.5 308.9L735.5 309.0L735.6 309.0L735.7 309.1L735.8 309.2L735.9 309.3L736.0 309.4L736.1 309.4Z" fill="#000493"/></g></g>
<g shape-rendering="crispEdges"><path d="M702.0 113.1L699.5 120.0L704.3 125.6L706.8 118.7Z" fill="#8fff00"/><path d="M706.8 118.7L704.3 125.6L709.0 131.1L711.6 124.1Z" fill="#7bff00"/><path d="M699.5 120.0L696.9 126.8L701.7 132.4L704.3 125.6Z" fill="#7bff00"/><path d="M704.3 125.6L701.7 132.4L706.5 137.8L709.0 131.1Z" fill="#68ff00"/><path d="M711.6 124.1L709.0 131.1L713.8 136.3L716.3 129.4Z" fill="#68fe00"/><path d="M696.9 126.8L694.3 133.4L699.1 139.0L701.7 132.4Z" fill="#68fe00"/><path d="M709.0 131.1L706.5 137.8L711.2 143.1L713.8 136.3Z" fill="#55fe00"/><path d="M701.7 132.4L699.1 139.0L703.9 144.5L706.5 137.8Z" fill="#55fe00"/><path d="M716.3 129.4L713.8 136.3L718.5 141.4L721.0 134.4Z" fill="#56fe00"/><path d="M694.3 133.4L691.7 139.9L696.5 145.5L699.1 139.0Z" fill="#56fe00"/><path d="M706.5 137.8L703.9 144.5L708.6 149.7L711.2 143.1Z" fill="#42fe00"/><path d="M713.8 136.3L711.2 143.1L715.9 148.2L718.5 141.4Z" fill="#43fe00"/><path d="M699.1 139.0L696.5 145.5L701.2 150.9L703.9 144.5Z" fill="#43fe00"/><path d="M721.0 134.4L718.5 141.4L723.2 146.3L725.7 139.4Z" fill="#45fe00"/><path d="M691.7 139.9L689.0 146.1L693.8 151.7L696.5 145.5Z" fill="#45fe00"/><path d="M711.2 143.1L708.6 149.7L713.3 154.8L715.9 148.2Z" fill="#30fe00"/><path d="M703.9 144.5L701.2 150.9L706.0 156.2L708.6 149.7Z" fill="#30fe00"/><path d="M718.5 141.4L715.9 148.2L720.6 153.1L723.2 146.3Z" fill="#31fe00"/><path d="M696.5 145.5L693.8 151.7L698.6 157.2L701.2 150.9Z" fill="#31fe00"/><path d="M725.7 139.4L723.2 146.3L727.8 151.1L730.4 144.1Z" fill="#34fd00"/><path d="M689.0 146.1L686.3 152.2L691.1 157.9L693.8 151.7Z" fill="#34fd00"/><path d="M708.6 149.7L706.0 156.2L710.7 161.3L713.3 154.8Z" fill="#19fe00"/><path d="M715.9 148.2L713.3 154.8L718.0 159.8L720.6 153.1Z" fill="#1afe00"/><path d="M701.2 150.9L698.6 157.2L703.3 162.5L706.0 156.2Z" fill="#1afe00"/><path d="M723.2 146.3L720.6 153.1L725.2 157.9L727.8 151.1Z" fill="#1dfd00"/><path d="M693.8 151.7L691.1 157.9L695.9 163.3L698.6 157.2Z" fill="#1dfd00"/><path d="M730.4 144.1L727.8 151.1L732.5 155.7L735.0 148.7Z" fill="#22fd00"/><path d="M686.3 152.2L683.6 158.2L688.4 163.8L691.1 157.9Z" fill="#22fd00"/><path d="M713.3 154.8L710.7 161.3L715.4 166.2L718.0 159.8Z" fill="#00fe00"/><path d="M706.0 156.2L703.3 162.5L708.0 167.6L710.7 161.3Z" fill="#00fe00"/><path d="M720.6 153.1L718.0 159.8L722.7 164.5L725.2 157.9Z" fill="#02fd00"/><path d="M698.6 157.2L695.9 163.3L700.6 168.6L703.3 162.5Z" fill="#02fd00"/><path d="M727.8 151.1L725.2 157.9L729.9 162.5L732.5 155.7Z" fill="#06fd00"/><path d="M691.1 157.9L688.4 163.8L693.2 169.3L695.9 163.3Z" fill="#06fd00"/><path d="M735.0 148.7L732.5 155.7L737.1 160.1L739.6 153.1Z" fill="#0cfc00"/><path d="M683.6 158.2L680.8 164.0L685.6 169.6L688.4 163.8Z" fill="#0cfc00"/><path d="M710.7 161.3L708.0 167.6L712.7 172.5L715.4 166.2Z" fill="#00fd1a"/><path d="M718.0 159.8L715.4 166.2L720.0 171.0L722.7 164.5Z" fill="#00fd19"/><path d="M703.3 162.5L700.6 168.6L705.3 173.7L708.0 167.6Z" fill="#00fd19"/><path d="M725.2 157.9L722.7 164.5L727.3 169.1L729.9 162.5Z" fill="#00fd15"/><path d="M695.9 163.3L693.2 169.3L697.9 174.5L700.6 168.6Z" fill="#00fd15"/><path d="M732.5 155.7L729.9 162.5L734.5 166.9L737.1 160.1Z" fill="#00fc10"/><path d="M688.4 163.8L685.6 169.6L690.4 175.0L693.2 169.3Z" fill="#00fc10"/><path d="M739.6 153.1L737.1 160.1L741.7 164.3L744.2 157.4Z" fill="#00fb09"/><path d="M680.8 164.0L678.0 169.6L682.8 175.2L685.6 169.6Z" fill="#00fb09"/><path d="M715.4 166.2L712.7 172.5L717.4 177.3L720.0 171.0Z" fill="#00fd32"/><path d="M708.0 167.6L705.3 173.7L710.0 178.6L712.7 172.5Z" fill="#00fd32"/><path d="M722.7 164.5L720.0 171.0L724.7 175.6L727.3 169.1Z" fill="#00fd30"/><path d="M700.6 168.6L697.9 174.5L702.6 179.6L705.3 173.7Z" fill="#00fd30"/><path d="M729.9 162.5L727.3 169.1L731.9 173.5L734.5 166.9Z" fill="#00fc2b"/><path d="M693.2 169.3L690.4 175.0L695.1 180.3L697.9 174.5Z" fill="#00fc2b"/><path d="M737.1 160.1L734.5 166.9L739.1 171.2L741.7 164.3Z" fill="#00fc25"/><path d="M685.6 169.6L682.8 175.2L687.6 180.7L690.4 175.0Z" fill="#00fb25"/><path d="M744.2 157.4L741.7 164.3L746.3 168.4L748.8 161.4Z" fill="#00fb1d"/><path d="M678.0 169.6L675.2 175.0L680.0 180.7L682.8 175.2Z" fill="#00fa1d"/><path d="M712.7 172.5L710.0 178.6L714.7 183.4L717.4 177.3Z" fill="#00fd4a"/><path d="M720.0 171.0L717.4 177.3L722.0 181.9L724.7 175.6Z" fill="#00fd49"/><path d="M705.3 173.7L702.6 179.6L707.3 184.6L710.0 178.6Z" fill="#00fd49"/><path d="M727.3 169.1L724.7 175.6L729.3 180.0L731.9 173.5Z" fill="#00fc46"/><path d="M697.9 174.5L695.1 180.3L699.9 185.4L702.6 179.6Z" fill="#00fc46"/><path d="M734.5 166.9L731.9 173.5L736.5 177.8L739.1 171.2Z" fill="#00fc40"/><path d="M690.4 175.0L687.6 180.7L692.3 186.0L695.1 180.3Z" fill="#00fb40"/><path d="M741.7 164.3L739.1 171.2L743.7 175.3L746.3 168.4Z" fill="#00fb39"/><path d="M682.8 175.2L680.0 180.7L684.8 186.1L687.6 180.7Z" fill="#00fb39"/><path d="M748.8 161.4L746.3 168.4L750.8 172.4L753.4 165.4Z" fill="#00fa2f"/><path d="M717.4 177.3L714.7 183.4L719.3 188.0L722.0 181.9Z" fill="#00fc61"/><path d="M675.2 175.0L672.3 180.3L677.1 186.0L680.0 180.7Z" fill="#00f92f"/><path d="M710.0 178.6L707.3 184.6L712.0 189.4L714.7 183.4Z" fill="#00fc61"/><path d="M724.7 175.6L722.0 181.9L726.6 186.3L729.3 180.0Z" fill="#00fc5f"/><path d="M702.6 179.6L699.9 185.4L704.5 190.4L707.3 184.6Z" fill="#00fc5f"/><path d="M731.9 173.5L729.3 180.0L733.9 184.3L736.5 177.8Z" fill="#00fc5a"/><path d="M695.1 180.3L692.3 186.0L697.1 191.1L699.9 185.4Z" fill="#00fb5a"/><path d="M739.1 171.2L736.5 177.8L741.1 181.9L743.7 175.3Z" fill="#00fb54"/><path d="M687.6 180.7L684.8 186.1L689.5 191.4L692.3 186.0Z" fill="#00fb54"/><path d="M746.3 168.4L743.7 175.3L748.2 179.2L750.8 172.4Z" fill="#00fa4b"/><path d="M680.0 180.7L677.1 186.0L681.9 191.4L684.8 186.1Z" fill="#00fa4b"/><path d="M714.7 183.4L712.0 189.4L716.6 194.0L719.3 188.0Z" fill="#00fc78"/><path d="M722.0 181.9L719.3 188.0L723.9 192.5L726.6 186.3Z" fill="#00fc77"/><path d="M753.4 165.4L750.8 172.4L755.4 176.2L757.9 169.1Z" fill="#00f941"/><path d="M707.3 184.6L704.5 190.4L709.2 195.2L712.0 189.4Z" fill="#00fc77"/><path d="M729.3 180.0L726.6 186.3L731.2 190.6L733.9 184.3Z" fill="#00fb74"/><path d="M699.9 185.4L697.1 191.1L701.7 196.1L704.5 190.4Z" fill="#00fb73"/><path d="M672.3 180.3L669.3 185.5L674.2 191.1L677.1 186.0Z" fill="#00f840"/><path d="M736.5 177.8L733.9 184.3L738.4 188.4L741.1 181.9Z" fill="#00fb6e"/><path d="M692.3 186.0L689.5 191.4L694.2 196.6L697.1 191.1Z" fill="#00fb6e"/><path d="M743.7 175.3L741.1 181.9L745.6 185.9L748.2 179.2Z" fill="#00fa66"/><path d="M684.8 186.1L681.9 191.4L686.6 196.7L689.5 191.4Z" fill="#00fa66"/><path d="M750.8 172.4L748.2 179.2L752.8 183.0L755.4 176.2Z" fill="#00f95d"/><path d="M719.3 188.0L716.6 194.0L721.2 198.5L723.9 192.5Z" fill="#00fb8e"/><path d="M677.1 186.0L674.2 191.1L679.0 196.6L681.9 191.4Z" fill="#00f85c"/><path d="M712.0 189.4L709.2 195.2L713.8 199.8L716.6 194.0Z" fill="#00fb8e"/><path d="M726.6 186.3L723.9 192.5L728.5 196.8L731.2 190.6Z" fill="#00fb8c"/><path d="M704.5 190.4L701.7 196.1L706.4 200.9L709.2 195.2Z" fill="#00fb8c"/><path d="M733.9 184.3L731.2 190.6L735.8 194.8L738.4 188.4Z" fill="#00fb87"/><path d="M757.9 169.1L755.4 176.2L759.9 179.8L762.5 172.7Z" fill="#00f751"/><path d="M697.1 191.1L694.2 196.6L698.9 201.5L701.7 196.1Z" fill="#00fa87"/><path d="M741.1 181.9L738.4 188.4L743.0 192.4L745.6 185.9Z" fill="#00fa80"/><path d="M669.3 185.5L666.4 190.4L671.2 196.1L674.2 191.1Z" fill="#00f751"/><path d="M689.5 191.4L686.6 196.7L691.4 201.9L694.2 196.6Z" fill="#00fa80"/><path d="M748.2 179.2L745.6 185.9L750.2 189.7L752.8 183.0Z" fill="#00f977"/><path d="M681.9 191.4L679.0 196.6L683.7 201.9L686.6 196.7Z" fill="#00f877"/><path d="M716.6 194.0L713.8 199.8L718.5 204.3L721.2 198.5Z" fill="#00fba4"/><path d="M723.9 192.5L721.2 198.5L725.8 202.8L728.5 196.8Z" fill="#00fba3"/><path d="M755.4 176.2L752.8 183.0L757.3 186.6L759.9 179.8Z" fill="#00f76d"/><path d="M709.2 195.2L706.4 200.9L711.0 205.5L713.8 199.8Z" fill="#00fba3"/><path d="M731.2 190.6L728.5 196.8L733.1 200.9L735.8 194.8Z" fill="#00fa9f"/><path d="M701.7 196.1L698.9 201.5L703.6 206.3L706.4 200.9Z" fill="#00fa9f"/><path d="M674.2 191.1L671.2 196.1L676.0 201.6L679.0 196.6Z" fill="#00f76c"/><path d="M738.4 188.4L735.8 194.8L740.3 198.7L743.0 192.4Z" fill="#00fa9a"/><path d="M694.2 196.6L691.4 201.9L696.0 206.9L698.9 201.5Z" fill="#00fa99"/><path d="M762.5 172.7L759.9 179.8L764.4 183.2L767.0 176.2Z" fill="#00f660"/><path d="M745.6 185.9L743.0 192.4L747.5 196.2L750.2 189.7Z" fill="#00f992"/><path d="M686.6 196.7L683.7 201.9L688.4 207.1L691.4 201.9Z" fill="#00f991"/><path d="M666.4 190.4L663.4 195.3L668.2 200.9L671.2 196.1Z" fill="#00f65f"/><path d="M752.8 183.0L750.2 189.7L754.7 193.3L757.3 186.6Z" fill="#00f887"/><path d="M721.2 198.5L718.5 204.3L723.0 208.6L725.8 202.8Z" fill="#00fab9"/><path d="M679.0 196.6L676.0 201.6L680.8 206.9L683.7 201.9Z" fill="#00f787"/><path d="M713.8 199.8L711.0 205.5L715.7 210.0L718.5 204.3Z" fill="#00fab9"/><path d="M728.5 196.8L725.8 202.8L730.4 206.9L733.1 200.9Z" fill="#00fab6"/><path d="M706.4 200.9L703.6 206.3L708.2 211.0L711.0 205.5Z" fill="#00fab6"/><path d="M735.8 194.8L733.1 200.9L737.7 204.9L740.3 198.7Z" fill="#00f9b2"/><path d="M759.9 179.8L757.3 186.6L761.8 190.1L764.4 183.2Z" fill="#00f67b"/><path d="M698.9 201.5L696.0 206.9L700.7 211.7L703.6 206.3Z" fill="#00f9b2"/><path d="M743.0 192.4L740.3 198.7L744.9 202.5L747.5 196.2Z" fill="#00f9ab"/><path d="M671.2 196.1L668.2 200.9L673.0 206.4L676.0 201.6Z" fill="#00f67b"/><path d="M691.4 201.9L688.4 207.1L693.1 212.0L696.0 206.9Z" fill="#00f8ab"/><path d="M750.2 189.7L747.5 196.2L752.1 199.8L754.7 193.3Z" fill="#00f8a2"/><path d="M767.0 176.2L764.4 183.2L768.9 186.5L771.5 179.5Z" fill="#00f46d"/><path d="M683.7 201.9L680.8 206.9L685.5 212.1L688.4 207.1Z" fill="#00f7a1"/><path d="M663.4 195.3L660.3 199.9L665.1 205.6L668.2 200.9Z" fill="#00f46d"/><path d="M718.5 204.3L715.7 210.0L720.3 214.3L723.0 208.6Z" fill="#00facd"/><path d="M725.8 202.8L723.0 208.6L727.6 212.8L730.4 206.9Z" fill="#00facc"/><path d="M757.3 186.6L754.7 193.3L759.2 196.8L761.8 190.1Z" fill="#00f696"/><path d="M711.0 205.5L708.2 211.0L712.8 215.5L715.7 210.0Z" fill="#00facc"/><path d="M733.1 200.9L730.4 206.9L734.9 210.9L737.7 204.9Z" fill="#00f9c9"/><path d="M703.6 206.3L700.7 211.7L705.4 216.3L708.2 211.0Z" fill="#00f9c8"/><path d="M676.0 201.6L673.0 206.4L677.8 211.7L680.8 206.9Z" fill="#00f696"/><path d="M740.3 198.7L737.7 204.9L742.2 208.7L744.9 202.5Z" fill="#00f8c3"/><path d="M696.0 206.9L693.1 212.0L697.8 216.9L700.7 211.7Z" fill="#00f8c3"/><path d="M764.4 183.2L761.8 190.1L766.3 193.4L768.9 186.5Z" fill="#00f589"/><path d="M747.5 196.2L744.9 202.5L749.4 206.2L752.1 199.8Z" fill="#00f7bb"/><path d="M688.4 207.1L685.5 212.1L690.2 217.1L693.1 212.0Z" fill="#00f7ba"/><path d="M668.2 200.9L665.1 205.6L670.0 211.1L673.0 206.4Z" fill="#00f489"/><path d="M754.7 193.3L752.1 199.8L756.6 203.3L759.2 196.8Z" fill="#00f6b0"/><path d="M771.5 179.5L768.9 186.5L773.4 189.6L776.0 182.6Z" fill="#00f37a"/><path d="M723.0 208.6L720.3 214.3L724.8 218.5L727.6 212.8Z" fill="#00f9e1"/><path d="M680.8 206.9L677.8 211.7L682.5 216.9L685.5 212.1Z" fill="#00f6b0"/><path d="M715.7 210.0L712.8 215.5L717.4 219.8L720.3 214.3Z" fill="#00f9e1"/><path d="M730.4 206.9L727.6 212.8L732.2 216.8L734.9 210.9Z" fill="#00f9de"/><path d="M708.2 211.0L705.4 216.3L710.0 220.8L712.8 215.5Z" fill="#00f9de"/><path d="M660.3 199.9L657.2 204.4L662.1 210.1L665.1 205.6Z" fill="#00f279"/><path d="M737.7 204.9L734.9 210.9L739.5 214.8L742.2 208.7Z" fill="#00f8da"/><path d="M761.8 190.1L759.2 196.8L763.7 200.1L766.3 193.4Z" fill="#00f5a4"/><path d="M700.7 211.7L697.8 216.9L702.5 221.5L705.4 216.3Z" fill="#00f8d9"/><path d="M744.9 202.5L742.2 208.7L746.7 212.4L749.4 206.2Z" fill="#00f7d3"/><path d="M673.0 206.4L670.0 211.1L674.7 216.4L677.8 211.7Z" fill="#00f4a4"/><path d="M693.1 212.0L690.2 217.1L694.9 221.9L697.8 216.9Z" fill="#00f7d2"/><path d="M752.1 199.8L749.4 206.2L753.9 209.7L756.6 203.3Z" fill="#00f6c9"/><path d="M768.9 186.5L766.3 193.4L770.8 196.5L773.4 189.6Z" fill="#00f395"/><path d="M685.5 212.1L682.5 216.9L687.2 221.9L690.2 217.1Z" fill="#00f6c9"/><path d="M665.1 205.6L662.1 210.1L666.9 215.6L670.0 211.1Z" fill="#00f395"/><path d="M720.3 214.3L717.4 219.8L722.0 224.0L724.8 218.5Z" fill="#00f8f1"/><path d="M727.6 212.8L724.8 218.5L729.4 222.5L732.2 216.8Z" fill="#00f8f0"/><path d="M759.2 196.8L756.6 203.3L761.1 206.6L763.7 200.1Z" fill="#00f5be"/><path d="M712.8 215.5L710.0 220.8L714.6 225.2L717.4 219.8Z" fill="#00f8f0"/><path d="M734.9 210.9L732.2 216.8L736.7 220.6L739.5 214.8Z" fill="#00f8ee"/><path d="M705.4 216.3L702.5 221.5L707.1 226.1L710.0 220.8Z" fill="#00f8ee"/><path d="M677.8 211.7L674.7 216.4L679.5 221.6L682.5 216.9Z" fill="#00f4bd"/><path d="M776.0 182.6L773.4 189.6L777.9 192.6L780.5 185.5Z" fill="#00f185"/><path d="M742.2 208.7L739.5 214.8L744.0 218.4L746.7 212.4Z" fill="#00f7e9"/><path d="M697.8 216.9L694.9 221.9L699.5 226.6L702.5 221.5Z" fill="#00f7e9"/><path d="M657.2 204.4L654.1 208.8L658.9 214.5L662.1 210.1Z" fill="#00f185"/><path d="M766.3 193.4L763.7 200.1L768.2 203.3L770.8 196.5Z" fill="#00f3b0"/><path d="M749.4 206.2L746.7 212.4L751.2 215.9L753.9 209.7Z" fill="#00f6e1"/><path d="M690.2 217.1L687.2 221.9L691.9 226.8L694.9 221.9Z" fill="#00f6e1"/><path d="M670.0 211.1L666.9 215.6L671.6 221.0L674.7 216.4Z" fill="#00f3b0"/><path d="M756.6 203.3L753.9 209.7L758.4 213.0L761.1 206.6Z" fill="#00f5d6"/><path d="M773.4 189.6L770.8 196.5L775.3 199.5L777.9 192.6Z" fill="#00f1a0"/><path d="M724.8 218.5L722.0 224.0L726.6 228.0L729.4 222.5Z" fill="#00f8f7"/><path d="M682.5 216.9L679.5 221.6L684.2 226.6L687.2 221.9Z" fill="#00f4d6"/><path d="M717.4 219.8L714.6 225.2L719.2 229.4L722.0 224.0Z" fill="#00f7f7"/><path d="M732.2 216.8L729.4 222.5L733.9 226.3L736.7 220.6Z" fill="#00f7f6"/><path d="M710.0 220.8L707.1 226.1L711.7 230.4L714.6 225.2Z" fill="#00f7f6"/><path d="M662.1 210.1L658.9 214.5L663.7 220.0L666.9 215.6Z" fill="#00f1a0"/><path d="M739.5 214.8L736.7 220.6L741.2 224.3L744.0 218.4Z" fill="#00f7f4"/><path d="M763.7 200.1L761.1 206.6L765.6 209.8L768.2 203.3Z" fill="#00f3ca"/><path d="M702.5 221.5L699.5 226.6L704.2 231.1L707.1 226.1Z" fill="#00f6f4"/><path d="M746.7 212.4L744.0 218.4L748.5 221.9L751.2 215.9Z" fill="#00f6f1"/><path d="M674.7 216.4L671.6 221.0L676.4 226.2L679.5 221.6Z" fill="#00f3ca"/><path d="M694.9 221.9L691.9 226.8L696.5 231.5L699.5 226.6Z" fill="#00f6f0"/><path d="M780.5 185.5L777.9 192.6L782.4 195.4L785.0 188.3Z" fill="#00ef8f"/><path d="M753.9 209.7L751.2 215.9L755.7 219.2L758.4 213.0Z" fill="#00f5ec"/><path d="M770.8 196.5L768.2 203.3L772.7 206.3L775.3 199.5Z" fill="#00f1bb"/><path d="M654.1 208.8L650.9 213.0L655.7 218.7L658.9 214.5Z" fill="#00ef8f"/><path d="M687.2 221.9L684.2 226.6L688.9 231.5L691.9 226.8Z" fill="#00f4ec"/><path d="M666.9 215.6L663.7 220.0L668.5 225.4L671.6 221.0Z" fill="#00f1bb"/><path d="M722.0 224.0L719.2 229.4L723.7 233.4L726.6 228.0Z" fill="#00eff7"/><path d="M729.4 222.5L726.6 228.0L731.1 231.9L733.9 226.3Z" fill="#00f0f7"/><path d="M761.1 206.6L758.4 213.0L762.9 216.2L765.6 209.8Z" fill="#00f3e2"/><path d="M714.6 225.2L711.7 230.4L716.3 234.6L719.2 229.4Z" fill="#00f0f7"/><path d="M736.7 220.6L733.9 226.3L738.4 230.0L741.2 224.3Z" fill="#00f1f6"/><path d="M707.1 226.1L704.2 231.1L708.8 235.5L711.7 230.4Z" fill="#00f0f6"/><path d="M679.5 221.6L676.4 226.2L681.1 231.2L684.2 226.6Z" fill="#00f3e2"/><path d="M777.9 192.6L775.3 199.5L779.8 202.3L782.4 195.4Z" fill="#00efaa"/><path d="M744.0 218.4L741.2 224.3L745.7 227.8L748.5 221.9Z" fill="#00f2f5"/><path d="M699.5 226.6L696.5 231.5L701.2 236.0L704.2 231.1Z" fill="#00f2f5"/><path d="M658.9 214.5L655.7 218.7L660.6 224.2L663.7 220.0Z" fill="#00efaa"/><path d="M768.2 203.3L765.6 209.8L770.1 212.8L772.7 206.3Z" fill="#00f1d5"/><path d="M751.2 215.9L748.5 221.9L753.0 225.3L755.7 219.2Z" fill="#00f4f4"/><path d="M691.9 226.8L688.9 231.5L693.5 236.2L696.5 231.5Z" fill="#00f3f4"/><path d="M671.6 221.0L668.5 225.4L673.3 230.6L676.4 226.2Z" fill="#00f1d4"/><path d="M785.0 188.3L782.4 195.4L786.9 198.1L789.5 191.0Z" fill="#00ed98"/><path d="M758.4 213.0L755.7 219.2L760.2 222.4L762.9 216.2Z" fill="#00f3f0"/><path d="M775.3 199.5L772.7 206.3L777.2 209.1L779.8 202.3Z" fill="#00efc5"/><path d="M726.6 228.0L723.7 233.4L728.3 237.3L731.1 231.9Z" fill="#00e8f6"/><path d="M684.2 226.6L681.1 231.2L685.8 236.1L688.9 231.5Z" fill="#00f3ef"/><path d="M719.2 229.4L716.3 234.6L720.8 238.6L723.7 233.4Z" fill="#00e8f6"/><path d="M733.9 226.3L731.1 231.9L735.6 235.6L738.4 230.0Z" fill="#00e8f5"/><path d="M650.9 213.0L647.6 217.0L652.5 222.8L655.7 218.7Z" fill="#00ec97"/><path d="M711.7 230.4L708.8 235.5L713.3 239.7L716.3 234.6Z" fill="#00e8f5"/><path d="M663.7 220.0L660.6 224.2L665.3 229.6L668.5 225.4Z" fill="#00efc4"/><path d="M741.2 224.3L738.4 230.0L743.0 233.6L745.7 227.8Z" fill="#00e9f5"/><path d="M765.6 209.8L762.9 216.2L767.4 219.2L770.1 212.8Z" fill="#00f1ea"/><path d="M704.2 231.1L701.2 236.0L705.8 240.4L708.8 235.5Z" fill="#00e9f5"/><path d="M748.5 221.9L745.7 227.8L750.2 231.2L753.0 225.3Z" fill="#00ebf4"/><path d="M676.4 226.2L673.3 230.6L678.0 235.6L681.1 231.2Z" fill="#00f1e9"/><path d="M696.5 231.5L693.5 236.2L698.2 240.7L701.2 236.0Z" fill="#00ebf4"/><path d="M782.4 195.4L779.8 202.3L784.3 205.0L786.9 198.1Z" fill="#00edb3"/><path d="M755.7 219.2L753.0 225.3L757.5 228.5L760.2 222.4Z" fill="#00edf3"/><path d="M772.7 206.3L770.1 212.8L774.5 215.7L777.2 209.1Z" fill="#00efde"/><path d="M655.7 218.7L652.5 222.8L657.3 228.3L660.6 224.2Z" fill="#00edb2"/><path d="M688.9 231.5L685.8 236.1L690.5 240.8L693.5 236.2Z" fill="#00ecf2"/><path d="M668.5 225.4L665.3 229.6L670.1 234.8L673.3 230.6Z" fill="#00efde"/><path d="M723.7 233.4L720.8 238.6L725.4 242.5L728.3 237.3Z" fill="#00e0f5"/><path d="M731.1 231.9L728.3 237.3L732.8 241.0L735.6 235.6Z" fill="#00e0f5"/><path d="M762.9 216.2L760.2 222.4L764.7 225.5L767.4 219.2Z" fill="#00eff1"/><path d="M716.3 234.6L713.3 239.7L717.9 243.7L720.8 238.6Z" fill="#00e0f5"/><path d="M738.4 230.0L735.6 235.6L740.1 239.1L743.0 233.6Z" fill="#00e1f4"/><path d="M789.5 191.0L786.9 198.1L791.4 200.6L794.0 193.5Z" fill="#00eb9f"/><path d="M708.8 235.5L705.8 240.4L710.4 244.6L713.3 239.7Z" fill="#00e1f4"/><path d="M681.1 231.2L678.0 235.6L682.7 240.5L685.8 236.1Z" fill="#00eff1"/><path d="M779.8 202.3L777.2 209.1L781.7 211.8L784.3 205.0Z" fill="#00edcd"/><path d="M745.7 227.8L743.0 233.6L747.5 237.0L750.2 231.2Z" fill="#00e2f3"/><path d="M701.2 236.0L698.2 240.7L702.8 245.1L705.8 240.4Z" fill="#00e2f3"/><path d="M647.6 217.0L644.3 220.9L649.2 226.7L652.5 222.8Z" fill="#00ea9f"/><path d="M660.6 224.2L657.3 228.3L662.1 233.7L665.3 229.6Z" fill="#00edcc"/><path d="M770.1 212.8L767.4 219.2L771.9 222.1L774.5 215.7Z" fill="#00efec"/><path d="M753.0 225.3L750.2 231.2L754.7 234.4L757.5 228.5Z" fill="#00e4f2"/><path d="M673.3 230.6L670.1 234.8L674.8 239.9L678.0 235.6Z" fill="#00efec"/><path d="M693.5 236.2L690.5 240.8L695.1 245.3L698.2 240.7Z" fill="#00e4f2"/><path d="M786.9 198.1L784.3 205.0L788.8 207.5L791.4 200.6Z" fill="#00ebba"/><path d="M760.2 222.4L757.5 228.5L762.0 231.6L764.7 225.5Z" fill="#00e6f1"/><path d="M728.3 237.3L725.4 242.5L726.1 243.1L732.2 242.1L732.8 241.0Z" fill="#00d7f4"/><path d="M720.8 238.6L717.9 243.7L718.9 244.6L724.9 243.4L725.4 242.5Z" fill="#00d7f4"/><path d="M777.2 209.1L774.5 215.7L779.0 218.4L781.7 211.8Z" fill="#00ede5"/><path d="M735.6 235.6L732.8 241.0L733.9 241.9L739.1 241.2L740.1 239.1Z" fill="#00d7f3"/><path d="M685.8 236.1L682.7 240.5L687.4 245.2L690.5 240.8Z" fill="#00e6f1"/><path d="M713.3 239.7L710.4 244.6L712.1 246.1L717.2 244.9L717.9 243.7Z" fill="#00d7f3"/><path d="M652.5 222.8L649.2 226.7L654.0 232.2L657.3 228.3Z" fill="#00eaba"/><path d="M725.4 242.5L724.9 243.4L726.1 243.1Z" fill="#00d3f4"/><path d="M665.3 229.6L662.1 233.7L666.9 238.9L670.1 234.8Z" fill="#00ede4"/><path d="M732.8 241.0L732.2 242.1L733.9 241.9Z" fill="#00d3f3"/><path d="M717.9 243.7L717.2 244.9L718.9 244.6Z" fill="#00d3f3"/><path d="M743.0 233.6L740.1 239.1L742.3 240.8L745.7 240.4L747.5 237.0Z" fill="#00d9f3"/><path d="M767.4 219.2L764.7 225.5L769.2 228.4L771.9 222.1Z" fill="#00e9ef"/><path d="M705.8 240.4L702.8 245.1L705.6 247.8L708.9 246.9L710.4 244.6Z" fill="#00d8f3"/><path d="M740.1 239.1L739.1 241.2L742.3 240.8Z" fill="#00d3f3"/><path d="M678.0 235.6L674.8 239.9L679.5 244.8L682.7 240.5Z" fill="#00e9ef"/><path d="M794.0 193.5L791.4 200.6L795.9 202.9L798.5 195.8Z" fill="#00e8a5"/><path d="M710.4 244.6L708.9 246.9L712.1 246.1Z" fill="#00d3f3"/><path d="M784.3 205.0L781.7 211.8L786.1 214.3L788.8 207.5Z" fill="#00ebd4"/><path d="M750.2 231.2L747.5 237.0L751.6 239.9L752.1 239.9L754.7 234.4Z" fill="#00daf2"/><path d="M698.2 240.7L695.1 245.3L699.5 249.5L700.0 249.4L702.8 245.1Z" fill="#00daf1"/><path d="M757.5 228.5L754.7 234.4L759.2 237.5L762.0 231.6Z" fill="#00ddf0"/><path d="M774.5 215.7L771.9 222.1L776.3 224.8L779.0 218.4Z" fill="#00eced"/><path d="M644.3 220.9L641.0 224.7L645.9 230.4L649.2 226.7Z" fill="#00e8a5"/><path d="M657.3 228.3L654.0 232.2L658.9 237.6L662.1 233.7Z" fill="#00ead3"/><path d="M690.5 240.8L687.4 245.2L692.0 249.8L695.1 245.3Z" fill="#00ddf0"/><path d="M747.5 237.0L745.7 240.4L751.6 239.9Z" fill="#00d4f2"/><path d="M670.1 234.8L666.9 238.9L671.6 244.0L674.8 239.9Z" fill="#00eced"/><path d="M702.8 245.1L700.0 249.4L705.6 247.8Z" fill="#00d3f1"/><path d="M764.7 225.5L762.0 231.6L766.4 234.5L769.2 228.4Z" fill="#00e0ef"/><path d="M791.4 200.6L788.8 207.5L793.2 209.9L795.9 202.9Z" fill="#00e8c0"/><path d="M682.7 240.5L679.5 244.8L684.2 249.5L687.4 245.2Z" fill="#00e0ef"/><path d="M781.7 211.8L779.0 218.4L783.5 220.9L786.1 214.3Z" fill="#00ebe6"/><path d="M649.2 226.7L645.9 230.4L650.7 236.0L654.0 232.2Z" fill="#00e8bf"/><path d="M754.7 234.4L752.1 239.9L758.2 239.6L759.2 237.5Z" fill="#00d4f0"/><path d="M662.1 233.7L658.9 237.6L663.6 242.9L666.9 238.9Z" fill="#00eae5"/><path d="M771.9 222.1L769.2 228.4L773.6 231.1L776.3 224.8Z" fill="#00e3ed"/><path d="M695.1 245.3L692.0 249.8L693.7 251.4L699.5 249.5Z" fill="#00d4f0"/><path d="M674.8 239.9L671.6 244.0L676.3 248.9L679.5 244.8Z" fill="#00e2ed"/><path d="M798.5 195.8L795.9 202.9L800.3 205.1L802.9 197.9Z" fill="#00e6aa"/><path d="M788.8 207.5L786.1 214.3L790.6 216.7L793.2 209.9Z" fill="#00e8da"/><path d="M779.0 218.4L776.3 224.8L780.8 227.4L783.5 220.9Z" fill="#00e6eb"/><path d="M762.0 231.6L759.2 237.5L762.2 239.4L764.1 239.4L766.4 234.5Z" fill="#00d6ee"/><path d="M654.0 232.2L650.7 236.0L655.5 241.4L658.9 237.6Z" fill="#00e8d9"/><path d="M759.2 237.5L758.2 239.6L762.2 239.4Z" fill="#00d0ef"/><path d="M641.0 224.7L637.6 228.3L642.5 234.0L645.9 230.4Z" fill="#00e5aa"/><path d="M687.4 245.2L684.2 249.5L688.1 253.3L689.9 252.6L692.0 249.8Z" fill="#00d6ee"/><path d="M666.9 238.9L663.6 242.9L668.4 247.9L671.6 244.0Z" fill="#00e6ea"/><path d="M692.0 249.8L689.9 252.6L693.7 251.4Z" fill="#00d0ee"/><path d="M769.2 228.4L766.4 234.5L770.9 237.2L773.6 231.1Z" fill="#00daed"/><path d="M679.5 244.8L676.3 248.9L681.0 253.6L684.2 249.5Z" fill="#00daec"/><path d="M795.9 202.9L793.2 209.9L797.7 212.1L800.3 205.1Z" fill="#00e6c5"/><path d="M786.1 214.3L783.5 220.9L787.9 223.3L790.6 216.7Z" fill="#00e8e7"/><path d="M776.3 224.8L773.6 231.1L778.1 233.7L780.8 227.4Z" fill="#00ddeb"/><path d="M645.9 230.4L642.5 234.0L647.3 239.6L650.7 236.0Z" fill="#00e5c4"/><path d="M658.9 237.6L655.5 241.4L660.3 246.7L663.6 242.9Z" fill="#00e8e6"/><path d="M766.4 234.5L764.1 239.4L769.9 239.4L770.9 237.2Z" fill="#00d1ec"/><path d="M671.6 244.0L668.4 247.9L673.1 252.8L676.3 248.9Z" fill="#00ddea"/><path d="M684.2 249.5L681.0 253.6L682.7 255.3L688.1 253.3Z" fill="#00d1ec"/><path d="M793.2 209.9L790.6 216.7L795.1 218.9L797.7 212.1Z" fill="#00e6dd"/><path d="M802.9 197.9L800.3 205.1L804.8 207.1L807.4 199.9Z" fill="#00e3ae"/><path d="M783.5 220.9L780.8 227.4L785.2 229.8L787.9 223.3Z" fill="#00e1e8"/><path d="M650.7 236.0L647.3 239.6L652.2 245.0L655.5 241.4Z" fill="#00e5dd"/><path d="M663.6 242.9L660.3 246.7L665.1 251.7L668.4 247.9Z" fill="#00e0e8"/><path d="M637.6 228.3L634.1 231.7L639.0 237.5L642.5 234.0Z" fill="#00e2ae"/><path d="M773.6 231.1L770.9 237.2L774.8 239.5L775.5 239.5L778.1 233.7Z" fill="#00d3ea"/><path d="M770.9 237.2L769.9 239.4L774.8 239.5Z" fill="#00cceb"/><path d="M800.3 205.1L797.7 212.1L802.2 214.1L804.8 207.1Z" fill="#00e3c8"/><path d="M790.6 216.7L787.9 223.3L792.4 225.5L795.1 218.9Z" fill="#00e5e6"/><path d="M676.3 248.9L673.1 252.8L677.6 257.4L678.2 257.2L681.0 253.6Z" fill="#00d3ea"/><path d="M681.0 253.6L678.2 257.2L682.7 255.3Z" fill="#00ccea"/><path d="M780.8 227.4L778.1 233.7L782.5 236.1L785.2 229.8Z" fill="#00d8e8"/><path d="M655.5 241.4L652.2 245.0L657.0 250.3L660.3 246.7Z" fill="#00e4e5"/><path d="M642.5 234.0L639.0 237.5L643.9 243.1L647.3 239.6Z" fill="#00e2c7"/><path d="M668.4 247.9L665.1 251.7L669.8 256.7L673.1 252.8Z" fill="#00d7e8"/><path d="M797.7 212.1L795.1 218.9L799.5 220.9L802.2 214.1Z" fill="#00e3dd"/><path d="M787.9 223.3L785.2 229.8L789.7 232.0L792.4 225.5Z" fill="#00dce6"/><path d="M807.4 199.9L804.8 207.1L809.3 208.9L811.9 201.8Z" fill="#00e0b1"/><path d="M778.1 233.7L775.5 239.5L780.9 239.8L782.5 236.1Z" fill="#00cfe8"/><path d="M647.3 239.6L643.9 243.1L648.7 248.5L652.2 245.0Z" fill="#00e2dc"/><path d="M660.3 246.7L657.0 250.3L661.7 255.4L665.1 251.7Z" fill="#00dbe5"/><path d="M634.1 231.7L630.6 235.0L635.5 240.8L639.0 237.5Z" fill="#00dfb0"/><path d="M673.1 252.8L669.8 256.7L672.6 259.6L677.6 257.4Z" fill="#00cee7"/><path d="M795.1 218.9L792.4 225.5L796.8 227.6L799.5 220.9Z" fill="#00e0e3"/><path d="M804.8 207.1L802.2 214.1L806.6 216.0L809.3 208.9Z" fill="#00e0ca"/><path d="M785.2 229.8L782.5 236.1L787.0 238.3L789.7 232.0Z" fill="#00d2e5"/><path d="M652.2 245.0L648.7 248.5L653.5 253.8L657.0 250.3Z" fill="#00dfe2"/><path d="M639.0 237.5L635.5 240.8L640.4 246.4L643.9 243.1Z" fill="#00e0ca"/><path d="M665.1 251.7L661.7 255.4L666.5 260.3L669.8 256.7Z" fill="#00d2e5"/><path d="M782.5 236.1L780.9 239.8L786.1 240.2L787.0 238.3Z" fill="#00cae5"/><path d="M802.2 214.1L799.5 220.9L804.0 222.8L806.6 216.0Z" fill="#00e0dc"/><path d="M792.4 225.5L789.7 232.0L794.1 234.1L796.8 227.6Z" fill="#00d7e3"/><path d="M811.9 201.8L809.3 208.9L813.8 210.6L816.4 203.4Z" fill="#00ddb2"/><path d="M669.8 256.7L666.5 260.3L667.9 261.8L672.6 259.6Z" fill="#00c9e5"/><path d="M657.0 250.3L653.5 253.8L658.3 258.9L661.7 255.4Z" fill="#00d6e2"/><path d="M643.9 243.1L640.4 246.4L645.3 251.9L648.7 248.5Z" fill="#00dfdb"/><path d="M630.6 235.0L627.0 238.1L632.0 243.9L635.5 240.8Z" fill="#00dcb1"/><path d="M799.5 220.9L796.8 227.6L801.3 229.5L804.0 222.8Z" fill="#00dbe0"/><path d="M809.3 208.9L806.6 216.0L811.1 217.7L813.8 210.6Z" fill="#00ddcb"/><path d="M789.7 232.0L787.0 238.3L791.4 240.4L794.1 234.1Z" fill="#00cee3"/><path d="M648.7 248.5L645.3 251.9L650.1 257.1L653.5 253.8Z" fill="#00dadf"/><path d="M661.7 255.4L658.3 258.9L663.1 263.9L666.5 260.3Z" fill="#00cde2"/><path d="M635.5 240.8L632.0 243.9L636.9 249.6L640.4 246.4Z" fill="#00dccb"/><path d="M787.0 238.3L786.1 240.2L791.3 240.7L791.4 240.4Z" fill="#00c5e2"/><path d="M796.8 227.6L794.1 234.1L798.6 236.0L801.3 229.5Z" fill="#00d2e0"/><path d="M806.6 216.0L804.0 222.8L808.5 224.5L811.1 217.7Z" fill="#00ddda"/><path d="M666.5 260.3L663.1 263.9L663.3 264.1L667.9 261.8Z" fill="#00c4e2"/><path d="M816.4 203.4L813.8 210.6L818.2 212.2L820.9 204.9Z" fill="#00dab2"/><path d="M653.5 253.8L650.1 257.1L654.9 262.3L658.3 258.9Z" fill="#00d1df"/><path d="M640.4 246.4L636.9 249.6L641.7 255.0L645.3 251.9Z" fill="#00dcda"/><path d="M627.0 238.1L623.4 241.1L628.4 246.9L632.0 243.9Z" fill="#00d9b2"/><path d="M791.4 240.4L791.3 240.7L792.4 240.9Z" fill="#00c2e1"/><path d="M804.0 222.8L801.3 229.5L805.8 231.2L808.5 224.5Z" fill="#00d6dd"/><path d="M794.1 234.1L791.4 240.4L792.4 240.9L796.3 241.4L798.6 236.0Z" fill="#00c8e0"/><path d="M663.1 263.9L662.3 264.6L663.3 264.1Z" fill="#00c1e0"/><path d="M813.8 210.6L811.1 217.7L815.6 219.2L818.2 212.2Z" fill="#00dacb"/><path d="M658.3 258.9L654.9 262.3L658.9 266.5L662.3 264.6L663.1 263.9Z" fill="#00c7df"/><path d="M645.3 251.9L641.7 255.0L646.6 260.3L650.1 257.1Z" fill="#00d6dc"/><path d="M632.0 243.9L628.4 246.9L633.3 252.6L636.9 249.6Z" fill="#00d9ca"/><path d="M801.3 229.5L798.6 236.0L803.1 237.8L805.8 231.2Z" fill="#00cddd"/><path d="M811.1 217.7L808.5 224.5L812.9 226.1L815.6 219.2Z" fill="#00dad8"/><path d="M820.9 204.9L818.2 212.2L822.7 213.5L825.4 206.3Z" fill="#00d7b1"/><path d="M650.1 257.1L646.6 260.3L651.3 265.5L654.9 262.3Z" fill="#00cddc"/><path d="M636.9 249.6L633.3 252.6L638.1 258.1L641.7 255.0Z" fill="#00d9d7"/><path d="M623.4 241.1L619.7 244.0L624.7 249.8L628.4 246.9Z" fill="#00d6b1"/><path d="M798.6 236.0L796.3 241.4L801.2 242.2L803.1 237.8Z" fill="#00c5dc"/><path d="M808.5 224.5L805.8 231.2L810.2 232.8L812.9 226.1Z" fill="#00d2da"/><path d="M818.2 212.2L815.6 219.2L820.1 220.6L822.7 213.5Z" fill="#00d7ca"/><path d="M654.9 262.3L651.3 265.5L654.6 268.9L658.9 266.5Z" fill="#00c4dc"/><path d="M641.7 255.0L638.1 258.1L643.0 263.4L646.6 260.3Z" fill="#00d1d9"/><path d="M628.4 246.9L624.7 249.8L629.6 255.5L633.3 252.6Z" fill="#00d6c9"/><path d="M805.8 231.2L803.1 237.8L807.5 239.4L810.2 232.8Z" fill="#00c9d9"/><path d="M815.6 219.2L812.9 226.1L817.4 227.5L820.1 220.6Z" fill="#00d6d5"/><path d="M646.6 260.3L643.0 263.4L647.8 268.6L651.3 265.5Z" fill="#00c8d9"/><path d="M825.4 206.3L822.7 213.5L827.2 214.7L829.9 207.5Z" fill="#00d3af"/><path d="M633.3 252.6L629.6 255.5L634.5 261.0L638.1 258.1Z" fill="#00d6d5"/><path d="M803.1 237.8L801.2 242.2L805.9 243.1L807.5 239.4Z" fill="#00c1d9"/><path d="M619.7 244.0L616.0 246.6L620.9 252.5L624.7 249.8Z" fill="#00d2af"/><path d="M812.9 226.1L810.2 232.8L814.7 234.3L817.4 227.5Z" fill="#00ced6"/><path d="M651.3 265.5L647.8 268.6L650.5 271.4L654.6 268.9Z" fill="#00c0d8"/><path d="M822.7 213.5L820.1 220.6L824.6 221.8L827.2 214.7Z" fill="#00d3c7"/><path d="M638.1 258.1L634.5 261.0L639.3 266.3L643.0 263.4Z" fill="#00cdd5"/><path d="M624.7 249.8L620.9 252.5L625.9 258.2L629.6 255.5Z" fill="#00d2c6"/><path d="M810.2 232.8L807.5 239.4L812.0 240.8L814.7 234.3Z" fill="#00c5d6"/><path d="M820.1 220.6L817.4 227.5L821.9 228.8L824.6 221.8Z" fill="#00d3d2"/><path d="M643.0 263.4L639.3 266.3L644.1 271.5L647.8 268.6Z" fill="#00c4d5"/><path d="M829.9 207.5L827.2 214.7L831.7 215.8L834.4 208.5Z" fill="#00d0ac"/><path d="M629.6 255.5L625.9 258.2L630.8 263.7L634.5 261.0Z" fill="#00d2d1"/><path d="M807.5 239.4L805.9 243.1L810.6 244.1L812.0 240.8Z" fill="#00bdd5"/><path d="M616.0 246.6L612.1 249.2L617.1 255.0L620.9 252.5Z" fill="#00cfac"/><path d="M817.4 227.5L814.7 234.3L819.2 235.5L821.9 228.8Z" fill="#00cad2"/><path d="M647.8 268.6L644.1 271.5L646.6 274.0L650.5 271.4Z" fill="#00bcd5"/><path d="M827.2 214.7L824.6 221.8L829.1 222.9L831.7 215.8Z" fill="#00cfc4"/><path d="M634.5 261.0L630.8 263.7L635.6 269.0L639.3 266.3Z" fill="#00c9d2"/><path d="M620.9 252.5L617.1 255.0L622.1 260.7L625.9 258.2Z" fill="#00cfc3"/><path d="M814.7 234.3L812.0 240.8L816.4 242.1L819.2 235.5Z" fill="#00c1d2"/><path d="M824.6 221.8L821.9 228.8L826.4 229.8L829.1 222.9Z" fill="#00cfcf"/><path d="M639.3 266.3L635.6 269.0L640.5 274.2L644.1 271.5Z" fill="#00c1d1"/><path d="M834.4 208.5L831.7 215.8L836.3 216.6L838.9 209.3Z" fill="#00cca8"/><path d="M625.9 258.2L622.1 260.7L627.0 266.3L630.8 263.7Z" fill="#00cece"/><path d="M812.0 240.8L810.6 244.1L815.1 245.3L816.4 242.1Z" fill="#00b9d2"/><path d="M612.1 249.2L608.3 251.5L613.3 257.4L617.1 255.0Z" fill="#00cba8"/><path d="M821.9 228.8L819.2 235.5L823.7 236.6L826.4 229.8Z" fill="#00c7cf"/><path d="M644.1 271.5L640.5 274.2L642.8 276.7L646.6 274.0Z" fill="#00b8d1"/><path d="M831.7 215.8L829.1 222.9L833.6 223.8L836.3 216.6Z" fill="#00ccbf"/><path d="M630.8 263.7L627.0 266.3L631.9 271.6L635.6 269.0Z" fill="#00c6ce"/><path d="M617.1 255.0L613.3 257.4L618.2 263.1L622.1 260.7Z" fill="#00cbbf"/><path d="M819.2 235.5L816.4 242.1L820.9 243.2L823.7 236.6Z" fill="#00bece"/><path d="M829.1 222.9L826.4 229.8L830.9 230.7L833.6 223.8Z" fill="#00cbca"/><path d="M635.6 269.0L631.9 271.6L636.7 276.8L640.5 274.2Z" fill="#00bdcd"/><path d="M838.9 209.3L836.3 216.6L840.8 217.3L843.5 210.0Z" fill="#00c8a4"/><path d="M816.4 242.1L815.1 245.3L819.5 246.5L820.9 243.2Z" fill="#00b6ce"/><path d="M622.1 260.7L618.2 263.1L623.2 268.7L627.0 266.3Z" fill="#00caca"/><path d="M640.5 274.2L636.7 276.8L639.2 279.4L642.8 276.7Z" fill="#00b5cd"/><path d="M826.4 229.8L823.7 236.6L828.1 237.6L830.9 230.7Z" fill="#00c3cb"/><path d="M608.3 251.5L604.3 253.8L609.3 259.7L613.3 257.4Z" fill="#00c7a3"/><path d="M836.3 216.6L833.6 223.8L838.1 224.5L840.8 217.3Z" fill="#00c8ba"/><path d="M627.0 266.3L623.2 268.7L628.0 274.1L631.9 271.6Z" fill="#00c2ca"/><path d="M613.3 257.4L609.3 259.7L614.3 265.4L618.2 263.1Z" fill="#00c7b9"/><path d="M823.7 236.6L820.9 243.2L825.4 244.2L828.1 237.6Z" fill="#00baca"/><path d="M833.6 223.8L830.9 230.7L835.4 231.5L838.1 224.5Z" fill="#00c7c6"/><path d="M631.9 271.6L628.0 274.1L632.9 279.3L636.7 276.8Z" fill="#00bac9"/><path d="M820.9 243.2L819.5 246.5L823.8 247.9L825.4 244.2Z" fill="#00b2ca"/><path d="M843.5 210.0L840.8 217.3L845.3 217.9L848.0 210.5Z" fill="#00c49e"/><path d="M618.2 263.1L614.3 265.4L619.3 271.0L623.2 268.7Z" fill="#00c6c5"/><path d="M636.7 276.8L632.9 279.3L635.7 282.2L639.2 279.4Z" fill="#00b2c9"/><path d="M830.9 230.7L828.1 237.6L832.7 238.3L835.4 231.5Z" fill="#00c0c7"/><path d="M604.3 253.8L600.3 255.8L605.3 261.8L609.3 259.7Z" fill="#00c39d"/><path d="M840.8 217.3L838.1 224.5L842.6 225.0L845.3 217.9Z" fill="#00c4b4"/><path d="M623.2 268.7L619.3 271.0L624.2 276.4L628.0 274.1Z" fill="#00bfc6"/><path d="M828.1 237.6L825.4 244.2L829.9 245.0L832.7 238.3Z" fill="#00b7c6"/><path d="M609.3 259.7L605.3 261.8L610.3 267.5L614.3 265.4Z" fill="#00c3b3"/><path d="M838.1 224.5L835.4 231.5L839.9 232.1L842.6 225.0Z" fill="#00c3c1"/><path d="M628.0 274.1L624.2 276.4L629.0 281.6L632.9 279.3Z" fill="#00b7c5"/><path d="M825.4 244.2L823.8 247.9L828.0 249.5L829.9 245.0Z" fill="#00afc6"/><path d="M848.0 210.5L845.3 217.9L849.9 218.2L852.6 210.8Z" fill="#00c097"/><path d="M614.3 265.4L610.3 267.5L615.3 273.1L619.3 271.0Z" fill="#00c2c0"/><path d="M632.9 279.3L629.0 281.6L632.4 285.1L635.7 282.2Z" fill="#00aec5"/><path d="M835.4 231.5L832.7 238.3L837.2 238.9L839.9 232.1Z" fill="#00bdc3"/><path d="M600.3 255.8L596.2 257.7L601.3 263.7L605.3 261.8Z" fill="#00bf97"/><path d="M845.3 217.9L842.6 225.0L847.2 225.4L849.9 218.2Z" fill="#00c0ad"/><path d="M619.3 271.0L615.3 273.1L620.2 278.5L624.2 276.4Z" fill="#00bcc2"/><path d="M832.7 238.3L829.9 245.0L834.4 245.6L837.2 238.9Z" fill="#00b4c2"/><path d="M605.3 261.8L601.3 263.7L606.3 269.5L610.3 267.5Z" fill="#00bfac"/><path d="M842.6 225.0L839.9 232.1L844.5 232.5L847.2 225.4Z" fill="#00bfbb"/><path d="M624.2 276.4L620.2 278.5L625.1 283.8L629.0 281.6Z" fill="#00b4c1"/><path d="M829.9 245.0L828.0 249.5L832.1 251.1L834.4 245.6Z" fill="#00acc1"/><path d="M610.3 267.5L606.3 269.5L611.2 275.1L615.3 273.1Z" fill="#00beba"/><path d="M852.6 210.8L849.9 218.2L854.5 218.4L857.2 211.0Z" fill="#00bc90"/><path d="M839.9 232.1L837.2 238.9L841.7 239.4L844.5 232.5Z" fill="#00babe"/><path d="M629.0 281.6L625.1 283.8L629.2 288.1L632.4 285.1Z" fill="#00acc0"/><path d="M596.2 257.7L592.0 259.5L597.1 265.5L601.3 263.7Z" fill="#00bb8f"/><path d="M849.9 218.2L847.2 225.4L851.7 225.6L854.5 218.4Z" fill="#00bba5"/><path d="M615.3 273.1L611.2 275.1L616.2 280.5L620.2 278.5Z" fill="#00b9bd"/><path d="M837.2 238.9L834.4 245.6L838.9 246.1L841.7 239.4Z" fill="#00b2be"/><path d="M601.3 263.7L597.1 265.5L602.1 271.3L606.3 269.5Z" fill="#00baa4"/><path d="M847.2 225.4L844.5 232.5L849.0 232.7L851.7 225.6Z" fill="#00bbb6"/><path d="M620.2 278.5L616.2 280.5L621.1 285.8L625.1 283.8Z" fill="#00b1bd"/><path d="M606.3 269.5L602.1 271.3L607.1 276.9L611.2 275.1Z" fill="#00bab5"/><path d="M857.2 211.0L854.5 218.4L859.1 218.4L861.8 210.9Z" fill="#00b888"/><path d="M834.4 245.6L832.1 251.1L835.1 252.5L836.1 252.6L838.9 246.1Z" fill="#00a8bc"/><path d="M844.5 232.5L841.7 239.4L846.3 239.6L849.0 232.7Z" fill="#00b7ba"/><path d="M592.0 259.5L587.8 261.1L592.9 267.1L597.1 265.5Z" fill="#00b788"/><path d="M625.1 283.8L621.1 285.8L625.9 290.9L626.8 290.5L629.2 288.1Z" fill="#00a7bb"/><path d="M854.5 218.4L851.7 225.6L856.3 225.7L859.1 218.4Z" fill="#00b79d"/><path d="M611.2 275.1L607.1 276.9L612.1 282.4L616.2 280.5Z" fill="#00b6b9"/><path d="M841.7 239.4L838.9 246.1L843.5 246.4L846.3 239.6Z" fill="#00afb9"/><path d="M836.0 252.9L836.1 252.6L835.1 252.5Z" fill="#00a1ba"/><path d="M597.1 265.5L592.9 267.1L597.9 272.9L602.1 271.3Z" fill="#00b69c"/><path d="M851.7 225.6L849.0 232.7L853.6 232.8L856.3 225.7Z" fill="#00b6af"/><path d="M616.2 280.5L612.1 282.4L617.0 287.7L621.1 285.8Z" fill="#00aeb8"/><path d="M626.8 290.5L625.9 290.9L626.2 291.2Z" fill="#00a0b9"/><path d="M838.9 246.1L836.1 252.6L840.7 252.9L843.5 246.4Z" fill="#00a7b8"/><path d="M602.1 271.3L597.9 272.9L602.9 278.5L607.1 276.9Z" fill="#00b5ae"/><path d="M861.8 210.9L859.1 218.4L863.7 218.2L866.4 210.7Z" fill="#00b480"/><path d="M849.0 232.7L846.3 239.6L850.8 239.7L853.6 232.8Z" fill="#00b5b5"/><path d="M621.1 285.8L617.0 287.7L621.9 292.8L625.9 290.9Z" fill="#00a6b7"/><path d="M836.1 252.6L836.0 252.9L839.8 254.9L840.7 252.9Z" fill="#009fb7"/><path d="M587.8 261.1L583.5 262.5L588.6 268.5L592.9 267.1Z" fill="#00b27f"/><path d="M607.1 276.9L602.9 278.5L607.9 284.0L612.1 282.4Z" fill="#00b4b4"/><path d="M859.1 218.4L856.3 225.7L860.9 225.5L863.7 218.2Z" fill="#00b394"/><path d="M625.9 290.9L621.9 292.8L623.3 294.3L626.2 291.2Z" fill="#009eb6"/><path d="M846.3 239.6L843.5 246.4L848.0 246.5L850.8 239.7Z" fill="#00acb4"/><path d="M592.9 267.1L588.6 268.5L593.6 274.4L597.9 272.9Z" fill="#00b293"/><path d="M856.3 225.7L853.6 232.8L858.2 232.7L860.9 225.5Z" fill="#00b2a6"/><path d="M612.1 282.4L607.9 284.0L612.8 289.4L617.0 287.7Z" fill="#00acb3"/><path d="M843.5 246.4L840.7 252.9L845.2 253.1L848.0 246.5Z" fill="#00a4b3"/><path d="M597.9 272.9L593.6 274.4L598.7 280.0L602.9 278.5Z" fill="#00b1a5"/><path d="M866.4 210.7L863.7 218.2L868.3 217.9L871.1 210.4Z" fill="#00af77"/><path d="M853.6 232.8L850.8 239.7L855.4 239.6L858.2 232.7Z" fill="#00b1b0"/><path d="M617.0 287.7L612.8 289.4L617.7 294.5L621.9 292.8Z" fill="#00a4b2"/><path d="M840.7 252.9L839.8 254.9L843.5 257.0L845.2 253.1Z" fill="#009db3"/><path d="M583.5 262.5L579.1 263.8L584.2 269.8L588.6 268.5Z" fill="#00ae76"/><path d="M602.9 278.5L598.7 280.0L603.6 285.6L607.9 284.0Z" fill="#00b0ae"/><path d="M863.7 218.2L860.9 225.5L865.6 225.2L868.3 217.9Z" fill="#00ae8a"/><path d="M621.9 292.8L617.7 294.5L620.7 297.6L623.3 294.3Z" fill="#009cb2"/><path d="M850.8 239.7L848.0 246.5L852.6 246.4L855.4 239.6Z" fill="#00aab0"/><path d="M588.6 268.5L584.2 269.8L589.3 275.7L593.6 274.4Z" fill="#00ad89"/><path d="M860.9 225.5L858.2 232.7L862.8 232.4L865.6 225.2Z" fill="#00ad9c"/><path d="M607.9 284.0L603.6 285.6L608.6 290.9L612.8 289.4Z" fill="#00a9af"/><path d="M848.0 246.5L845.2 253.1L849.8 253.1L852.6 246.4Z" fill="#00a2af"/><path d="M593.6 274.4L589.3 275.7L594.3 281.4L598.7 280.0Z" fill="#00ac9b"/><path d="M871.1 210.4L868.3 217.9L873.0 217.4L875.7 209.8Z" fill="#00ab6d"/><path d="M858.2 232.7L855.4 239.6L860.0 239.4L862.8 232.4Z" fill="#00aca9"/><path d="M612.8 289.4L608.6 290.9L613.5 296.1L617.7 294.5Z" fill="#00a1ae"/><path d="M579.1 263.8L574.6 264.9L579.7 271.0L584.2 269.8Z" fill="#00aa6d"/><path d="M845.2 253.1L843.5 257.0L847.1 259.2L849.8 253.1Z" fill="#009bad"/><path d="M598.7 280.0L594.3 281.4L599.3 286.9L603.6 285.6Z" fill="#00aba8"/><path d="M868.3 217.9L865.6 225.2L870.2 224.7L873.0 217.4Z" fill="#00aa80"/><path d="M617.7 294.5L613.5 296.1L618.1 300.9L620.7 297.6Z" fill="#009aac"/><path d="M855.4 239.6L852.6 246.4L857.2 246.2L860.0 239.4Z" fill="#00a8ab"/><path d="M584.2 269.8L579.7 271.0L584.8 276.9L589.3 275.7Z" fill="#00a97f"/><path d="M603.6 285.6L599.3 286.9L604.3 292.3L608.6 290.9Z" fill="#00a7aa"/><path d="M865.6 225.2L862.8 232.4L867.4 231.9L870.2 224.7Z" fill="#00a992"/><path d="M852.6 246.4L849.8 253.1L854.4 252.9L857.2 246.2Z" fill="#00a0aa"/><path d="M589.3 275.7L584.8 276.9L589.9 282.6L594.3 281.4Z" fill="#00a891"/><path d="M875.7 209.8L873.0 217.4L877.7 216.6L880.4 209.1Z" fill="#00a663"/><path d="M862.8 232.4L860.0 239.4L864.6 238.9L867.4 231.9Z" fill="#00a8a1"/><path d="M608.6 290.9L604.3 292.3L609.2 297.5L613.5 296.1Z" fill="#009fa9"/><path d="M849.8 253.1L847.1 259.2L847.5 259.5L851.5 259.3L854.4 252.9Z" fill="#0098a9"/><path d="M574.6 264.9L570.0 265.8L575.2 271.9L579.7 271.0Z" fill="#00a563"/><path d="M594.3 281.4L589.9 282.6L594.9 288.1L599.3 286.9Z" fill="#00a6a0"/><path d="M873.0 217.4L870.2 224.7L874.9 224.0L877.7 216.6Z" fill="#00a576"/><path d="M613.5 296.1L609.2 297.5L614.1 302.6L617.9 301.3L618.1 300.9Z" fill="#0097a8"/><path d="M860.0 239.4L857.2 246.2L861.8 245.8L864.6 238.9Z" fill="#00a6a6"/><path d="M579.7 271.0L575.2 271.9L580.3 277.9L584.8 276.9Z" fill="#00a475"/><path d="M599.3 286.9L594.9 288.1L599.9 293.5L604.3 292.3Z" fill="#00a5a5"/><path d="M870.2 224.7L867.4 231.9L872.1 231.3L874.9 224.0Z" fill="#00a487"/><path d="M850.5 261.7L851.5 259.3L847.5 259.5Z" fill="#0091a6"/><path d="M857.2 246.2L854.4 252.9L859.0 252.5L861.8 245.8Z" fill="#009ea5"/><path d="M617.9 301.3L614.1 302.6L615.9 304.4Z" fill="#0090a5"/><path d="M584.8 276.9L580.3 277.9L585.4 283.6L589.9 282.6Z" fill="#00a386"/><path d="M880.4 209.1L877.7 216.6L882.4 215.7L885.2 208.1Z" fill="#00a259"/><path d="M867.4 231.9L864.6 238.9L869.3 238.3L872.1 231.3Z" fill="#00a397"/><path d="M604.3 292.3L599.9 293.5L604.8 298.8L609.2 297.5Z" fill="#009da4"/><path d="M854.4 252.9L851.5 259.3L856.1 259.0L859.0 252.5Z" fill="#0096a3"/><path d="M570.0 265.8L565.3 266.6L570.5 272.7L575.2 271.9Z" fill="#00a159"/><path d="M589.9 282.6L585.4 283.6L590.4 289.2L594.9 288.1Z" fill="#00a296"/><path d="M877.7 216.6L874.9 224.0L879.6 223.2L882.4 215.7Z" fill="#00a16b"/><path d="M864.6 238.9L861.8 245.8L866.5 245.2L869.3 238.3Z" fill="#00a19f"/><path d="M609.2 297.5L604.8 298.8L609.7 303.8L614.1 302.6Z" fill="#0095a2"/><path d="M851.5 259.3L850.5 261.7L853.8 264.3L856.1 259.0Z" fill="#008fa2"/><path d="M575.2 271.9L570.5 272.7L575.7 278.7L580.3 277.9Z" fill="#009f6a"/><path d="M594.9 288.1L590.4 289.2L595.4 294.6L599.9 293.5Z" fill="#00a09e"/><path d="M874.9 224.0L872.1 231.3L876.8 230.4L879.6 223.2Z" fill="#009f7c"/><path d="M614.1 302.6L609.7 303.8L613.8 307.9L615.9 304.4Z" fill="#008ea1"/><path d="M861.8 245.8L859.0 252.5L863.6 251.9L866.5 245.2Z" fill="#009ca0"/><path d="M580.3 277.9L575.7 278.7L580.8 284.5L585.4 283.6Z" fill="#009e7b"/><path d="M885.2 208.1L882.4 215.7L887.1 214.6L889.9 207.0Z" fill="#009d4f"/><path d="M872.1 231.3L869.3 238.3L874.0 237.5L876.8 230.4Z" fill="#009e8b"/><path d="M599.9 293.5L595.4 294.6L600.4 299.9L604.8 298.8Z" fill="#009b9f"/><path d="M859.0 252.5L856.1 259.0L860.8 258.5L863.6 251.9Z" fill="#00959e"/><path d="M565.3 266.6L560.6 267.2L565.8 273.4L570.5 272.7Z" fill="#009c4e"/><path d="M585.4 283.6L580.8 284.5L585.8 290.1L590.4 289.2Z" fill="#009d8a"/><path d="M882.4 215.7L879.6 223.2L884.3 222.1L887.1 214.6Z" fill="#009c60"/><path d="M869.3 238.3L866.5 245.2L871.1 244.4L874.0 237.5Z" fill="#009d98"/><path d="M604.8 298.8L600.4 299.9L605.3 305.0L609.7 303.8Z" fill="#00939d"/><path d="M570.5 272.7L565.8 273.4L571.0 279.4L575.7 278.7Z" fill="#009b5f"/><path d="M856.1 259.0L853.8 264.3L854.8 265.2L857.9 264.8L860.8 258.5Z" fill="#008d9d"/><path d="M590.4 289.2L585.8 290.1L590.9 295.5L595.4 294.6Z" fill="#009b97"/><path d="M879.6 223.2L876.8 230.4L881.5 229.4L884.3 222.1Z" fill="#009b70"/><path d="M866.5 245.2L863.6 251.9L868.3 251.2L871.1 244.4Z" fill="#009a9b"/><path d="M609.7 303.8L605.3 305.0L610.2 309.9L613.1 309.1L613.8 307.9Z" fill="#008c9c"/><path d="M575.7 278.7L571.0 279.4L576.1 285.2L580.8 284.5Z" fill="#00996f"/><path d="M889.9 207.0L887.1 214.6L891.9 213.4L894.7 205.7Z" fill="#009944"/><path d="M595.4 294.6L590.9 295.5L595.8 300.8L600.4 299.9Z" fill="#00999a"/><path d="M876.8 230.4L874.0 237.5L878.7 236.5L881.5 229.4Z" fill="#00997f"/><path d="M856.8 267.1L857.9 264.8L854.8 265.2Z" fill="#00869a"/><path d="M863.6 251.9L860.8 258.5L865.4 257.7L868.3 251.2Z" fill="#009399"/><path d="M560.6 267.2L555.7 267.7L561.0 273.9L565.8 273.4Z" fill="#009744"/><path d="M580.8 284.5L576.1 285.2L581.2 290.8L585.8 290.1Z" fill="#00987e"/><path d="M887.1 214.6L884.3 222.1L889.1 220.9L891.9 213.4Z" fill="#009755"/><path d="M613.1 309.1L610.2 309.9L611.9 311.6Z" fill="#008599"/><path d="M874.0 237.5L871.1 244.4L875.8 243.5L878.7 236.5Z" fill="#00988d"/><path d="M600.4 299.9L595.8 300.8L600.8 305.9L605.3 305.0Z" fill="#009298"/><path d="M565.8 273.4L561.0 273.9L566.2 279.9L571.0 279.4Z" fill="#009654"/><path d="M860.8 258.5L857.9 264.8L862.5 264.1L865.4 257.7Z" fill="#008c98"/><path d="M585.8 290.1L581.2 290.8L586.2 296.3L590.9 295.5Z" fill="#00978c"/><path d="M884.3 222.1L881.5 229.4L886.3 228.2L889.1 220.9Z" fill="#009664"/><path d="M871.1 244.4L868.3 251.2L873.0 250.2L875.8 243.5Z" fill="#009694"/><path d="M605.3 305.0L600.8 305.9L605.7 310.9L610.2 309.9Z" fill="#008b97"/><path d="M571.0 279.4L566.2 279.9L571.3 285.7L576.1 285.2Z" fill="#009564"/><path d="M857.9 264.8L856.8 267.1L859.8 270.1L862.5 264.1Z" fill="#008596"/><path d="M894.7 205.7L891.9 213.4L896.7 211.9L899.6 204.1Z" fill="#00943a"/><path d="M590.9 295.5L586.2 296.3L591.2 301.6L595.8 300.8Z" fill="#009593"/><path d="M881.5 229.4L878.7 236.5L883.4 235.3L886.3 228.2Z" fill="#009473"/><path d="M610.2 309.9L605.7 310.9L610.3 315.4L611.9 311.6Z" fill="#008495"/><path d="M868.3 251.2L865.4 257.7L870.1 256.8L873.0 250.2Z" fill="#009194"/><path d="M555.7 267.7L550.8 268.0L556.1 274.2L561.0 273.9Z" fill="#009339"/><path d="M576.1 285.2L571.3 285.7L576.4 291.3L581.2 290.8Z" fill="#009372"/><path d="M891.9 213.4L889.1 220.9L893.9 219.4L896.7 211.9Z" fill="#00934a"/><path d="M878.7 236.5L875.8 243.5L880.6 242.3L883.4 235.3Z" fill="#009381"/><path d="M595.8 300.8L591.2 301.6L596.2 306.7L600.8 305.9Z" fill="#009093"/><path d="M865.4 257.7L862.5 264.1L867.2 263.3L870.1 256.8Z" fill="#008a92"/><path d="M561.0 273.9L556.1 274.2L561.3 280.2L566.2 279.9Z" fill="#009149"/><path d="M581.2 290.8L576.4 291.3L581.5 296.8L586.2 296.3Z" fill="#009280"/><path d="M889.1 220.9L886.3 228.2L891.1 226.8L893.9 219.4Z" fill="#009159"/><path d="M875.8 243.5L873.0 250.2L877.7 249.1L880.6 242.3Z" fill="#00918c"/><path d="M600.8 305.9L596.2 306.7L601.1 311.7L605.7 310.9Z" fill="#008991"/><path d="M566.2 279.9L561.3 280.2L566.4 286.0L571.3 285.7Z" fill="#009058"/><path d="M862.5 264.1L859.8 270.1L860.0 270.3L864.3 269.5L867.2 263.3Z" fill="#008391"/><path d="M899.6 204.1L896.7 211.9L901.6 210.2L904.4 202.4Z" fill="#008f2f"/><path d="M586.2 296.3L581.5 296.8L586.5 302.2L591.2 301.6Z" fill="#00908b"/><path d="M886.3 228.2L883.4 235.3L888.2 234.0L891.1 226.8Z" fill="#009067"/><path d="M605.7 310.9L601.1 311.7L606.0 316.5L610.2 315.7L610.3 315.4Z" fill="#008290"/><path d="M873.0 250.2L870.1 256.8L874.8 255.8L877.7 249.1Z" fill="#008f8f"/><path d="M550.8 268.0L545.7 268.1L551.0 274.3L556.1 274.2Z" fill="#008e2e"/><path d="M571.3 285.7L566.4 286.0L571.6 291.7L576.4 291.3Z" fill="#008e66"/><path d="M896.7 211.9L893.9 219.4L898.8 217.8L901.6 210.2Z" fill="#008e3e"/><path d="M883.4 235.3L880.6 242.3L885.3 241.0L888.2 234.0Z" fill="#008e74"/><path d="M591.2 301.6L586.5 302.2L591.5 307.3L596.2 306.7Z" fill="#008e8e"/><path d="M862.4 273.4L864.3 269.5L860.0 270.3Z" fill="#007c8e"/><path d="M870.1 256.8L867.2 263.3L871.9 262.2L874.8 255.8Z" fill="#00888d"/><path d="M556.1 274.2L551.0 274.3L556.3 280.3L561.3 280.2Z" fill="#008d3e"/><path d="M576.4 291.3L571.6 291.7L576.6 297.3L581.5 296.8Z" fill="#008d73"/><path d="M893.9 219.4L891.1 226.8L895.9 225.2L898.8 217.8Z" fill="#008c4d"/><path d="M610.2 315.7L606.0 316.5L609.0 319.4Z" fill="#007b8d"/><path d="M880.6 242.3L877.7 249.1L882.5 247.8L885.3 241.0Z" fill="#008c80"/><path d="M596.2 306.7L591.5 307.3L596.4 312.3L601.1 311.7Z" fill="#00878c"/><path d="M561.3 280.2L556.3 280.3L561.5 286.2L566.4 286.0Z" fill="#008b4c"/><path d="M904.4 202.4L901.6 210.2L906.5 208.3L909.3 200.5Z" fill="#008b24"/><path d="M867.2 263.3L864.3 269.5L869.0 268.5L871.9 262.2Z" fill="#00818b"/><path d="M581.5 296.8L576.6 297.3L581.7 302.6L586.5 302.2Z" fill="#008b7f"/><path d="M891.1 226.8L888.2 234.0L893.0 232.4L895.9 225.2Z" fill="#008b5b"/><path d="M877.7 249.1L874.8 255.8L879.6 254.5L882.5 247.8Z" fill="#008a87"/><path d="M601.1 311.7L596.4 312.3L601.3 317.2L606.0 316.5Z" fill="#00808a"/><path d="M545.7 268.1L540.6 268.0L545.9 274.2L551.0 274.3Z" fill="#008a24"/><path d="M566.4 286.0L561.5 286.2L566.6 291.9L571.6 291.7Z" fill="#008a5a"/><path d="M901.6 210.2L898.8 217.8L903.6 215.9L906.5 208.3Z" fill="#008933"/><path d="M888.2 234.0L885.3 241.0L890.1 239.5L893.0 232.4Z" fill="#008967"/><path d="M586.5 302.2L581.7 302.6L586.7 307.8L591.5 307.3Z" fill="#008986"/><path d="M864.3 269.5L862.4 273.4L863.7 275.1L866.0 274.7L869.0 268.5Z" fill="#007a89"/><path d="M874.8 255.8L871.9 262.2L876.6 261.0L879.6 254.5Z" fill="#008688"/><path d="M551.0 274.3L545.9 274.2L551.2 280.3L556.3 280.3Z" fill="#008833"/><path d="M606.0 316.5L601.3 317.2L606.2 321.9L608.4 321.5L609.0 319.4Z" fill="#007988"/><path d="M571.6 291.7L566.6 291.9L571.7 297.5L576.6 297.3Z" fill="#008866"/><path d="M898.8 217.8L895.9 225.2L900.8 223.4L903.6 215.9Z" fill="#008841"/><path d="M885.3 241.0L882.5 247.8L887.2 246.3L890.1 239.5Z" fill="#008773"/><path d="M591.5 307.3L586.7 307.8L591.6 312.8L596.4 312.3Z" fill="#008587"/><path d="M556.3 280.3L551.2 280.3L556.4 286.2L561.5 286.2Z" fill="#008641"/><path d="M871.9 262.2L869.0 268.5L873.7 267.3L876.6 261.0Z" fill="#008086"/><path d="M909.3 200.5L906.5 208.3L911.4 206.2L914.3 198.4Z" fill="#008619"/><path d="M864.9 276.9L866.0 274.7L863.7 275.1Z" fill="#007486"/><path d="M576.6 297.3L571.7 297.5L576.8 302.9L581.7 302.6Z" fill="#008672"/><path d="M895.9 225.2L893.0 232.4L897.9 230.6L900.8 223.4Z" fill="#00864e"/><path d="M882.5 247.8L879.6 254.5L884.3 253.0L887.2 246.3Z" fill="#00857e"/><path d="M596.4 312.3L591.6 312.8L596.5 317.7L601.3 317.2Z" fill="#007f85"/><path d="M608.4 321.5L606.2 321.9L608.0 323.5Z" fill="#007385"/><path d="M540.6 268.0L535.3 267.7L540.7 274.0L545.9 274.2Z" fill="#008519"/><path d="M561.5 286.2L556.4 286.2L561.6 292.0L566.6 291.9Z" fill="#00854e"/><path d="M906.5 208.3L903.6 215.9L908.6 213.9L911.4 206.2Z" fill="#008528"/><path d="M893.0 232.4L890.1 239.5L895.0 237.7L897.9 230.6Z" fill="#00845b"/><path d="M869.0 268.5L866.0 274.7L870.7 273.5L873.7 267.3Z" fill="#007984"/><path d="M581.7 302.6L576.8 302.9L581.8 308.1L586.7 307.8Z" fill="#00847d"/><path d="M879.6 254.5L876.6 261.0L881.4 259.6L884.3 253.0Z" fill="#008382"/><path d="M545.9 274.2L540.7 274.0L546.0 280.1L551.2 280.3Z" fill="#008328"/><path d="M601.3 317.2L596.5 317.7L601.4 322.4L606.2 321.9Z" fill="#007883"/><path d="M566.6 291.9L561.6 292.0L566.7 297.6L571.7 297.5Z" fill="#00835a"/><path d="M903.6 215.9L900.8 223.4L905.7 221.4L908.6 213.9Z" fill="#008336"/><path d="M890.1 239.5L887.2 246.3L892.1 244.6L895.0 237.7Z" fill="#008266"/><path d="M586.7 307.8L581.8 308.1L586.8 313.1L591.6 312.8Z" fill="#008280"/><path d="M866.0 274.7L864.9 276.9L866.6 279.8L867.7 279.5L870.7 273.5Z" fill="#007281"/><path d="M551.2 280.3L546.0 280.1L551.2 286.1L556.4 286.2Z" fill="#008235"/><path d="M876.6 261.0L873.7 267.3L878.4 265.9L881.4 259.6Z" fill="#007e81"/><path d="M914.3 198.4L911.4 206.2L916.4 203.9L919.3 196.0Z" fill="#00820f"/><path d="M571.7 297.5L566.7 297.6L571.8 303.0L576.8 302.9Z" fill="#008165"/><path d="M900.8 223.4L897.9 230.6L902.8 228.7L905.7 221.4Z" fill="#008142"/><path d="M606.2 321.9L601.4 322.4L606.3 326.9L607.4 326.8L608.0 323.5Z" fill="#007180"/><path d="M887.2 246.3L884.3 253.0L889.1 251.4L892.1 244.6Z" fill="#008070"/><path d="M591.6 312.8L586.8 313.1L591.7 318.0L596.5 317.7Z" fill="#007d80"/><path d="M535.3 267.7L530.0 267.3L535.3 273.6L540.7 274.0Z" fill="#00800f"/><path d="M556.4 286.2L551.2 286.1L556.4 291.9L561.6 292.0Z" fill="#008042"/><path d="M911.4 206.2L908.6 213.9L913.5 211.6L916.4 203.9Z" fill="#00801d"/><path d="M873.7 267.3L870.7 273.5L875.5 272.1L878.4 265.9Z" fill="#00787e"/><path d="M897.9 230.6L895.0 237.7L899.9 235.8L902.8 228.7Z" fill="#007f4e"/><path d="M576.8 302.9L571.8 303.0L576.8 308.2L581.8 308.1Z" fill="#007f6f"/><path d="M867.1 280.7L867.7 279.5L866.6 279.8Z" fill="#006d7e"/><path d="M884.3 253.0L881.4 259.6L886.2 257.9L889.1 251.4Z" fill="#007e79"/><path d="M596.5 317.7L591.7 318.0L596.6 322.8L601.4 322.4Z" fill="#00767d"/><path d="M540.7 274.0L535.3 273.6L540.7 279.8L546.0 280.1Z" fill="#007f1d"/><path d="M561.6 292.0L556.4 291.9L561.5 297.5L566.7 297.6Z" fill="#007e4d"/><path d="M908.6 213.9L905.7 221.4L910.6 219.1L913.5 211.6Z" fill="#007e2a"/><path d="M607.4 326.8L606.3 326.9L607.3 327.9Z" fill="#006c7c"/><path d="M895.0 237.7L892.1 244.6L896.9 242.7L899.9 235.8Z" fill="#007d59"/><path d="M581.8 308.1L576.8 308.2L581.8 313.3L586.8 313.1Z" fill="#007d78"/><path d="M870.7 273.5L867.7 279.5L872.5 278.1L875.5 272.1Z" fill="#00717c"/><path d="M546.0 280.1L540.7 279.8L545.9 285.7L551.2 286.1Z" fill="#007d2a"/><path d="M881.4 259.6L878.4 265.9L883.2 264.3L886.2 257.9Z" fill="#007c7b"/><path d="M919.3 196.0L916.4 203.9L921.4 201.4L924.3 193.4Z" fill="#007d04"/><path d="M566.7 297.6L561.5 297.5L566.7 302.9L571.8 303.0Z" fill="#007c58"/><path d="M601.4 322.4L596.6 322.8L601.5 327.3L606.3 326.9Z" fill="#00707b"/><path d="M905.7 221.4L902.8 228.7L907.7 226.5L910.6 219.1Z" fill="#007c37"/><path d="M892.1 244.6L889.1 251.4L894.0 249.5L896.9 242.7Z" fill="#007b63"/><path d="M586.8 313.1L581.8 313.3L586.8 318.2L591.7 318.0Z" fill="#007a7a"/><path d="M530.0 267.3L524.5 266.7L529.9 273.0L535.3 273.6Z" fill="#007c04"/><path d="M867.7 279.5L867.1 280.7L868.7 284.2L869.5 284.0L872.5 278.1Z" fill="#006b79"/><path d="M551.2 286.1L545.9 285.7L551.1 291.5L556.4 291.9Z" fill="#007b36"/><path d="M916.4 203.9L913.5 211.6L918.5 209.1L921.4 201.4Z" fill="#007b12"/><path d="M878.4 265.9L875.5 272.1L880.2 270.5L883.2 264.3Z" fill="#007679"/><path d="M902.8 228.7L899.9 235.8L904.8 233.6L907.7 226.5Z" fill="#007a42"/><path d="M571.8 303.0L566.7 302.9L571.7 308.2L576.8 308.2Z" fill="#007a62"/><path d="M606.3 326.9L601.5 327.3L606.3 331.7L607.1 331.7L607.3 327.9Z" fill="#006a78"/><path d="M889.1 251.4L886.2 257.9L891.0 256.1L894.0 249.5Z" fill="#00796c"/><path d="M591.7 318.0L586.8 318.2L591.7 323.0L596.6 322.8Z" fill="#007578"/><path d="M535.3 273.6L529.9 273.0L535.2 279.2L540.7 279.8Z" fill="#007a12"/><path d="M556.4 291.9L551.1 291.5L556.3 297.2L561.5 297.5Z" fill="#007941"/><path d="M913.5 211.6L910.6 219.1L915.6 216.7L918.5 209.1Z" fill="#007a1f"/><path d="M899.9 235.8L896.9 242.7L901.8 240.6L904.8 233.6Z" fill="#00784c"/><path d="M576.8 308.2L571.7 308.2L576.7 313.3L581.8 313.3Z" fill="#00786b"/><path d="M875.5 272.1L872.5 278.1L877.2 276.6L880.2 270.5Z" fill="#007077"/><path d="M869.0 284.9L869.5 284.0L868.7 284.2Z" fill="#006675"/><path d="M886.2 257.9L883.2 264.3L888.1 262.5L891.0 256.1Z" fill="#007673"/><path d="M540.7 279.8L535.2 279.2L540.5 285.2L545.9 285.7Z" fill="#00781f"/><path d="M924.3 193.4L921.4 201.4L926.5 198.6L929.4 190.6Z" fill="#067900"/><path d="M596.6 322.8L591.7 323.0L596.6 327.6L601.5 327.3Z" fill="#006f75"/><path d="M561.5 297.5L556.3 297.2L561.4 302.6L566.7 302.9Z" fill="#00774c"/><path d="M910.6 219.1L907.7 226.5L912.7 224.1L915.6 216.7Z" fill="#00782b"/><path d="M607.1 331.7L606.3 331.7L607.1 332.4Z" fill="#006574"/><path d="M896.9 242.7L894.0 249.5L898.9 247.4L901.8 240.6Z" fill="#007656"/><path d="M581.8 313.3L576.7 313.3L581.7 318.2L586.8 318.2Z" fill="#007571"/><path d="M872.5 278.1L869.5 284.0L874.2 282.5L877.2 276.6Z" fill="#006a74"/><path d="M524.5 266.7L518.9 265.8L524.3 272.2L529.9 273.0Z" fill="#067700"/><path d="M545.9 285.7L540.5 285.2L545.8 291.1L551.1 291.5Z" fill="#00762b"/><path d="M921.4 201.4L918.5 209.1L923.6 206.4L926.5 198.6Z" fill="#007708"/><path d="M883.2 264.3L880.2 270.5L885.1 268.8L888.1 262.5Z" fill="#007474"/><path d="M907.7 226.5L904.8 233.6L909.7 231.3L912.7 224.1Z" fill="#007636"/><path d="M566.7 302.9L561.4 302.6L566.5 307.9L571.7 308.2Z" fill="#007555"/><path d="M601.5 327.3L596.6 327.6L601.4 332.0L606.3 331.7Z" fill="#006973"/><path d="M894.0 249.5L891.0 256.1L895.9 254.1L898.9 247.4Z" fill="#00745f"/><path d="M586.8 318.2L581.7 318.2L586.6 323.0L591.7 323.0Z" fill="#007373"/><path d="M529.9 273.0L524.3 272.2L529.7 278.5L535.2 279.2Z" fill="#007608"/><path d="M551.1 291.5L545.8 291.1L551.0 296.7L556.3 297.2Z" fill="#007435"/><path d="M918.5 209.1L915.6 216.7L920.7 214.0L923.6 206.4Z" fill="#007514"/><path d="M869.5 284.0L869.0 284.9L870.1 288.5L871.2 288.2L874.2 282.5Z" fill="#006371"/><path d="M904.8 233.6L901.8 240.6L906.8 238.3L909.7 231.3Z" fill="#007340"/><path d="M571.7 308.2L566.5 307.9L571.6 313.1L576.7 313.3Z" fill="#00725e"/><path d="M880.2 270.5L877.2 276.6L882.0 274.9L885.1 268.8Z" fill="#006e71"/><path d="M606.3 331.7L601.4 332.0L606.2 336.3L607.3 336.2L607.1 332.4Z" fill="#006270"/><path d="M891.0 256.1L888.1 262.5L892.9 260.5L895.9 254.1Z" fill="#007166"/><path d="M535.2 279.2L529.7 278.5L535.0 284.5L540.5 285.2Z" fill="#007414"/><path d="M929.4 190.6L926.5 198.6L931.6 195.7L934.6 187.6Z" fill="#107400"/><path d="M591.7 323.0L586.6 323.0L591.6 327.6L596.6 327.6Z" fill="#006d70"/><path d="M556.3 297.2L551.0 296.7L556.1 302.2L561.4 302.6Z" fill="#00723f"/><path d="M915.6 216.7L912.7 224.1L917.7 221.5L920.7 214.0Z" fill="#007320"/><path d="M901.8 240.6L898.9 247.4L903.8 245.1L906.8 238.3Z" fill="#007149"/><path d="M576.7 313.3L571.6 313.1L576.6 318.0L581.7 318.2Z" fill="#007065"/><path d="M877.2 276.6L874.2 282.5L879.0 280.8L882.0 274.9Z" fill="#00686f"/><path d="M518.9 265.8L513.2 264.8L518.6 271.3L524.3 272.2Z" fill="#107300"/><path d="M540.5 285.2L535.0 284.5L540.3 290.4L545.8 291.1Z" fill="#00721f"/><path d="M926.5 198.6L923.6 206.4L928.7 203.5L931.6 195.7Z" fill="#037200"/><path d="M888.1 262.5L885.1 268.8L889.9 266.8L892.9 260.5Z" fill="#006f6b"/><path d="M870.4 289.6L871.2 288.2L870.1 288.5Z" fill="#005e6d"/><path d="M912.7 224.1L909.7 231.3L914.8 228.7L917.7 221.5Z" fill="#00712a"/><path d="M561.4 302.6L556.1 302.2L561.2 307.5L566.5 307.9Z" fill="#007049"/><path d="M596.6 327.6L591.6 327.6L596.4 332.1L601.4 332.0Z" fill="#00676d"/><path d="M898.9 247.4L895.9 254.1L900.8 251.8L903.8 245.1Z" fill="#006f52"/><path d="M607.3 336.2L606.2 336.3L607.4 337.3Z" fill="#005d6c"/><path d="M581.7 318.2L576.6 318.0L581.5 322.8L586.6 323.0Z" fill="#006e6a"/><path d="M524.3 272.2L518.6 271.3L524.0 277.5L529.7 278.5Z" fill="#037100"/><path d="M545.8 291.1L540.3 290.4L545.5 296.1L551.0 296.7Z" fill="#006f2a"/><path d="M923.6 206.4L920.7 214.0L925.7 211.2L928.7 203.5Z" fill="#00700a"/><path d="M874.2 282.5L871.2 288.2L875.9 286.5L879.0 280.8Z" fill="#00636c"/><path d="M909.7 231.3L906.8 238.3L911.8 235.8L914.8 228.7Z" fill="#006f34"/><path d="M885.1 268.8L882.0 274.9L886.9 272.9L889.9 266.8Z" fill="#006c6c"/><path d="M566.5 307.9L561.2 307.5L566.3 312.7L571.6 313.1Z" fill="#006d51"/><path d="M601.4 332.0L596.4 332.1L601.3 336.4L606.2 336.3Z" fill="#00616a"/><path d="M895.9 254.1L892.9 260.5L897.8 258.3L900.8 251.8Z" fill="#006c59"/><path d="M529.7 278.5L524.0 277.5L529.4 283.6L535.0 284.5Z" fill="#006f09"/><path d="M934.6 187.6L931.6 195.7L936.8 192.5L939.8 184.4Z" fill="#177000"/><path d="M586.6 323.0L581.5 322.8L586.4 327.5L591.6 327.6Z" fill="#006b6b"/><path d="M920.7 214.0L917.7 221.5L922.8 218.6L925.7 211.2Z" fill="#006e15"/><path d="M551.0 296.7L545.5 296.1L550.7 301.6L556.1 302.2Z" fill="#006d34"/><path d="M871.2 288.2L870.4 289.6L871.1 292.8L872.9 292.1L875.9 286.5Z" fill="#005d69"/><path d="M906.8 238.3L903.8 245.1L908.8 242.7L911.8 235.8Z" fill="#006c3d"/><path d="M571.6 313.1L566.3 312.7L571.3 317.7L576.6 318.0Z" fill="#006b58"/><path d="M882.0 274.9L879.0 280.8L883.8 278.9L886.9 272.9Z" fill="#006669"/><path d="M513.2 264.8L507.3 263.6L512.8 270.1L518.6 271.3Z" fill="#176e00"/><path d="M535.0 284.5L529.4 283.6L534.7 289.5L540.3 290.4Z" fill="#006d15"/><path d="M931.6 195.7L928.7 203.5L933.9 200.4L936.8 192.5Z" fill="#0d6e00"/><path d="M606.2 336.3L601.3 336.4L606.1 340.5L607.9 340.5L607.4 337.3Z" fill="#005b67"/><path d="M892.9 260.5L889.9 266.8L894.8 264.6L897.8 258.3Z" fill="#006a5f"/><path d="M917.7 221.5L914.8 228.7L919.8 225.9L922.8 218.6Z" fill="#006c1f"/><path d="M556.1 302.2L550.7 301.6L555.8 307.0L561.2 307.5Z" fill="#006b3c"/><path d="M591.6 327.6L586.4 327.5L591.3 332.0L596.4 332.1Z" fill="#006568"/><path d="M903.8 245.1L900.8 251.8L905.8 249.4L908.8 242.7Z" fill="#006a45"/><path d="M576.6 318.0L571.3 317.7L576.3 322.5L581.5 322.8Z" fill="#00685e"/><path d="M518.6 271.3L512.8 270.1L518.2 276.4L524.0 277.5Z" fill="#0c6c00"/><path d="M879.0 280.8L875.9 286.5L880.8 284.7L883.8 278.9Z" fill="#006166"/><path d="M540.3 290.4L534.7 289.5L539.9 295.2L545.5 296.1Z" fill="#006b1f"/><path d="M928.7 203.5L925.7 211.2L930.9 208.1L933.9 200.4Z" fill="#016c00"/><path d="M914.8 228.7L911.8 235.8L916.8 233.0L919.8 225.9Z" fill="#006a29"/><path d="M889.9 266.8L886.9 272.9L891.8 270.8L894.8 264.6Z" fill="#006764"/><path d="M561.2 307.5L555.8 307.0L560.9 312.1L566.3 312.7Z" fill="#006844"/><path d="M871.4 294.8L872.9 292.1L871.1 292.8Z" fill="#005765"/><path d="M596.4 332.1L591.3 332.0L596.2 336.3L601.3 336.4Z" fill="#006065"/><path d="M900.8 251.8L897.8 258.3L902.8 255.9L905.8 249.4Z" fill="#00674c"/><path d="M524.0 277.5L518.2 276.4L523.6 282.5L529.4 283.6Z" fill="#016a00"/><path d="M939.8 184.4L936.8 192.5L942.0 189.0L945.0 180.9Z" fill="#1d6b00"/><path d="M581.5 322.8L576.3 322.5L581.2 327.2L586.4 327.5Z" fill="#006662"/><path d="M607.9 340.5L606.1 340.5L608.4 342.4Z" fill="#005663"/><path d="M925.7 211.2L922.8 218.6L927.9 215.6L930.9 208.1Z" fill="#006a0a"/><path d="M545.5 296.1L539.9 295.2L545.1 300.8L550.7 301.6Z" fill="#006828"/><path d="M875.9 286.5L872.9 292.1L877.7 290.3L880.8 284.7Z" fill="#005b63"/><path d="M911.8 235.8L908.8 242.7L913.8 239.9L916.8 233.0Z" fill="#006731"/><path d="M566.3 312.7L560.9 312.1L565.9 317.2L571.3 317.7Z" fill="#00664b"/><path d="M886.9 272.9L883.8 278.9L888.7 276.8L891.8 270.8Z" fill="#006464"/><path d="M507.3 263.6L501.3 262.2L506.8 268.7L512.8 270.1Z" fill="#1d6a00"/><path d="M529.4 283.6L523.6 282.5L528.9 288.4L534.7 289.5Z" fill="#00680a"/><path d="M936.8 192.5L933.9 200.4L939.1 197.0L942.0 189.0Z" fill="#156900"/><path d="M601.3 336.4L596.2 336.3L601.0 340.4L606.1 340.5Z" fill="#005a62"/><path d="M897.8 258.3L894.8 264.6L899.8 262.3L902.8 255.9Z" fill="#006552"/><path d="M922.8 218.6L919.8 225.9L924.9 222.9L927.9 215.6Z" fill="#006714"/><path d="M550.7 301.6L545.1 300.8L550.3 306.2L555.8 307.0Z" fill="#006631"/><path d="M586.4 327.5L581.2 327.2L586.1 331.7L591.3 332.0Z" fill="#006362"/><path d="M908.8 242.7L905.8 249.4L910.8 246.7L913.8 239.9Z" fill="#006539"/><path d="M872.9 292.1L871.4 294.8L871.5 296.9L874.5 295.8L877.7 290.3Z" fill="#005660"/><path d="M571.3 317.7L565.9 317.2L570.9 322.0L576.3 322.5Z" fill="#006351"/><path d="M512.8 270.1L506.8 268.7L512.3 275.1L518.2 276.4Z" fill="#146800"/><path d="M883.8 278.9L880.8 284.7L885.6 282.6L888.7 276.8Z" fill="#005f61"/><path d="M933.9 200.4L930.9 208.1L936.1 204.7L939.1 197.0Z" fill="#0b6700"/><path d="M534.7 289.5L528.9 288.4L534.2 294.2L539.9 295.2Z" fill="#006614"/><path d="M606.1 340.5L601.0 340.4L605.8 344.4L608.9 344.5L608.4 342.4Z" fill="#00555f"/><path d="M919.8 225.9L916.8 233.0L921.9 230.1L924.9 222.9Z" fill="#00651e"/><path d="M894.8 264.6L891.8 270.8L896.7 268.4L899.8 262.3Z" fill="#006257"/><path d="M555.8 307.0L550.3 306.2L555.4 311.4L560.9 312.1Z" fill="#006438"/><path d="M591.3 332.0L586.1 331.7L591.0 336.0L596.2 336.3Z" fill="#005e60"/><path d="M905.8 249.4L902.8 255.9L907.8 253.3L910.8 246.7Z" fill="#006240"/><path d="M945.0 180.9L942.0 189.0L947.3 185.3L950.3 177.2Z" fill="#236700"/><path d="M518.2 276.4L512.3 275.1L517.7 281.2L523.6 282.5Z" fill="#0a6600"/><path d="M576.3 322.5L570.9 322.0L575.9 326.7L581.2 327.2Z" fill="#006056"/><path d="M930.9 208.1L927.9 215.6L933.1 212.3L936.1 204.7Z" fill="#006500"/><path d="M539.9 295.2L534.2 294.2L539.4 299.8L545.1 300.8Z" fill="#00641d"/><path d="M880.8 284.7L877.7 290.3L882.5 288.3L885.6 282.6Z" fill="#00595e"/><path d="M916.8 233.0L913.8 239.9L918.9 237.0L921.9 230.1Z" fill="#006326"/><path d="M560.9 312.1L555.4 311.4L560.5 316.5L565.9 317.2Z" fill="#00613f"/><path d="M891.8 270.8L888.7 276.8L893.6 274.5L896.7 268.4Z" fill="#005f5b"/><path d="M871.6 300.6L874.5 295.8L871.5 296.9Z" fill="#00505c"/><path d="M501.3 262.2L495.2 260.6L500.8 267.2L506.8 268.7Z" fill="#236600"/><path d="M942.0 189.0L939.1 197.0L944.4 193.3L947.3 185.3Z" fill="#1b6500"/><path d="M596.2 336.3L591.0 336.0L595.9 340.2L601.0 340.4Z" fill="#00585d"/><path d="M523.6 282.5L517.7 281.2L523.1 287.2L528.9 288.4Z" fill="#006400"/><path d="M902.8 255.9L899.8 262.3L904.7 259.7L907.8 253.3Z" fill="#006046"/><path d="M927.9 215.6L924.9 222.9L930.1 219.7L933.1 212.3Z" fill="#00630a"/><path d="M545.1 300.8L539.4 299.8L544.6 305.2L550.3 306.2Z" fill="#006125"/><path d="M581.2 327.2L575.9 326.7L580.8 331.2L586.1 331.7Z" fill="#005e5a"/><path d="M608.9 344.5L605.8 344.4L610.2 348.0Z" fill="#004f5b"/><path d="M913.8 239.9L910.8 246.7L915.9 243.8L918.9 237.0Z" fill="#00602d"/><path d="M877.7 290.3L874.5 295.8L879.4 293.7L882.5 288.3Z" fill="#00545b"/><path d="M565.9 317.2L560.5 316.5L565.5 321.3L570.9 322.0Z" fill="#005e45"/><path d="M506.8 268.7L500.8 267.2L506.3 273.5L512.3 275.1Z" fill="#1a6400"/><path d="M888.7 276.8L885.6 282.6L890.5 280.3L893.6 274.5Z" fill="#005c5b"/><path d="M939.1 197.0L936.1 204.7L941.4 201.1L944.4 193.3Z" fill="#136300"/><path d="M528.9 288.4L523.1 287.2L528.4 293.0L534.2 294.2Z" fill="#00610a"/><path d="M924.9 222.9L921.9 230.1L927.1 226.9L930.1 219.7Z" fill="#006013"/><path d="M899.8 262.3L896.7 268.4L901.7 265.9L904.7 259.7Z" fill="#005d4b"/><path d="M601.0 340.4L595.9 340.2L600.7 344.2L605.8 344.4Z" fill="#005359"/><path d="M550.3 306.2L544.6 305.2L549.8 310.5L555.4 311.4Z" fill="#005f2d"/><path d="M586.1 331.7L580.8 331.2L585.7 335.6L591.0 336.0Z" fill="#005b5a"/><path d="M910.8 246.7L907.8 253.3L912.8 250.4L915.9 243.8Z" fill="#005d34"/><path d="M950.3 177.2L947.3 185.3L952.7 181.4L955.7 173.2Z" fill="#296300"/><path d="M512.3 275.1L506.3 273.5L511.7 279.7L517.7 281.2Z" fill="#126100"/><path d="M570.9 322.0L565.5 321.3L570.5 326.1L575.9 326.7Z" fill="#005b4a"/><path d="M874.5 295.8L871.6 300.6L871.6 301.0L876.2 299.1L879.4 293.7Z" fill="#004f57"/><path d="M936.1 204.7L933.1 212.3L938.3 208.8L941.4 201.1Z" fill="#0a6100"/><path d="M534.2 294.2L528.4 293.0L533.6 298.6L539.4 299.8Z" fill="#005f13"/><path d="M885.6 282.6L882.5 288.3L887.4 286.0L890.5 280.3Z" fill="#005759"/><path d="M921.9 230.1L918.9 237.0L924.1 233.9L927.1 226.9Z" fill="#005e1b"/><path d="M555.4 311.4L549.8 310.5L554.9 315.6L560.5 316.5Z" fill="#005c33"/><path d="M605.8 344.4L600.7 344.2L605.4 348.1L610.3 348.3L610.2 348.0Z" fill="#004e56"/><path d="M896.7 268.4L893.6 274.5L898.6 271.9L901.7 265.9Z" fill="#005a4f"/><path d="M495.2 260.6L488.9 258.8L494.5 265.4L500.8 267.2Z" fill="#286100"/><path d="M947.3 185.3L944.4 193.3L949.7 189.5L952.7 181.4Z" fill="#206100"/><path d="M591.0 336.0L585.7 335.6L590.6 339.8L595.9 340.2Z" fill="#005657"/><path d="M517.7 281.2L511.7 279.7L517.1 285.7L523.1 287.2Z" fill="#095f00"/><path d="M907.8 253.3L904.7 259.7L909.8 256.8L912.8 250.4Z" fill="#005b3a"/><path d="M933.1 212.3L930.1 219.7L935.3 216.2L938.3 208.8Z" fill="#005e00"/><path d="M539.4 299.8L533.6 298.6L538.9 304.1L544.6 305.2Z" fill="#005d1b"/><path d="M575.9 326.7L570.5 326.1L575.4 330.6L580.8 331.2Z" fill="#00584e"/><path d="M918.9 237.0L915.9 243.8L921.0 240.7L924.1 233.9Z" fill="#005b22"/><path d="M882.5 288.3L879.4 293.7L884.3 291.5L887.4 286.0Z" fill="#005255"/><path d="M560.5 316.5L554.9 315.6L559.9 320.5L565.5 321.3Z" fill="#005939"/><path d="M500.8 267.2L494.5 265.4L500.1 271.8L506.3 273.5Z" fill="#205f00"/><path d="M893.6 274.5L890.5 280.3L895.5 277.8L898.6 271.9Z" fill="#005752"/><path d="M944.4 193.3L941.4 201.1L946.7 197.3L949.7 189.5Z" fill="#195e00"/><path d="M523.1 287.2L517.1 285.7L522.4 291.6L528.4 293.0Z" fill="#005d00"/><path d="M871.3 304.9L873.1 304.2L876.2 299.1L871.6 301.0Z" fill="#004953"/><path d="M595.9 340.2L590.6 339.8L595.4 343.9L600.7 344.2Z" fill="#005154"/><path d="M930.1 219.7L927.1 226.9L932.3 223.4L935.3 216.2Z" fill="#005c09"/><path d="M904.7 259.7L901.7 265.9L906.7 263.1L909.8 256.8Z" fill="#00583e"/><path d="M544.6 305.2L538.9 304.1L544.0 309.3L549.8 310.5Z" fill="#005a22"/><path d="M580.8 331.2L575.4 330.6L580.3 335.0L585.7 335.6Z" fill="#005551"/><path d="M610.3 348.3L605.4 348.1L610.2 351.8L612.0 351.9Z" fill="#004852"/><path d="M955.7 173.2L952.7 181.4L958.1 177.2L961.2 168.9Z" fill="#2e5f00"/><path d="M915.9 243.8L912.8 250.4L918.0 247.3L921.0 240.7Z" fill="#005929"/><path d="M506.3 273.5L500.1 271.8L505.5 278.0L511.7 279.7Z" fill="#185d00"/><path d="M565.5 321.3L559.9 320.5L564.9 325.2L570.5 326.1Z" fill="#00563e"/><path d="M941.4 201.1L938.3 208.8L943.6 205.0L946.7 197.3Z" fill="#115c00"/><path d="M528.4 293.0L522.4 291.6L527.7 297.2L533.6 298.6Z" fill="#005a09"/><path d="M879.4 293.7L876.2 299.1L881.1 296.9L884.3 291.5Z" fill="#004d52"/><path d="M890.5 280.3L887.4 286.0L892.4 283.5L895.5 277.8Z" fill="#005452"/><path d="M927.1 226.9L924.1 233.9L929.2 230.5L932.3 223.4Z" fill="#005911"/><path d="M549.8 310.5L544.0 309.3L549.1 314.5L554.9 315.6Z" fill="#005728"/><path d="M901.7 265.9L898.6 271.9L903.6 269.2L906.7 263.1Z" fill="#005542"/><path d="M600.7 344.2L595.4 343.9L600.2 347.7L605.4 348.1Z" fill="#004c51"/><path d="M488.9 258.8L482.5 256.8L488.2 263.4L494.5 265.4Z" fill="#2d5d00"/><path d="M870.9 307.6L873.1 304.2L871.3 304.9Z" fill="#00454f"/><path d="M952.7 181.4L949.7 189.5L955.1 185.3L958.1 177.2Z" fill="#265c00"/><path d="M585.7 335.6L580.3 335.0L585.2 339.2L590.6 339.8Z" fill="#005251"/><path d="M511.7 279.7L505.5 278.0L511.0 284.1L517.1 285.7Z" fill="#115b00"/><path d="M912.8 250.4L909.8 256.8L914.9 253.8L918.0 247.3Z" fill="#00562e"/><path d="M938.3 208.8L935.3 216.2L940.6 212.5L943.6 205.0Z" fill="#095a00"/><path d="M533.6 298.6L527.7 297.2L533.0 302.7L538.9 304.1Z" fill="#005811"/><path d="M570.5 326.1L564.9 325.2L569.9 329.8L575.4 330.6Z" fill="#005341"/><path d="M612.0 351.9L610.2 351.8L613.4 354.2Z" fill="#00444e"/><path d="M876.2 299.1L873.1 304.2L877.9 302.1L881.1 296.9Z" fill="#00484e"/><path d="M924.1 233.9L921.0 240.7L926.2 237.3L929.2 230.5Z" fill="#005718"/><path d="M887.4 286.0L884.3 291.5L889.2 289.1L892.4 283.5Z" fill="#005050"/><path d="M554.9 315.6L549.1 314.5L554.2 319.4L559.9 320.5Z" fill="#00542e"/><path d="M494.5 265.4L488.2 263.4L493.7 269.8L500.1 271.8Z" fill="#255b00"/><path d="M898.6 271.9L895.5 277.8L900.5 275.1L903.6 269.2Z" fill="#005246"/><path d="M949.7 189.5L946.7 197.3L952.1 193.2L955.1 185.3Z" fill="#1e5a00"/><path d="M517.1 285.7L511.0 284.1L516.3 290.0L522.4 291.6Z" fill="#095800"/><path d="M605.4 348.1L600.2 347.7L605.0 351.5L610.2 351.8Z" fill="#00474d"/><path d="M590.6 339.8L585.2 339.2L590.1 343.3L595.4 343.9Z" fill="#004f4f"/><path d="M935.3 216.2L932.3 223.4L937.6 219.7L940.6 212.5Z" fill="#015700"/><path d="M909.8 256.8L906.7 263.1L911.8 260.1L914.9 253.8Z" fill="#005333"/><path d="M538.9 304.1L533.0 302.7L538.1 308.0L544.0 309.3Z" fill="#005518"/><path d="M575.4 330.6L569.9 329.8L574.8 334.2L580.3 335.0Z" fill="#005044"/><path d="M961.2 168.9L958.1 177.2L963.6 172.8L966.7 164.4Z" fill="#335a00"/><path d="M921.0 240.7L918.0 247.3L923.1 244.0L926.2 237.3Z" fill="#00541e"/><path d="M500.1 271.8L493.7 269.8L499.3 276.1L505.5 278.0Z" fill="#1e5900"/><path d="M873.1 304.2L870.9 307.6L870.7 308.9L874.7 307.1L877.9 302.1Z" fill="#00434b"/><path d="M559.9 320.5L554.2 319.4L559.2 324.2L564.9 325.2Z" fill="#005232"/><path d="M946.7 197.3L943.6 205.0L949.0 201.0L952.1 193.2Z" fill="#175800"/><path d="M884.3 291.5L881.1 296.9L886.0 294.5L889.2 289.1Z" fill="#004b4d"/><path d="M522.4 291.6L516.3 290.0L521.7 295.6L527.7 297.2Z" fill="#015600"/><path d="M895.5 277.8L892.4 283.5L897.4 280.8L900.5 275.1Z" fill="#004e48"/><path d="M932.3 223.4L929.2 230.5L934.5 226.8L937.6 219.7Z" fill="#005507"/><path d="M610.2 351.8L605.0 351.5L609.7 355.0L614.0 355.3L613.4 354.2Z" fill="#00424a"/><path d="M544.0 309.3L538.1 308.0L543.3 313.2L549.1 314.5Z" fill="#00531e"/><path d="M906.7 263.1L903.6 269.2L908.7 266.2L911.8 260.1Z" fill="#005037"/><path d="M595.4 343.9L590.1 343.3L594.9 347.2L600.2 347.7Z" fill="#004a4c"/><path d="M482.5 256.8L476.0 254.5L481.7 261.2L488.2 263.4Z" fill="#325900"/><path d="M958.1 177.2L955.1 185.3L960.6 181.0L963.6 172.8Z" fill="#2b5800"/><path d="M580.3 335.0L574.8 334.2L579.7 338.5L585.2 339.2Z" fill="#004d47"/><path d="M505.5 278.0L499.3 276.1L504.7 282.2L511.0 284.1Z" fill="#175600"/><path d="M918.0 247.3L914.9 253.8L920.0 250.5L923.1 244.0Z" fill="#005124"/><path d="M943.6 205.0L940.6 212.5L946.0 208.5L949.0 201.0Z" fill="#115500"/><path d="M527.7 297.2L521.7 295.6L526.9 301.2L533.0 302.7Z" fill="#005307"/><path d="M564.9 325.2L559.2 324.2L564.2 328.8L569.9 329.8Z" fill="#004f36"/><path d="M881.1 296.9L877.9 302.1L882.8 299.7L886.0 294.5Z" fill="#004649"/><path d="M929.2 230.5L926.2 237.3L931.4 233.7L934.5 226.8Z" fill="#00520e"/><path d="M892.4 283.5L889.2 289.1L894.2 286.4L897.4 280.8Z" fill="#004b49"/><path d="M488.2 263.4L481.7 261.2L487.3 267.7L493.7 269.8Z" fill="#2a5700"/><path d="M549.1 314.5L543.3 313.2L548.4 318.1L554.2 319.4Z" fill="#005023"/><path d="M903.6 269.2L900.5 275.1L905.5 272.2L908.7 266.2Z" fill="#004d3a"/><path d="M955.1 185.3L952.1 193.2L957.5 188.9L960.6 181.0Z" fill="#235600"/><path d="M511.0 284.1L504.7 282.2L510.1 288.1L516.3 290.0Z" fill="#105400"/><path d="M600.2 347.7L594.9 347.2L599.7 351.0L605.0 351.5Z" fill="#004548"/><path d="M869.7 312.7L871.4 312.0L874.7 307.1L870.7 308.9Z" fill="#003e46"/><path d="M585.2 339.2L579.7 338.5L584.6 342.6L590.1 343.3Z" fill="#004a47"/><path d="M940.6 212.5L937.6 219.7L942.9 215.8L946.0 208.5Z" fill="#0a5300"/><path d="M914.9 253.8L911.8 260.1L916.9 256.9L920.0 250.5Z" fill="#004e28"/><path d="M533.0 302.7L526.9 301.2L532.1 306.5L538.1 308.0Z" fill="#00510e"/><path d="M569.9 329.8L564.2 328.8L569.2 333.2L574.8 334.2Z" fill="#004b39"/><path d="M614.0 355.3L609.7 355.0L614.4 358.4L616.3 358.5Z" fill="#003d45"/><path d="M926.2 237.3L923.1 244.0L928.3 240.5L931.4 233.7Z" fill="#004f14"/><path d="M493.7 269.8L487.3 267.7L492.8 274.0L499.3 276.1Z" fill="#235400"/><path d="M952.1 193.2L949.0 201.0L954.5 196.7L957.5 188.9Z" fill="#1c5400"/><path d="M554.2 319.4L548.4 318.1L553.4 322.9L559.2 324.2Z" fill="#004d27"/><path d="M877.9 302.1L874.7 307.1L879.6 304.7L882.8 299.7Z" fill="#004146"/><path d="M889.2 289.1L886.0 294.5L891.0 291.8L894.2 286.4Z" fill="#004847"/><path d="M516.3 290.0L510.1 288.1L515.4 293.9L521.7 295.6Z" fill="#095100"/><path d="M900.5 275.1L897.4 280.8L902.4 277.9L905.5 272.2Z" fill="#00493c"/><path d="M937.6 219.7L934.5 226.8L939.8 222.9L942.9 215.8Z" fill="#025000"/><path d="M911.8 260.1L908.7 266.2L913.8 263.0L916.9 256.9Z" fill="#004b2c"/><path d="M538.1 308.0L532.1 306.5L537.3 311.7L543.3 313.2Z" fill="#004e14"/><path d="M605.0 351.5L599.7 351.0L604.4 354.5L609.7 355.0Z" fill="#004044"/><path d="M590.1 343.3L584.6 342.6L589.4 346.5L594.9 347.2Z" fill="#004646"/><path d="M499.3 276.1L492.8 274.0L498.3 280.1L504.7 282.2Z" fill="#1c5200"/><path d="M574.8 334.2L569.2 333.2L574.1 337.5L579.7 338.5Z" fill="#00483b"/><path d="M868.5 316.1L871.4 312.0L869.7 312.7Z" fill="#003942"/><path d="M923.1 244.0L920.0 250.5L925.2 247.0L928.3 240.5Z" fill="#004c1a"/><path d="M949.0 201.0L946.0 208.5L951.4 204.3L954.5 196.7Z" fill="#165100"/><path d="M521.7 295.6L515.4 293.9L520.7 299.4L526.9 301.2Z" fill="#024f00"/><path d="M559.2 324.2L553.4 322.9L558.5 327.6L564.2 328.8Z" fill="#004a2b"/><path d="M616.3 358.5L614.4 358.4L618.6 361.3Z" fill="#003841"/><path d="M886.0 294.5L882.8 299.7L887.8 297.1L891.0 291.8Z" fill="#004444"/><path d="M874.7 307.1L871.4 312.0L876.3 309.6L879.6 304.7Z" fill="#003d42"/><path d="M934.5 226.8L931.4 233.7L936.7 229.9L939.8 222.9Z" fill="#004e05"/><path d="M897.4 280.8L894.2 286.4L899.2 283.6L902.4 277.9Z" fill="#00463d"/><path d="M543.3 313.2L537.3 311.7L542.4 316.7L548.4 318.1Z" fill="#004b19"/><path d="M908.7 266.2L905.5 272.2L910.7 269.0L913.8 263.0Z" fill="#00482f"/><path d="M504.7 282.2L498.3 280.1L503.7 286.1L510.1 288.1Z" fill="#165000"/><path d="M594.9 347.2L589.4 346.5L594.2 350.2L599.7 351.0Z" fill="#004243"/><path d="M609.7 355.0L604.4 354.5L609.1 358.0L614.4 358.4Z" fill="#003b41"/><path d="M946.0 208.5L942.9 215.8L948.3 211.6L951.4 204.3Z" fill="#104e00"/><path d="M579.7 338.5L574.1 337.5L579.0 341.6L584.6 342.6Z" fill="#00453c"/><path d="M920.0 250.5L916.9 256.9L922.1 253.4L925.2 247.0Z" fill="#00491e"/><path d="M526.9 301.2L520.7 299.4L526.0 304.8L532.1 306.5Z" fill="#004c05"/><path d="M564.2 328.8L558.5 327.6L563.4 332.1L569.2 333.2Z" fill="#00472e"/><path d="M931.4 233.7L928.3 240.5L933.6 236.7L936.7 229.9Z" fill="#004b0b"/><path d="M871.4 312.0L868.5 316.1L868.4 316.6L873.0 314.4L876.3 309.6Z" fill="#00383e"/><path d="M882.8 299.7L879.6 304.7L884.5 302.2L887.8 297.1Z" fill="#003f40"/><path d="M548.4 318.1L542.4 316.7L547.5 321.5L553.4 322.9Z" fill="#00481d"/><path d="M894.2 286.4L891.0 291.8L896.0 289.0L899.2 283.6Z" fill="#00433e"/><path d="M510.1 288.1L503.7 286.1L509.1 291.8L515.4 293.9Z" fill="#104d00"/><path d="M905.5 272.2L902.4 277.9L907.5 274.8L910.7 269.0Z" fill="#004531"/><path d="M942.9 215.8L939.8 222.9L945.2 218.8L948.3 211.6Z" fill="#0a4c00"/><path d="M614.4 358.4L609.1 358.0L613.8 361.2L618.9 361.7L618.6 361.3Z" fill="#00373d"/><path d="M599.7 351.0L594.2 350.2L599.0 353.9L604.4 354.5Z" fill="#003e3f"/><path d="M916.9 256.9L913.8 263.0L919.0 259.6L922.1 253.4Z" fill="#004622"/><path d="M532.1 306.5L526.0 304.8L531.2 310.0L537.3 311.7Z" fill="#00490b"/><path d="M584.6 342.6L579.0 341.6L583.8 345.6L589.4 346.5Z" fill="#00413d"/><path d="M569.2 333.2L563.4 332.1L568.4 336.4L574.1 337.5Z" fill="#004330"/><path d="M928.3 240.5L925.2 247.0L930.5 243.3L933.6 236.7Z" fill="#004810"/><path d="M515.4 293.9L509.1 291.8L514.4 297.4L520.7 299.4Z" fill="#0a4a00"/><path d="M553.4 322.9L547.5 321.5L552.6 326.2L558.5 327.6Z" fill="#004521"/><path d="M891.0 291.8L887.8 297.1L892.8 294.3L896.0 289.0Z" fill="#003f3d"/><path d="M879.6 304.7L876.3 309.6L881.3 307.1L884.5 302.2Z" fill="#003a3d"/><path d="M939.8 222.9L936.7 229.9L942.1 225.8L945.2 218.8Z" fill="#044900"/><path d="M902.4 277.9L899.2 283.6L904.3 280.5L907.5 274.8Z" fill="#004133"/><path d="M537.3 311.7L531.2 310.0L536.3 315.0L542.4 316.7Z" fill="#004610"/><path d="M913.8 263.0L910.7 269.0L915.8 265.6L919.0 259.6Z" fill="#004325"/><path d="M866.8 320.3L869.7 318.9L873.0 314.4L868.4 316.6Z" fill="#003339"/><path d="M604.4 354.5L599.0 353.9L603.7 357.3L609.1 358.0Z" fill="#00393b"/><path d="M589.4 346.5L583.8 345.6L588.7 349.4L594.2 350.2Z" fill="#003e3c"/><path d="M574.1 337.5L568.4 336.4L573.3 340.5L579.0 341.6Z" fill="#004032"/><path d="M925.2 247.0L922.1 253.4L927.4 249.7L930.5 243.3Z" fill="#004515"/><path d="M520.7 299.4L514.4 297.4L519.7 302.9L526.0 304.8Z" fill="#034800"/><path d="M618.9 361.7L613.8 361.2L618.5 364.3L621.7 364.6Z" fill="#003238"/><path d="M558.5 327.6L552.6 326.2L557.6 330.7L563.4 332.1Z" fill="#004224"/><path d="M936.7 229.9L933.6 236.7L939.0 232.6L942.1 225.8Z" fill="#004602"/><path d="M887.8 297.1L884.5 302.2L889.5 299.4L892.8 294.3Z" fill="#003b3b"/><path d="M899.2 283.6L896.0 289.0L901.1 285.9L904.3 280.5Z" fill="#003e33"/><path d="M542.4 316.7L536.3 315.0L541.4 319.9L547.5 321.5Z" fill="#004314"/><path d="M876.3 309.6L873.0 314.4L878.0 311.8L881.3 307.1Z" fill="#003539"/><path d="M910.7 269.0L907.5 274.8L912.6 271.4L915.8 265.6Z" fill="#004027"/><path d="M594.2 350.2L588.7 349.4L593.5 353.0L599.0 353.9Z" fill="#003a39"/><path d="M922.1 253.4L919.0 259.6L924.2 255.9L927.4 249.7Z" fill="#004218"/><path d="M526.0 304.8L519.7 302.9L524.9 308.1L531.2 310.0Z" fill="#004502"/><path d="M609.1 358.0L603.7 357.3L608.5 360.6L613.8 361.2Z" fill="#003438"/><path d="M579.0 341.6L573.3 340.5L578.2 344.5L583.8 345.6Z" fill="#003c32"/><path d="M563.4 332.1L557.6 330.7L562.5 335.0L568.4 336.4Z" fill="#003e26"/><path d="M933.6 236.7L930.5 243.3L935.8 239.3L939.0 232.6Z" fill="#004308"/><path d="M864.9 324.0L866.4 323.3L869.7 318.9L866.8 320.3Z" fill="#002e34"/><path d="M547.5 321.5L541.4 319.9L546.5 324.6L552.6 326.2Z" fill="#004018"/><path d="M896.0 289.0L892.8 294.3L897.9 291.2L901.1 285.9Z" fill="#003a33"/><path d="M884.5 302.2L881.3 307.1L886.3 304.3L889.5 299.4Z" fill="#003738"/><path d="M907.5 274.8L904.3 280.5L909.4 277.1L912.6 271.4Z" fill="#003c28"/><path d="M621.7 364.6L618.5 364.3L623.2 367.3L624.8 367.4Z" fill="#002d33"/><path d="M873.0 314.4L869.7 318.9L874.6 316.4L878.0 311.8Z" fill="#003135"/><path d="M531.2 310.0L524.9 308.1L530.1 313.2L536.3 315.0Z" fill="#004207"/><path d="M919.0 259.6L915.8 265.6L921.0 262.0L924.2 255.9Z" fill="#003e1b"/><path d="M599.0 353.9L593.5 353.0L598.2 356.4L603.7 357.3Z" fill="#003636"/><path d="M583.8 345.6L578.2 344.5L583.0 348.3L588.7 349.4Z" fill="#003932"/><path d="M613.8 361.2L608.5 360.6L613.2 363.7L618.5 364.3Z" fill="#003034"/><path d="M568.4 336.4L562.5 335.0L567.4 339.2L573.3 340.5Z" fill="#003b28"/><path d="M930.5 243.3L927.4 249.7L932.7 245.7L935.8 239.3Z" fill="#00400c"/><path d="M552.6 326.2L546.5 324.6L551.5 329.1L557.6 330.7Z" fill="#003d1b"/><path d="M892.8 294.3L889.5 299.4L894.6 296.4L897.9 291.2Z" fill="#003632"/><path d="M904.3 280.5L901.1 285.9L906.2 282.6L909.4 277.1Z" fill="#003929"/><path d="M881.3 307.1L878.0 311.8L883.0 309.1L886.3 304.3Z" fill="#003334"/><path d="M536.3 315.0L530.1 313.2L535.2 318.0L541.4 319.9Z" fill="#003f0c"/><path d="M915.8 265.6L912.6 271.4L917.8 267.8L921.0 262.0Z" fill="#003b1e"/><path d="M862.7 327.7L863.0 327.6L866.4 323.3L864.9 324.0Z" fill="#00292f"/><path d="M869.7 318.9L866.4 323.3L871.3 320.9L874.6 316.4Z" fill="#002c31"/><path d="M588.7 349.4L583.0 348.3L587.8 351.9L593.5 353.0Z" fill="#003531"/><path d="M927.4 249.7L924.2 255.9L929.5 252.0L932.7 245.7Z" fill="#003d10"/><path d="M603.7 357.3L598.2 356.4L603.0 359.7L608.5 360.6Z" fill="#003132"/><path d="M573.3 340.5L567.4 339.2L572.3 343.2L578.2 344.5Z" fill="#003828"/><path d="M624.8 367.4L623.2 367.3L627.8 370.1L628.1 370.1Z" fill="#00282e"/><path d="M618.5 364.3L613.2 363.7L617.8 366.7L623.2 367.3Z" fill="#002b2f"/><path d="M557.6 330.7L551.5 329.1L556.5 333.5L562.5 335.0Z" fill="#003a1d"/><path d="M541.4 319.9L535.2 318.0L540.3 322.8L546.5 324.6Z" fill="#003c0f"/><path d="M901.1 285.9L897.9 291.2L903.0 288.0L906.2 282.6Z" fill="#003529"/><path d="M862.2 328.5L863.0 327.6L862.7 327.7Z" fill="#00262c"/><path d="M889.5 299.4L886.3 304.3L891.3 301.3L894.6 296.4Z" fill="#003331"/><path d="M912.6 271.4L909.4 277.1L914.6 273.6L917.8 267.8Z" fill="#00381f"/><path d="M878.0 311.8L874.6 316.4L879.6 313.7L883.0 309.1Z" fill="#002e30"/><path d="M924.2 255.9L921.0 262.0L926.3 258.1L929.5 252.0Z" fill="#003a13"/><path d="M628.1 370.1L627.8 370.1L628.9 370.7Z" fill="#00252b"/><path d="M866.4 323.3L863.0 327.6L867.9 325.1L871.3 320.9Z" fill="#00282c"/><path d="M593.5 353.0L587.8 351.9L592.6 355.4L598.2 356.4Z" fill="#003130"/><path d="M578.2 344.5L572.3 343.2L577.2 347.0L583.0 348.3Z" fill="#003428"/><path d="M608.5 360.6L603.0 359.7L607.7 362.9L613.2 363.7Z" fill="#002d2e"/><path d="M562.5 335.0L556.5 333.5L561.5 337.6L567.4 339.2Z" fill="#00361e"/><path d="M623.2 367.3L617.8 366.7L622.5 369.5L627.8 370.1Z" fill="#00272b"/><path d="M546.5 324.6L540.3 322.8L545.4 327.3L551.5 329.1Z" fill="#003812"/><path d="M897.9 291.2L894.6 296.4L899.7 293.1L903.0 288.0Z" fill="#003229"/><path d="M886.3 304.3L883.0 309.1L888.0 306.1L891.3 301.3Z" fill="#002f2e"/><path d="M909.4 277.1L906.2 282.6L911.4 279.1L914.6 273.6Z" fill="#003420"/><path d="M921.0 262.0L917.8 267.8L923.1 264.0L926.3 258.1Z" fill="#003615"/><path d="M874.6 316.4L871.3 320.9L876.2 318.2L879.6 313.7Z" fill="#002a2b"/><path d="M863.0 327.6L862.2 328.5L860.3 331.3L864.5 329.3L867.9 325.1Z" fill="#002429"/><path d="M583.0 348.3L577.2 347.0L582.0 350.7L587.8 351.9Z" fill="#003028"/><path d="M598.2 356.4L592.6 355.4L597.3 358.7L603.0 359.7Z" fill="#002d2c"/><path d="M567.4 339.2L561.5 337.6L566.4 341.7L572.3 343.2Z" fill="#00331f"/><path d="M613.2 363.7L607.7 362.9L612.4 365.9L617.8 366.7Z" fill="#00282a"/><path d="M627.8 370.1L622.5 369.5L627.1 372.1L631.6 372.6L628.9 370.7Z" fill="#002327"/><path d="M551.5 329.1L545.4 327.3L550.4 331.7L556.5 333.5Z" fill="#003515"/><path d="M894.6 296.4L891.3 301.3L896.4 298.1L899.7 293.1Z" fill="#002e27"/><path d="M906.2 282.6L903.0 288.0L908.1 284.5L911.4 279.1Z" fill="#003120"/><path d="M883.0 309.1L879.6 313.7L884.6 310.8L888.0 306.1Z" fill="#002b2a"/><path d="M917.8 267.8L914.6 273.6L919.9 269.7L923.1 264.0Z" fill="#003317"/><path d="M871.3 320.9L867.9 325.1L872.8 322.5L876.2 318.2Z" fill="#002527"/><path d="M587.8 351.9L582.0 350.7L586.8 354.2L592.6 355.4Z" fill="#002c26"/><path d="M572.3 343.2L566.4 341.7L571.3 345.5L577.2 347.0Z" fill="#002f1f"/><path d="M603.0 359.7L597.3 358.7L602.1 361.9L607.7 362.9Z" fill="#002929"/><path d="M556.5 333.5L550.4 331.7L555.4 335.9L561.5 337.6Z" fill="#003216"/><path d="M617.8 366.7L612.4 365.9L617.0 368.7L622.5 369.5Z" fill="#002426"/><path d="M857.6 334.9L861.0 333.2L864.5 329.3L860.3 331.3Z" fill="#001f23"/><path d="M903.0 288.0L899.7 293.1L904.9 289.6L908.1 284.5Z" fill="#002d20"/><path d="M891.3 301.3L888.0 306.1L893.1 303.0L896.4 298.1Z" fill="#002a26"/><path d="M914.6 273.6L911.4 279.1L916.6 275.3L919.9 269.7Z" fill="#003018"/><path d="M879.6 313.7L876.2 318.2L881.2 315.3L884.6 310.8Z" fill="#002626"/><path d="M631.6 372.6L627.1 372.1L631.7 374.6L635.4 375.0Z" fill="#001e22"/><path d="M577.2 347.0L571.3 345.5L576.1 349.2L582.0 350.7Z" fill="#002b1f"/><path d="M592.6 355.4L586.8 354.2L591.6 357.5L597.3 358.7Z" fill="#002925"/><path d="M867.9 325.1L864.5 329.3L869.4 326.6L872.8 322.5Z" fill="#002123"/><path d="M561.5 337.6L555.4 335.9L560.3 340.0L566.4 341.7Z" fill="#002e17"/><path d="M607.7 362.9L602.1 361.9L606.8 364.9L612.4 365.9Z" fill="#002525"/><path d="M622.5 369.5L617.0 368.7L621.7 371.3L627.1 372.1Z" fill="#002022"/><path d="M899.7 293.1L896.4 298.1L901.5 294.7L904.9 289.6Z" fill="#00291f"/><path d="M911.4 279.1L908.1 284.5L913.4 280.7L916.6 275.3Z" fill="#002c18"/><path d="M888.0 306.1L884.6 310.8L889.7 307.6L893.1 303.0Z" fill="#002623"/><path d="M854.6 338.4L857.5 337.0L861.0 333.2L857.6 334.9Z" fill="#001b1e"/><path d="M876.2 318.2L872.8 322.5L877.8 319.6L881.2 315.3Z" fill="#002222"/><path d="M582.0 350.7L576.1 349.2L580.9 352.7L586.8 354.2Z" fill="#00281e"/><path d="M566.4 341.7L560.3 340.0L565.2 343.8L571.3 345.5Z" fill="#002b17"/><path d="M597.3 358.7L591.6 357.5L596.3 360.7L602.1 361.9Z" fill="#002522"/><path d="M635.4 375.0L631.7 374.6L636.3 376.9L639.4 377.2Z" fill="#001a1d"/><path d="M864.5 329.3L861.0 333.2L865.9 330.6L869.4 326.6Z" fill="#001c1e"/><path d="M612.4 365.9L606.8 364.9L611.4 367.7L617.0 368.7Z" fill="#002121"/><path d="M627.1 372.1L621.7 371.3L626.3 373.8L631.7 374.6Z" fill="#001b1d"/><path d="M908.1 284.5L904.9 289.6L910.1 285.9L913.4 280.7Z" fill="#002818"/><path d="M896.4 298.1L893.1 303.0L898.2 299.5L901.5 294.7Z" fill="#00251d"/><path d="M884.6 310.8L881.2 315.3L886.3 312.1L889.7 307.6Z" fill="#002220"/><path d="M571.3 345.5L565.2 343.8L570.1 347.6L576.1 349.2Z" fill="#002717"/><path d="M586.8 354.2L580.9 352.7L585.7 356.1L591.6 357.5Z" fill="#00241c"/><path d="M872.8 322.5L869.4 326.6L874.4 323.7L877.8 319.6Z" fill="#001d1e"/><path d="M602.1 361.9L596.3 360.7L601.0 363.7L606.8 364.9Z" fill="#00201f"/><path d="M851.4 341.8L853.9 340.6L857.5 337.0L854.6 338.4Z" fill="#001619"/><path d="M617.0 368.7L611.4 367.7L616.1 370.4L621.7 371.3Z" fill="#001c1d"/><path d="M639.4 377.2L636.3 376.9L640.9 379.0L643.6 379.3Z" fill="#001518"/><path d="M861.0 333.2L857.5 337.0L862.4 334.4L865.9 330.6Z" fill="#00181a"/><path d="M904.9 289.6L901.5 294.7L906.7 291.0L910.1 285.9Z" fill="#002417"/><path d="M893.1 303.0L889.7 307.6L894.8 304.2L898.2 299.5Z" fill="#00211b"/><path d="M631.7 374.6L626.3 373.8L630.9 376.1L636.3 376.9Z" fill="#001719"/><path d="M881.2 315.3L877.8 319.6L882.9 316.5L886.3 312.1Z" fill="#001d1d"/><path d="M576.1 349.2L570.1 347.6L574.9 351.1L580.9 352.7Z" fill="#002316"/><path d="M591.6 357.5L585.7 356.1L590.5 359.3L596.3 360.7Z" fill="#00201a"/><path d="M869.4 326.6L865.9 330.6L870.9 327.7L874.4 323.7Z" fill="#001919"/><path d="M606.8 364.9L601.0 363.7L605.7 366.5L611.4 367.7Z" fill="#001c1b"/><path d="M847.9 345.3L850.3 344.1L853.9 340.6L851.4 341.8Z" fill="#001214"/><path d="M621.7 371.3L616.1 370.4L620.7 372.9L626.3 373.8Z" fill="#001818"/><path d="M901.5 294.7L898.2 299.5L903.4 295.9L906.7 291.0Z" fill="#002016"/><path d="M857.5 337.0L853.9 340.6L858.8 338.0L862.4 334.4Z" fill="#001415"/><path d="M643.6 379.3L640.9 379.0L645.5 381.0L648.1 381.3Z" fill="#001113"/><path d="M889.7 307.6L886.3 312.1L891.4 308.7L894.8 304.2Z" fill="#001d19"/><path d="M636.3 376.9L630.9 376.1L635.5 378.3L640.9 379.0Z" fill="#001314"/><path d="M877.8 319.6L874.4 323.7L879.4 320.6L882.9 316.5Z" fill="#001919"/><path d="M580.9 352.7L574.9 351.1L579.7 354.5L585.7 356.1Z" fill="#001f15"/><path d="M596.3 360.7L590.5 359.3L595.2 362.3L601.0 363.7Z" fill="#001c18"/><path d="M611.4 367.7L605.7 366.5L610.4 369.2L616.1 370.4Z" fill="#001817"/><path d="M865.9 330.6L862.4 334.4L867.4 331.5L870.9 327.7Z" fill="#001415"/><path d="M626.3 373.8L620.7 372.9L625.3 375.2L630.9 376.1Z" fill="#001314"/><path d="M898.2 299.5L894.8 304.2L900.0 300.6L903.4 295.9Z" fill="#001c14"/><path d="M844.2 348.6L846.7 347.4L850.3 344.1L847.9 345.3Z" fill="#000e0f"/><path d="M886.3 312.1L882.9 316.5L888.0 313.1L891.4 308.7Z" fill="#001916"/><path d="M853.9 340.6L850.3 344.1L855.2 341.5L858.8 338.0Z" fill="#000f11"/><path d="M648.1 381.3L645.5 381.0L650.0 382.8L652.7 383.1Z" fill="#000d0f"/><path d="M585.7 356.1L579.7 354.5L584.5 357.7L590.5 359.3Z" fill="#001b13"/><path d="M640.9 379.0L635.5 378.3L640.1 380.3L645.5 381.0Z" fill="#000e10"/><path d="M874.4 323.7L870.9 327.7L875.9 324.6L879.4 320.6Z" fill="#001514"/><path d="M601.0 363.7L595.2 362.3L599.9 365.2L605.7 366.5Z" fill="#001715"/><path d="M616.1 370.4L610.4 369.2L615.1 371.7L620.7 372.9Z" fill="#001313"/><path d="M862.4 334.4L858.8 338.0L863.8 335.2L867.4 331.5Z" fill="#001010"/><path d="M894.8 304.2L891.4 308.7L896.6 305.1L900.0 300.6Z" fill="#001812"/><path d="M630.9 376.1L625.3 375.2L629.9 377.4L635.5 378.3Z" fill="#000f0f"/><path d="M840.2 351.9L843.0 350.5L846.7 347.4L844.2 348.6Z" fill="#00090b"/><path d="M882.9 316.5L879.4 320.6L884.5 317.3L888.0 313.1Z" fill="#001412"/><path d="M590.5 359.3L584.5 357.7L589.2 360.7L595.2 362.3Z" fill="#001711"/><path d="M850.3 344.1L846.7 347.4L851.6 344.8L855.2 341.5Z" fill="#000b0c"/><path d="M652.7 383.1L650.0 382.8L654.6 384.5L657.6 384.8Z" fill="#00090a"/><path d="M605.7 366.5L599.9 365.2L604.6 367.9L610.4 369.2Z" fill="#001311"/><path d="M870.9 327.7L867.4 331.5L872.4 328.5L875.9 324.6Z" fill="#001010"/><path d="M645.5 381.0L640.1 380.3L644.6 382.1L650.0 382.8Z" fill="#000a0b"/><path d="M620.7 372.9L615.1 371.7L619.7 374.1L625.3 375.2Z" fill="#000f0f"/><path d="M858.8 338.0L855.2 341.5L860.2 338.7L863.8 335.2Z" fill="#000b0b"/><path d="M891.4 308.7L888.0 313.1L893.2 309.5L896.6 305.1Z" fill="#00140f"/><path d="M635.5 378.3L629.9 377.4L634.5 379.4L640.1 380.3Z" fill="#000a0a"/><path d="M879.4 320.6L875.9 324.6L881.0 321.3L884.5 317.3Z" fill="#00100f"/><path d="M835.9 355.1L839.3 353.5L843.0 350.5L840.2 351.9Z" fill="#000506"/><path d="M595.2 362.3L589.2 360.7L593.9 363.6L599.9 365.2Z" fill="#00130e"/><path d="M657.6 384.8L654.6 384.5L659.1 386.0L662.7 386.3Z" fill="#000405"/><path d="M846.7 347.4L843.0 350.5L847.9 348.0L851.6 344.8Z" fill="#000607"/><path d="M610.4 369.2L604.6 367.9L609.2 370.4L615.1 371.7Z" fill="#000f0d"/><path d="M867.4 331.5L863.8 335.2L868.8 332.1L872.4 328.5Z" fill="#000b0b"/><path d="M650.0 382.8L644.6 382.1L649.2 383.8L654.6 384.5Z" fill="#000506"/><path d="M625.3 375.2L619.7 374.1L624.3 376.3L629.9 377.4Z" fill="#000a0a"/><path d="M888.0 313.1L884.5 317.3L889.7 313.7L893.2 309.5Z" fill="#00100c"/><path d="M855.2 341.5L851.6 344.8L856.5 342.0L860.2 338.7Z" fill="#000606"/><path d="M875.9 324.6L872.4 328.5L877.5 325.2L881.0 321.3Z" fill="#000b0a"/><path d="M599.9 365.2L593.9 363.6L598.6 366.3L604.6 367.9Z" fill="#000e0b"/><path d="M640.1 380.3L634.5 379.4L639.1 381.2L644.6 382.1Z" fill="#000505"/><path d="M831.4 358.3L835.5 356.3L839.3 353.5L835.9 355.1Z" fill="#000000"/><path d="M662.7 386.3L659.1 386.0L663.6 387.3L668.1 387.7Z" fill="#000101"/><path d="M615.1 371.7L609.2 370.4L613.9 372.8L619.7 374.1Z" fill="#000a09"/><path d="M843.0 350.5L839.3 353.5L844.2 351.0L847.9 348.0Z" fill="#000101"/><path d="M863.8 335.2L860.2 338.7L865.2 335.7L868.8 332.1Z" fill="#000606"/><path d="M654.6 384.5L649.2 383.8L653.7 385.3L659.1 386.0Z" fill="#000000"/><path d="M629.9 377.4L624.3 376.3L628.9 378.3L634.5 379.4Z" fill="#000505"/><path d="M884.5 317.3L881.0 321.3L886.2 317.8L889.7 313.7Z" fill="#000b09"/><path d="M826.6 361.4L826.8 361.3L827.7 360.7Z" fill="#000405"/><path d="M672.4 388.7L673.4 388.9L673.7 388.9Z" fill="#000505"/><path d="M851.6 344.8L847.9 348.0L852.8 345.2L856.5 342.0Z" fill="#000101"/><path d="M604.6 367.9L598.6 366.3L603.3 368.9L609.2 370.4Z" fill="#000a08"/><path d="M827.7 360.7L826.8 361.3L831.7 359.0L835.5 356.3L831.4 358.3Z" fill="#000405"/><path d="M872.4 328.5L868.8 332.1L873.9 328.9L877.5 325.2Z" fill="#000606"/><path d="M644.6 382.1L639.1 381.2L643.7 382.9L649.2 383.8Z" fill="#000000"/><path d="M668.1 387.7L663.6 387.3L668.2 388.4L673.4 388.9L672.4 388.7Z" fill="#000506"/><path d="M619.7 374.1L613.9 372.8L618.5 374.9L624.3 376.3Z" fill="#000505"/><path d="M821.5 364.4L822.9 363.8L826.8 361.3L826.6 361.4Z" fill="#000607"/><path d="M673.7 388.9L673.4 388.9L677.9 389.9L679.5 390.0Z" fill="#000708"/><path d="M860.2 338.7L856.5 342.0L861.5 339.0L865.2 335.7Z" fill="#000101"/><path d="M839.3 353.5L835.5 356.3L840.4 353.8L844.2 351.0Z" fill="#000505"/><path d="M659.1 386.0L653.7 385.3L658.3 386.6L663.6 387.3Z" fill="#000506"/><path d="M634.5 379.4L628.9 378.3L633.5 380.1L639.1 381.2Z" fill="#000000"/><path d="M881.0 321.3L877.5 325.2L882.6 321.6L886.2 317.8Z" fill="#000605"/><path d="M609.2 370.4L603.3 368.9L608.0 371.2L613.9 372.8Z" fill="#000504"/><path d="M847.9 348.0L844.2 351.0L849.1 348.2L852.8 345.2Z" fill="#000505"/><path d="M868.8 332.1L865.2 335.7L870.3 332.4L873.9 328.9Z" fill="#000101"/><path d="M649.2 383.8L643.7 382.9L648.2 384.4L653.7 385.3Z" fill="#000606"/><path d="M826.8 361.3L822.9 363.8L827.8 361.5L831.7 359.0Z" fill="#00090a"/><path d="M816.1 367.4L819.0 366.1L822.9 363.8L821.5 364.4Z" fill="#000a0c"/><path d="M624.3 376.3L618.5 374.9L623.1 377.0L628.9 378.3Z" fill="#000000"/><path d="M673.4 388.9L668.2 388.4L672.7 389.4L677.9 389.9Z" fill="#000a0b"/><path d="M679.5 390.0L677.9 389.9L682.4 390.7L685.5 390.9Z" fill="#000b0c"/><path d="M856.5 342.0L852.8 345.2L857.8 342.2L861.5 339.0Z" fill="#000505"/><path d="M835.5 356.3L831.7 359.0L836.5 356.5L840.4 353.8Z" fill="#00090a"/><path d="M877.5 325.2L873.9 328.9L879.0 325.3L882.6 321.6Z" fill="#000101"/><path d="M639.1 381.2L633.5 380.1L638.1 381.8L643.7 382.9Z" fill="#000606"/><path d="M663.6 387.3L658.3 386.6L662.8 387.7L668.2 388.4Z" fill="#000a0b"/><path d="M613.9 372.8L608.0 371.2L612.6 373.4L618.5 374.9Z" fill="#000000"/><path d="M865.2 335.7L861.5 339.0L866.6 335.7L870.3 332.4Z" fill="#000504"/><path d="M844.2 351.0L840.4 353.8L845.3 351.0L849.1 348.2Z" fill="#000a0a"/><path d="M810.4 370.3L815.0 368.3L819.0 366.1L816.1 367.4Z" fill="#000e10"/><path d="M653.7 385.3L648.2 384.4L652.8 385.7L658.3 386.6Z" fill="#000a0b"/><path d="M628.9 378.3L623.1 377.0L627.7 378.8L633.5 380.1Z" fill="#000605"/><path d="M685.5 390.9L682.4 390.7L686.9 391.3L691.8 391.6Z" fill="#000f10"/><path d="M822.9 363.8L819.0 366.1L823.8 363.8L827.8 361.5Z" fill="#000e0f"/><path d="M677.9 389.9L672.7 389.4L677.2 390.2L682.4 390.7Z" fill="#000f10"/><path d="M804.4 373.0L806.2 372.3L809.8 370.6Z" fill="#001012"/><path d="M852.8 345.2L849.1 348.2L854.1 345.2L857.8 342.2Z" fill="#000a0a"/><path d="M692.6 391.6L696.6 392.0L698.4 392.1Z" fill="#001013"/><path d="M873.9 328.9L870.3 332.4L875.4 328.9L879.0 325.3Z" fill="#000404"/><path d="M831.7 359.0L827.8 361.5L832.6 359.0L836.5 356.5Z" fill="#000e0f"/><path d="M643.7 382.9L638.1 381.8L642.6 383.3L648.2 384.4Z" fill="#000b0b"/><path d="M618.5 374.9L612.6 373.4L617.2 375.5L623.1 377.0Z" fill="#000605"/><path d="M668.2 388.4L662.8 387.7L667.3 388.7L672.7 389.4Z" fill="#000f10"/><path d="M809.8 370.6L806.2 372.3L810.9 370.2L815.0 368.3L810.4 370.3Z" fill="#001113"/><path d="M861.5 339.0L857.8 342.2L862.9 338.9L866.6 335.7Z" fill="#000a09"/><path d="M691.8 391.6L686.9 391.3L691.5 391.7L696.6 392.0L692.6 391.6Z" fill="#001214"/><path d="M840.4 353.8L836.5 356.5L841.5 353.7L845.3 351.0Z" fill="#000e0f"/><path d="M798.1 375.7L802.0 374.1L806.2 372.3L804.4 373.0Z" fill="#001315"/><path d="M633.5 380.1L627.7 378.8L632.3 380.5L638.1 381.8Z" fill="#000b0a"/><path d="M698.4 392.1L696.6 392.0L701.1 392.3L705.3 392.4Z" fill="#001316"/><path d="M658.3 386.6L652.8 385.7L657.3 386.9L662.8 387.7Z" fill="#000f10"/><path d="M819.0 366.1L815.0 368.3L819.8 366.0L823.8 363.8Z" fill="#001214"/><path d="M791.4 378.3L793.1 377.7L795.9 376.6Z" fill="#001417"/><path d="M849.1 348.2L845.3 351.0L850.3 348.0L854.1 345.2Z" fill="#000e0e"/><path d="M870.3 332.4L866.6 335.7L871.7 332.2L875.4 328.9Z" fill="#000908"/><path d="M682.4 390.7L677.2 390.2L681.7 390.8L686.9 391.3Z" fill="#001314"/><path d="M707.6 392.4L710.6 392.5L712.4 392.5Z" fill="#001518"/><path d="M648.2 384.4L642.6 383.3L647.2 384.6L652.8 385.7Z" fill="#000f0f"/><path d="M827.8 361.5L823.8 363.8L828.7 361.3L832.6 359.0Z" fill="#001314"/><path d="M623.1 377.0L617.2 375.5L621.8 377.3L627.7 378.8Z" fill="#000a09"/><path d="M672.7 389.4L667.3 388.7L671.8 389.5L677.2 390.2Z" fill="#001314"/><path d="M795.9 376.6L793.1 377.7L797.8 375.8L802.0 374.1L798.1 375.7Z" fill="#001618"/><path d="M705.3 392.4L701.1 392.3L705.6 392.4L710.6 392.5L707.6 392.4Z" fill="#001619"/><path d="M857.8 342.2L854.1 345.2L859.1 341.9L862.9 338.9Z" fill="#000e0d"/><path d="M784.4 380.7L788.9 379.1L793.1 377.7L791.4 378.3Z" fill="#00171a"/><path d="M836.5 356.5L832.6 359.0L837.6 356.2L841.5 353.7Z" fill="#001313"/><path d="M712.4 392.5L710.6 392.5L715.2 392.4L719.8 392.3Z" fill="#00171a"/><path d="M638.1 381.8L632.3 380.5L636.9 382.0L642.6 383.3Z" fill="#000f0e"/><path d="M806.2 372.3L802.0 374.1L806.8 372.1L810.9 370.2Z" fill="#001719"/><path d="M662.8 387.7L657.3 386.9L661.8 387.8L667.3 388.7Z" fill="#001414"/><path d="M776.9 383.0L779.8 382.1L783.8 380.9Z" fill="#00181b"/><path d="M696.6 392.0L691.5 391.7L696.0 392.0L701.1 392.3Z" fill="#001719"/><path d="M720.4 392.3L724.6 392.0L727.6 391.9Z" fill="#00181c"/><path d="M866.6 335.7L862.9 338.9L868.0 335.4L871.7 332.2Z" fill="#000e0c"/><path d="M769.0 385.1L770.8 384.7L772.9 384.1Z" fill="#00191d"/><path d="M815.0 368.3L810.9 370.2L815.7 368.0L819.8 366.0Z" fill="#001718"/><path d="M731.8 391.5L734.0 391.3L735.8 391.1Z" fill="#00191d"/><path d="M845.3 351.0L841.5 353.7L846.4 350.7L850.3 348.0Z" fill="#001313"/><path d="M760.7 387.1L761.7 386.9L762.8 386.6Z" fill="#00191d"/><path d="M742.2 390.3L743.3 390.2L744.3 390.0Z" fill="#00191d"/><path d="M686.9 391.3L681.7 390.8L686.2 391.2L691.5 391.7Z" fill="#001819"/><path d="M751.8 388.9L752.5 388.7L753.3 388.6Z" fill="#001a1d"/><path d="M627.7 378.8L621.8 377.3L626.4 379.0L632.3 380.5Z" fill="#000f0c"/><path d="M652.8 385.7L647.2 384.6L651.7 385.8L657.3 386.9Z" fill="#001414"/><path d="M783.8 380.9L779.8 382.1L784.5 380.4L788.9 379.1L784.4 380.7Z" fill="#001a1d"/><path d="M823.8 363.8L819.8 366.0L824.7 363.4L828.7 361.3Z" fill="#001718"/><path d="M719.8 392.3L715.2 392.4L719.7 392.1L724.6 392.0L720.4 392.3Z" fill="#001a1d"/><path d="M772.9 384.1L770.8 384.7L775.4 383.2L779.8 382.1L776.9 383.0Z" fill="#001a1e"/><path d="M727.6 391.9L724.6 392.0L729.2 391.5L734.0 391.3L731.8 391.5Z" fill="#001b1e"/><path d="M762.8 386.6L761.7 386.9L766.3 385.6L770.8 384.7L769.0 385.1Z" fill="#001b1e"/><path d="M735.8 391.1L734.0 391.3L738.6 390.6L743.3 390.2L742.2 390.3Z" fill="#001b1e"/><path d="M753.3 388.6L752.5 388.7L757.1 387.7L761.7 386.9L760.7 387.1Z" fill="#001b1e"/><path d="M744.3 390.0L743.3 390.2L747.9 389.3L752.5 388.7L751.8 388.9Z" fill="#001b1e"/><path d="M677.2 390.2L671.8 389.5L676.4 390.1L681.7 390.8Z" fill="#001819"/><path d="M854.1 345.2L850.3 348.0L855.3 344.8L859.1 341.9Z" fill="#001311"/><path d="M642.6 383.3L636.9 382.0L641.4 383.3L647.2 384.6Z" fill="#001412"/><path d="M832.6 359.0L828.7 361.3L833.6 358.5L837.6 356.2Z" fill="#001818"/><path d="M793.1 377.7L788.9 379.1L793.6 377.3L797.8 375.8Z" fill="#001b1d"/><path d="M710.6 392.5L705.6 392.4L710.2 392.3L715.2 392.4Z" fill="#001b1e"/><path d="M667.3 388.7L661.8 387.8L666.4 388.6L671.8 389.5Z" fill="#001819"/><path d="M802.0 374.1L797.8 375.8L802.6 373.7L806.8 372.1Z" fill="#001b1d"/><path d="M862.9 338.9L859.1 341.9L864.2 338.5L868.0 335.4Z" fill="#00120f"/><path d="M701.1 392.3L696.0 392.0L700.5 392.1L705.6 392.4Z" fill="#001c1e"/><path d="M841.5 353.7L837.6 356.2L842.5 353.2L846.4 350.7Z" fill="#001817"/><path d="M810.9 370.2L806.8 372.1L811.6 369.8L815.7 368.0Z" fill="#001c1d"/><path d="M632.3 380.5L626.4 379.0L631.0 380.5L636.9 382.0Z" fill="#001310"/><path d="M657.3 386.9L651.7 385.8L656.2 386.8L661.8 387.8Z" fill="#001818"/><path d="M691.5 391.7L686.2 391.2L690.8 391.5L696.0 392.0Z" fill="#001c1d"/><path d="M819.8 366.0L815.7 368.0L820.6 365.4L824.7 363.4Z" fill="#001c1d"/><path d="M850.3 348.0L846.4 350.7L851.5 347.5L855.3 344.8Z" fill="#001715"/><path d="M681.7 390.8L676.4 390.1L680.9 390.6L686.2 391.2Z" fill="#001d1d"/><path d="M752.5 388.7L747.9 389.3L752.5 388.3L757.1 387.7Z" fill="#001f22"/><path d="M761.7 386.9L757.1 387.7L761.8 386.4L766.3 385.6Z" fill="#001f22"/><path d="M743.3 390.2L738.6 390.6L743.1 389.7L747.9 389.3Z" fill="#001f22"/><path d="M770.8 384.7L766.3 385.6L771.0 384.2L775.4 383.2Z" fill="#001f22"/><path d="M647.2 384.6L641.4 383.3L646.0 384.5L651.7 385.8Z" fill="#001816"/><path d="M734.0 391.3L729.2 391.5L733.7 390.9L738.6 390.6Z" fill="#001f22"/><path d="M779.8 382.1L775.4 383.2L780.1 381.6L784.5 380.4Z" fill="#001f22"/><path d="M828.7 361.3L824.7 363.4L829.6 360.7L833.6 358.5Z" fill="#001c1c"/><path d="M724.6 392.0L719.7 392.1L724.3 391.6L729.2 391.5Z" fill="#002022"/><path d="M788.9 379.1L784.5 380.4L789.3 378.6L793.6 377.3Z" fill="#002022"/><path d="M671.8 389.5L666.4 388.6L670.9 389.3L676.4 390.1Z" fill="#001d1d"/><path d="M715.2 392.4L710.2 392.3L714.7 392.0L719.7 392.1Z" fill="#002022"/><path d="M859.1 341.9L855.3 344.8L860.4 341.3L864.2 338.5Z" fill="#001712"/><path d="M797.8 375.8L793.6 377.3L798.4 375.2L802.6 373.7Z" fill="#002021"/><path d="M837.6 356.2L833.6 358.5L838.6 355.6L842.5 353.2Z" fill="#001c1b"/><path d="M705.6 392.4L700.5 392.1L705.0 392.0L710.2 392.3Z" fill="#002022"/><path d="M636.9 382.0L631.0 380.5L635.6 381.9L641.4 383.3Z" fill="#001813"/><path d="M661.8 387.8L656.2 386.8L660.8 387.6L666.4 388.6Z" fill="#001d1b"/><path d="M806.8 372.1L802.6 373.7L807.4 371.4L811.6 369.8Z" fill="#002021"/><path d="M696.0 392.0L690.8 391.5L695.3 391.6L700.5 392.1Z" fill="#002122"/><path d="M846.4 350.7L842.5 353.2L847.5 350.0L851.5 347.5Z" fill="#001b18"/><path d="M815.7 368.0L811.6 369.8L816.5 367.2L820.6 365.4Z" fill="#002121"/><path d="M686.2 391.2L680.9 390.6L685.4 390.8L690.8 391.5Z" fill="#002121"/><path d="M651.7 385.8L646.0 384.5L650.5 385.5L656.2 386.8Z" fill="#001c19"/><path d="M824.7 363.4L820.6 365.4L825.5 362.7L829.6 360.7Z" fill="#002020"/><path d="M757.1 387.7L752.5 388.3L757.1 387.0L761.8 386.4Z" fill="#002426"/><path d="M747.9 389.3L743.1 389.7L747.8 388.7L752.5 388.3Z" fill="#002426"/><path d="M766.3 385.6L761.8 386.4L766.4 384.9L771.0 384.2Z" fill="#002426"/><path d="M738.6 390.6L733.7 390.9L738.3 390.0L743.1 389.7Z" fill="#002426"/><path d="M855.3 344.8L851.5 347.5L856.5 344.0L860.4 341.3Z" fill="#001b15"/><path d="M775.4 383.2L771.0 384.2L775.7 382.5L780.1 381.6Z" fill="#002426"/><path d="M676.4 390.1L670.9 389.3L675.4 389.7L680.9 390.6Z" fill="#002120"/><path d="M729.2 391.5L724.3 391.6L728.8 390.9L733.7 390.9Z" fill="#002426"/><path d="M784.5 380.4L780.1 381.6L784.9 379.7L789.3 378.6Z" fill="#002426"/><path d="M719.7 392.1L714.7 392.0L719.3 391.5L724.3 391.6Z" fill="#002526"/><path d="M641.4 383.3L635.6 381.9L640.1 383.0L646.0 384.5Z" fill="#001c16"/><path d="M833.6 358.5L829.6 360.7L834.5 357.7L838.6 355.6Z" fill="#00201e"/><path d="M793.6 377.3L789.3 378.6L794.0 376.5L798.4 375.2Z" fill="#002526"/><path d="M710.2 392.3L705.0 392.0L709.6 391.7L714.7 392.0Z" fill="#002526"/><path d="M666.4 388.6L660.8 387.6L665.3 388.2L670.9 389.3Z" fill="#00211f"/><path d="M802.6 373.7L798.4 375.2L803.2 372.9L807.4 371.4Z" fill="#002525"/><path d="M700.5 392.1L695.3 391.6L699.8 391.5L705.0 392.0Z" fill="#002526"/><path d="M842.5 353.2L838.6 355.6L843.6 352.3L847.5 350.0Z" fill="#00201b"/><path d="M811.6 369.8L807.4 371.4L812.3 368.9L816.5 367.2Z" fill="#002524"/><path d="M656.2 386.8L650.5 385.5L655.1 386.3L660.8 387.6Z" fill="#00201c"/><path d="M690.8 391.5L685.4 390.8L689.9 390.9L695.3 391.6Z" fill="#002525"/><path d="M820.6 365.4L816.5 367.2L821.4 364.5L825.5 362.7Z" fill="#002523"/><path d="M851.5 347.5L847.5 350.0L852.6 346.5L856.5 344.0Z" fill="#001f18"/><path d="M680.9 390.6L675.4 389.7L680.0 389.9L685.4 390.8Z" fill="#002524"/><path d="M752.5 388.3L747.8 388.7L752.4 387.4L757.1 387.0Z" fill="#00292a"/><path d="M761.8 386.4L757.1 387.0L761.8 385.5L766.4 384.9Z" fill="#00292a"/><path d="M646.0 384.5L640.1 383.0L644.7 384.0L650.5 385.5Z" fill="#002019"/><path d="M743.1 389.7L738.3 390.0L742.9 388.9L747.8 388.7Z" fill="#00292a"/><path d="M771.0 384.2L766.4 384.9L771.1 383.3L775.7 382.5Z" fill="#00292a"/><path d="M733.7 390.9L728.8 390.9L733.4 390.0L738.3 390.0Z" fill="#00292a"/><path d="M829.6 360.7L825.5 362.7L830.5 359.7L834.5 357.7Z" fill="#002421"/><path d="M780.1 381.6L775.7 382.5L780.4 380.6L784.9 379.7Z" fill="#00292a"/><path d="M724.3 391.6L719.3 391.5L723.8 390.8L728.8 390.9Z" fill="#00292a"/><path d="M670.9 389.3L665.3 388.2L669.8 388.6L675.4 389.7Z" fill="#002521"/><path d="M789.3 378.6L784.9 379.7L789.6 377.6L794.0 376.5Z" fill="#00292a"/><path d="M714.7 392.0L709.6 391.7L714.1 391.2L719.3 391.5Z" fill="#002a2a"/><path d="M798.4 375.2L794.0 376.5L798.8 374.2L803.2 372.9Z" fill="#002929"/><path d="M838.6 355.6L834.5 357.7L839.5 354.5L843.6 352.3Z" fill="#00241e"/><path d="M705.0 392.0L699.8 391.5L704.4 391.2L709.6 391.7Z" fill="#002a29"/><path d="M660.8 387.6L655.1 386.3L659.6 386.9L665.3 388.2Z" fill="#00241e"/><path d="M807.4 371.4L803.2 372.9L808.0 370.4L812.3 368.9Z" fill="#002928"/><path d="M695.3 391.6L689.9 390.9L694.5 390.8L699.8 391.5Z" fill="#002928"/><path d="M847.5 350.0L843.6 352.3L848.6 348.9L852.6 346.5Z" fill="#00231a"/><path d="M816.5 367.2L812.3 368.9L817.2 366.1L821.4 364.5Z" fill="#002926"/><path d="M650.5 385.5L644.7 384.0L649.2 384.8L655.1 386.3Z" fill="#00241b"/><path d="M685.4 390.8L680.0 389.9L684.5 390.0L689.9 390.9Z" fill="#002926"/><path d="M825.5 362.7L821.4 364.5L826.3 361.5L830.5 359.7Z" fill="#002823"/><path d="M757.1 387.0L752.4 387.4L757.0 386.0L761.8 385.5Z" fill="#002e2e"/><path d="M747.8 388.7L742.9 388.9L747.6 387.7L752.4 387.4Z" fill="#002e2e"/><path d="M766.4 384.9L761.8 385.5L766.4 383.9L771.1 383.3Z" fill="#002e2e"/><path d="M738.3 390.0L733.4 390.0L738.0 389.0L742.9 388.9Z" fill="#002e2e"/><path d="M675.4 389.7L669.8 388.6L674.4 388.9L680.0 389.9Z" fill="#002923"/><path d="M775.7 382.5L771.1 383.3L775.8 381.4L780.4 380.6Z" fill="#002e2d"/><path d="M728.8 390.9L723.8 390.8L728.4 389.9L733.4 390.0Z" fill="#002e2d"/><path d="M784.9 379.7L780.4 380.6L785.1 378.5L789.6 377.6Z" fill="#002d2c"/><path d="M719.3 391.5L714.1 391.2L718.7 390.5L723.8 390.8Z" fill="#002e2d"/><path d="M834.5 357.7L830.5 359.7L835.5 356.5L839.5 354.5Z" fill="#00281f"/><path d="M794.0 376.5L789.6 377.6L794.4 375.3L798.8 374.2Z" fill="#002d2c"/><path d="M665.3 388.2L659.6 386.9L664.1 387.3L669.8 388.6Z" fill="#002820"/><path d="M709.6 391.7L704.4 391.2L708.9 390.7L714.1 391.2Z" fill="#002e2c"/><path d="M803.2 372.9L798.8 374.2L803.7 371.6L808.0 370.4Z" fill="#002d2a"/><path d="M843.6 352.3L839.5 354.5L844.6 351.0L848.6 348.9Z" fill="#00271c"/><path d="M699.8 391.5L694.5 390.8L699.0 390.5L704.4 391.2Z" fill="#002d2a"/><path d="M812.3 368.9L808.0 370.4L812.9 367.6L817.2 366.1Z" fill="#002d27"/><path d="M655.1 386.3L649.2 384.8L653.8 385.4L659.6 386.9Z" fill="#00281c"/><path d="M689.9 390.9L684.5 390.0L689.0 389.9L694.5 390.8Z" fill="#002d28"/><path d="M821.4 364.5L817.2 366.1L822.1 363.2L826.3 361.5Z" fill="#002c24"/><path d="M680.0 389.9L674.4 388.9L678.9 388.9L684.5 390.0Z" fill="#002d25"/><path d="M752.4 387.4L747.6 387.7L752.2 386.2L757.0 386.0Z" fill="#003230"/><path d="M761.8 385.5L757.0 386.0L761.7 384.3L766.4 383.9Z" fill="#003230"/><path d="M742.9 388.9L738.0 389.0L742.6 387.7L747.6 387.7Z" fill="#003230"/><path d="M771.1 383.3L766.4 383.9L771.2 382.0L775.8 381.4Z" fill="#003130"/><path d="M733.4 390.0L728.4 389.9L733.0 388.8L738.0 389.0Z" fill="#003230"/><path d="M830.5 359.7L826.3 361.5L831.3 358.3L835.5 356.5Z" fill="#002c21"/><path d="M780.4 380.6L775.8 381.4L780.6 379.3L785.1 378.5Z" fill="#00312e"/><path d="M723.8 390.8L718.7 390.5L723.3 389.6L728.4 389.9Z" fill="#00312f"/><path d="M669.8 388.6L664.1 387.3L668.7 387.6L674.4 388.9Z" fill="#002c21"/><path d="M789.6 377.6L785.1 378.5L789.9 376.2L794.4 375.3Z" fill="#00312d"/><path d="M714.1 391.2L708.9 390.7L713.5 390.0L718.7 390.5Z" fill="#00312d"/><path d="M839.5 354.5L835.5 356.5L840.5 353.0L844.6 351.0Z" fill="#002b1d"/><path d="M798.8 374.2L794.4 375.3L799.2 372.8L803.7 371.6Z" fill="#00312b"/><path d="M704.4 391.2L699.0 390.5L703.6 390.0L708.9 390.7Z" fill="#00312b"/><path d="M659.6 386.9L653.8 385.4L658.3 385.8L664.1 387.3Z" fill="#002c1e"/><path d="M808.0 370.4L803.7 371.6L808.5 368.9L812.9 367.6Z" fill="#003028"/><path d="M694.5 390.8L689.0 389.9L693.6 389.6L699.0 390.5Z" fill="#003128"/><path d="M817.2 366.1L812.9 367.6L817.8 364.6L822.1 363.2Z" fill="#003025"/><path d="M684.5 390.0L678.9 388.9L683.5 388.8L689.0 389.9Z" fill="#003026"/><path d="M826.3 361.5L822.1 363.2L827.1 359.9L831.3 358.3Z" fill="#002f22"/><path d="M757.0 386.0L752.2 386.2L756.9 384.5L761.7 384.3Z" fill="#003530"/><path d="M747.6 387.7L742.6 387.7L747.3 386.2L752.2 386.2Z" fill="#003530"/><path d="M766.4 383.9L761.7 384.3L766.4 382.4L771.2 382.0Z" fill="#00352f"/><path d="M674.4 388.9L668.7 387.6L673.2 387.6L678.9 388.9Z" fill="#003022"/><path d="M738.0 389.0L733.0 388.8L737.6 387.6L742.6 387.7Z" fill="#00352f"/><path d="M775.8 381.4L771.2 382.0L775.9 379.9L780.6 379.3Z" fill="#00352e"/><path d="M728.4 389.9L723.3 389.6L727.9 388.5L733.0 388.8Z" fill="#00352e"/><path d="M785.1 378.5L780.6 379.3L785.3 377.0L789.9 376.2Z" fill="#00352d"/><path d="M835.5 356.5L831.3 358.3L836.3 354.8L840.5 353.0Z" fill="#002f1e"/><path d="M718.7 390.5L713.5 390.0L718.1 389.1L723.3 389.6Z" fill="#00352d"/><path d="M794.4 375.3L789.9 376.2L794.7 373.7L799.2 372.8Z" fill="#00342b"/><path d="M664.1 387.3L658.3 385.8L662.8 386.1L668.7 387.6Z" fill="#00301e"/><path d="M708.9 390.7L703.6 390.0L708.2 389.3L713.5 390.0Z" fill="#00352b"/><path d="M803.7 371.6L799.2 372.8L804.1 370.0L808.5 368.9Z" fill="#003428"/><path d="M699.0 390.5L693.6 389.6L698.1 389.1L703.6 390.0Z" fill="#003429"/><path d="M812.9 367.6L808.5 368.9L813.5 365.9L817.8 364.6Z" fill="#003425"/><path d="M689.0 389.9L683.5 388.8L688.0 388.5L693.6 389.6Z" fill="#003426"/><path d="M822.1 363.2L817.8 364.6L822.8 361.4L827.1 359.9Z" fill="#003322"/><path d="M678.9 388.9L673.2 387.6L677.8 387.5L683.5 388.8Z" fill="#003422"/><path d="M752.2 386.2L747.3 386.2L752.0 384.5L756.9 384.5Z" fill="#00392e"/><path d="M761.7 384.3L756.9 384.5L761.6 382.6L766.4 382.4Z" fill="#00382e"/><path d="M742.6 387.7L737.6 387.6L742.3 386.1L747.3 386.2Z" fill="#00392e"/><path d="M831.3 358.3L827.1 359.9L832.1 356.5L836.3 354.8Z" fill="#00331e"/><path d="M771.2 382.0L766.4 382.4L771.2 380.3L775.9 379.9Z" fill="#00382d"/><path d="M733.0 388.8L727.9 388.5L732.5 387.2L737.6 387.6Z" fill="#00382d"/><path d="M780.6 379.3L775.9 379.9L780.7 377.5L785.3 377.0Z" fill="#00382c"/><path d="M668.7 387.6L662.8 386.1L667.4 386.1L673.2 387.6Z" fill="#00331f"/><path d="M723.3 389.6L718.1 389.1L722.7 388.0L727.9 388.5Z" fill="#00382c"/><path d="M789.9 376.2L785.3 377.0L790.2 374.4L794.7 373.7Z" fill="#00382a"/><path d="M713.5 390.0L708.2 389.3L712.7 388.4L718.1 389.1Z" fill="#00382a"/><path d="M799.2 372.8L794.7 373.7L799.6 370.9L804.1 370.0Z" fill="#003828"/><path d="M703.6 390.0L698.1 389.1L702.7 388.3L708.2 389.3Z" fill="#003828"/><path d="M808.5 368.9L804.1 370.0L809.0 367.0L813.5 365.9Z" fill="#003725"/><path d="M693.6 389.6L688.0 388.5L692.6 387.9L698.1 389.1Z" fill="#003825"/><path d="M817.8 364.6L813.5 365.9L818.4 362.7L822.8 361.4Z" fill="#003722"/><path d="M683.5 388.8L677.8 387.5L682.3 387.2L688.0 388.5Z" fill="#003722"/><path d="M827.1 359.9L822.8 361.4L827.8 357.9L832.1 356.5Z" fill="#00361e"/><path d="M756.9 384.5L752.0 384.5L756.7 382.6L761.6 382.6Z" fill="#003c2c"/><path d="M747.3 386.2L742.3 386.1L747.0 384.3L752.0 384.5Z" fill="#003c2c"/><path d="M673.2 387.6L667.4 386.1L671.9 386.0L677.8 387.5Z" fill="#00371e"/><path d="M766.4 382.4L761.6 382.6L766.3 380.5L771.2 380.3Z" fill="#003c2c"/><path d="M737.6 387.6L732.5 387.2L737.2 385.7L742.3 386.1Z" fill="#003c2c"/><path d="M775.9 379.9L771.2 380.3L775.9 377.9L780.7 377.5Z" fill="#003c2a"/><path d="M727.9 388.5L722.7 388.0L727.3 386.7L732.5 387.2Z" fill="#003c2b"/><path d="M785.3 377.0L780.7 377.5L785.5 375.0L790.2 374.4Z" fill="#003b29"/><path d="M718.1 389.1L712.7 388.4L717.3 387.2L722.7 388.0Z" fill="#003c29"/><path d="M794.7 373.7L790.2 374.4L795.0 371.6L799.6 370.9Z" fill="#003b27"/><path d="M708.2 389.3L702.7 388.3L707.3 387.4L712.7 388.4Z" fill="#003b27"/><path d="M804.1 370.0L799.6 370.9L804.5 367.9L809.0 367.0Z" fill="#003b24"/><path d="M698.1 389.1L692.6 387.9L697.1 387.2L702.7 388.3Z" fill="#003b24"/><path d="M813.5 365.9L809.0 367.0L814.0 363.7L818.4 362.7Z" fill="#003a21"/><path d="M688.0 388.5L682.3 387.2L686.9 386.6L692.6 387.9Z" fill="#003b21"/><path d="M822.8 361.4L818.4 362.7L823.5 359.2L827.8 357.9Z" fill="#003a1d"/><path d="M677.8 387.5L671.9 386.0L676.5 385.6L682.3 387.2Z" fill="#003a1d"/><path d="M752.0 384.5L747.0 384.3L751.7 382.4L756.7 382.6Z" fill="#003f29"/><path d="M761.6 382.6L756.7 382.6L761.4 380.4L766.3 380.5Z" fill="#003f29"/><path d="M742.3 386.1L737.2 385.7L741.8 384.0L747.0 384.3Z" fill="#003f29"/><path d="M771.2 380.3L766.3 380.5L771.1 378.1L775.9 377.9Z" fill="#003f28"/><path d="M732.5 387.2L727.3 386.7L731.9 385.1L737.2 385.7Z" fill="#003f28"/><path d="M780.7 377.5L775.9 377.9L780.8 375.3L785.5 375.0Z" fill="#003f27"/><path d="M722.7 388.0L717.3 387.2L722.0 385.9L727.3 386.7Z" fill="#003f27"/><path d="M790.2 374.4L785.5 375.0L790.4 372.2L795.0 371.6Z" fill="#003e24"/><path d="M712.7 388.4L707.3 387.4L711.9 386.3L717.3 387.2Z" fill="#003f25"/><path d="M799.6 370.9L795.0 371.6L799.9 368.6L804.5 367.9Z" fill="#003e22"/><path d="M702.7 388.3L697.1 387.2L701.7 386.3L707.3 387.4Z" fill="#003e22"/><path d="M809.0 367.0L804.5 367.9L809.5 364.6L814.0 363.7Z" fill="#003e1f"/><path d="M692.6 387.9L686.9 386.6L691.4 385.9L697.1 387.2Z" fill="#003e1f"/><path d="M818.4 362.7L814.0 363.7L819.0 360.2L823.5 359.2Z" fill="#003d1b"/><path d="M682.3 387.2L676.5 385.6L681.0 385.1L686.9 386.6Z" fill="#003e1c"/><path d="M756.7 382.6L751.7 382.4L756.4 380.2L761.4 380.4Z" fill="#004225"/><path d="M747.0 384.3L741.8 384.0L746.5 382.0L751.7 382.4Z" fill="#004225"/><path d="M766.3 380.5L761.4 380.4L766.2 378.1L771.1 378.1Z" fill="#004225"/><path d="M737.2 385.7L731.9 385.1L736.6 383.4L741.8 384.0Z" fill="#004225"/><path d="M775.9 377.9L771.1 378.1L775.9 375.5L780.8 375.3Z" fill="#004223"/><path d="M727.3 386.7L722.0 385.9L726.6 384.4L731.9 385.1Z" fill="#004224"/><path d="M785.5 375.0L780.8 375.3L785.6 372.5L790.4 372.2Z" fill="#004222"/><path d="M717.3 387.2L711.9 386.3L716.5 385.0L722.0 385.9Z" fill="#004222"/><path d="M795.0 371.6L790.4 372.2L795.3 369.1L799.9 368.6Z" fill="#00411f"/><path d="M707.3 387.4L701.7 386.3L706.3 385.1L711.9 386.3Z" fill="#00421f"/><path d="M804.5 367.9L799.9 368.6L804.9 365.3L809.5 364.6Z" fill="#00411c"/><path d="M697.1 387.2L691.4 385.9L696.0 384.9L701.7 386.3Z" fill="#00411d"/><path d="M814.0 363.7L809.5 364.6L814.5 361.1L819.0 360.2Z" fill="#004019"/><path d="M686.9 386.6L681.0 385.1L685.6 384.3L691.4 385.9Z" fill="#004119"/><path d="M751.7 382.4L746.5 382.0L751.3 379.8L756.4 380.2Z" fill="#004521"/><path d="M761.4 380.4L756.4 380.2L761.2 377.9L766.2 378.1Z" fill="#004521"/><path d="M741.8 384.0L736.6 383.4L741.3 381.4L746.5 382.0Z" fill="#004521"/><path d="M771.1 378.1L766.2 378.1L771.0 375.5L775.9 375.5Z" fill="#004520"/><path d="M731.9 385.1L726.6 384.4L731.3 382.6L736.6 383.4Z" fill="#004520"/><path d="M780.8 375.3L775.9 375.5L780.8 372.7L785.6 372.5Z" fill="#00451e"/><path d="M722.0 385.9L716.5 385.0L721.1 383.4L726.6 384.4Z" fill="#00451e"/><path d="M790.4 372.2L785.6 372.5L790.5 369.5L795.3 369.1Z" fill="#00441c"/><path d="M711.9 386.3L706.3 385.1L710.9 383.8L716.5 385.0Z" fill="#00451c"/><path d="M799.9 368.6L795.3 369.1L800.2 365.8L804.9 365.3Z" fill="#004419"/><path d="M701.7 386.3L696.0 384.9L700.6 383.8L706.3 385.1Z" fill="#004419"/><path d="M809.5 364.6L804.9 365.3L809.9 361.8L814.5 361.1Z" fill="#004416"/><path d="M691.4 385.9L685.6 384.3L690.2 383.4L696.0 384.9Z" fill="#004416"/><path d="M756.4 380.2L751.3 379.8L756.0 377.4L761.2 377.9Z" fill="#00481c"/><path d="M746.5 382.0L741.3 381.4L746.0 379.2L751.3 379.8Z" fill="#00481c"/><path d="M766.2 378.1L761.2 377.9L766.0 375.2L771.0 375.5Z" fill="#00481b"/><path d="M736.6 383.4L731.3 382.6L736.0 380.6L741.3 381.4Z" fill="#00481b"/><path d="M775.9 375.5L771.0 375.5L775.8 372.6L780.8 372.7Z" fill="#00481a"/><path d="M726.6 384.4L721.1 383.4L725.8 381.6L731.3 382.6Z" fill="#00481a"/><path d="M785.6 372.5L780.8 372.7L785.7 369.6L790.5 369.5Z" fill="#004718"/><path d="M716.5 385.0L710.9 383.8L715.6 382.2L721.1 383.4Z" fill="#004818"/><path d="M795.3 369.1L790.5 369.5L795.5 366.2L800.2 365.8Z" fill="#004715"/><path d="M706.3 385.1L700.6 383.8L705.2 382.4L710.9 383.8Z" fill="#004716"/><path d="M804.9 365.3L800.2 365.8L805.2 362.3L809.9 361.8Z" fill="#004712"/><path d="M696.0 384.9L690.2 383.4L694.8 382.2L700.6 383.8Z" fill="#004712"/><path d="M751.3 379.8L746.0 379.2L750.8 376.8L756.0 377.4Z" fill="#004b16"/><path d="M761.2 377.9L756.0 377.4L760.8 374.8L766.0 375.2Z" fill="#004b16"/><path d="M741.3 381.4L736.0 380.6L740.7 378.4L746.0 379.2Z" fill="#004b16"/><path d="M771.0 375.5L766.0 375.2L770.8 372.4L775.8 372.6Z" fill="#004b15"/><path d="M731.3 382.6L725.8 381.6L730.5 379.6L736.0 380.6Z" fill="#004b15"/><path d="M780.8 372.7L775.8 372.6L780.7 369.5L785.7 369.6Z" fill="#004a13"/><path d="M721.1 383.4L715.6 382.2L720.2 380.4L725.8 381.6Z" fill="#004b13"/><path d="M790.5 369.5L785.7 369.6L790.6 366.3L795.5 366.2Z" fill="#004a11"/><path d="M710.9 383.8L705.2 382.4L709.9 380.8L715.6 382.2Z" fill="#004a11"/><path d="M800.2 365.8L795.5 366.2L800.5 362.6L805.2 362.3Z" fill="#004a0e"/><path d="M700.6 383.8L694.8 382.2L699.4 380.8L705.2 382.4Z" fill="#004a0e"/><path d="M756.0 377.4L750.8 376.8L755.6 374.1L760.8 374.8Z" fill="#004e0f"/><path d="M746.0 379.2L740.7 378.4L745.4 376.0L750.8 376.8Z" fill="#004e0f"/><path d="M766.0 375.2L760.8 374.8L765.6 371.9L770.8 372.4Z" fill="#004d0f"/><path d="M736.0 380.6L730.5 379.6L735.2 377.4L740.7 378.4Z" fill="#004e0f"/><path d="M775.8 372.6L770.8 372.4L775.7 369.2L780.7 369.5Z" fill="#004d0d"/><path d="M725.8 381.6L720.2 380.4L724.9 378.4L730.5 379.6Z" fill="#004d0d"/><path d="M785.7 369.6L780.7 369.5L785.7 366.2L790.6 366.3Z" fill="#004d0b"/><path d="M715.6 382.2L709.9 380.8L714.5 379.0L720.2 380.4Z" fill="#004d0b"/><path d="M795.5 366.2L790.6 366.3L795.6 362.7L800.5 362.6Z" fill="#004d09"/><path d="M705.2 382.4L699.4 380.8L704.0 379.2L709.9 380.8Z" fill="#004d09"/><path d="M750.8 376.8L745.4 376.0L750.2 373.3L755.6 374.1Z" fill="#005008"/><path d="M760.8 374.8L755.6 374.1L760.4 371.2L765.6 371.9Z" fill="#005008"/><path d="M740.7 378.4L735.2 377.4L740.0 374.9L745.4 376.0Z" fill="#005008"/><path d="M770.8 372.4L765.6 371.9L770.5 368.7L775.7 369.2Z" fill="#005007"/><path d="M730.5 379.6L724.9 378.4L729.6 376.1L735.2 377.4Z" fill="#005007"/><path d="M780.7 369.5L775.7 369.2L780.6 365.9L785.7 366.2Z" fill="#005005"/><path d="M720.2 380.4L714.5 379.0L719.2 376.9L724.9 378.4Z" fill="#005005"/><path d="M790.6 366.3L785.7 366.2L790.6 362.5L795.6 362.7Z" fill="#005003"/><path d="M709.9 380.8L704.0 379.2L708.7 377.3L714.5 379.0Z" fill="#005003"/><path d="M755.6 374.1L750.2 373.3L755.0 370.3L760.4 371.2Z" fill="#005300"/><path d="M745.4 376.0L740.0 374.9L744.7 372.2L750.2 373.3Z" fill="#005300"/><path d="M765.6 371.9L760.4 371.2L765.3 368.0L770.5 368.7Z" fill="#015300"/><path d="M735.2 377.4L729.6 376.1L734.4 373.6L740.0 374.9Z" fill="#015300"/><path d="M775.7 369.2L770.5 368.7L775.4 365.3L780.6 365.9Z" fill="#025300"/><path d="M724.9 378.4L719.2 376.9L723.9 374.6L729.6 376.1Z" fill="#025300"/><path d="M785.7 366.2L780.6 365.9L785.6 362.2L790.6 362.5Z" fill="#045200"/><path d="M714.5 379.0L708.7 377.3L713.4 375.2L719.2 376.9Z" fill="#045200"/><path d="M750.2 373.3L744.7 372.2L749.5 369.2L755.0 370.3Z" fill="#085500"/><path d="M760.4 371.2L755.0 370.3L759.9 367.1L765.3 368.0Z" fill="#095500"/><path d="M740.0 374.9L734.4 373.6L739.1 370.8L744.7 372.2Z" fill="#095500"/><path d="M770.5 368.7L765.3 368.0L770.2 364.6L775.4 365.3Z" fill="#0a5500"/><path d="M729.6 376.1L723.9 374.6L728.6 372.1L734.4 373.6Z" fill="#0a5500"/><path d="M780.6 365.9L775.4 365.3L780.4 361.7L785.6 362.2Z" fill="#0c5500"/><path d="M719.2 376.9L713.4 375.2L718.1 372.9L723.9 374.6Z" fill="#0c5500"/><path d="M755.0 370.3L749.5 369.2L754.4 365.9L759.9 367.1Z" fill="#115800"/><path d="M744.7 372.2L739.1 370.8L743.9 367.8L749.5 369.2Z" fill="#115800"/><path d="M765.3 368.0L759.9 367.1L764.8 363.6L770.2 364.6Z" fill="#115800"/><path d="M734.4 373.6L728.6 372.1L733.4 369.3L739.1 370.8Z" fill="#115800"/><path d="M775.4 365.3L770.2 364.6L775.1 360.9L780.4 361.7Z" fill="#125700"/><path d="M723.9 374.6L718.1 372.9L722.8 370.3L728.6 372.1Z" fill="#125800"/><path d="M749.5 369.2L743.9 367.8L748.8 364.5L754.4 365.9Z" fill="#175a00"/><path d="M759.9 367.1L754.4 365.9L759.3 362.4L764.8 363.6Z" fill="#185a00"/><path d="M739.1 370.8L733.4 369.3L738.2 366.2L743.9 367.8Z" fill="#185a00"/><path d="M770.2 364.6L764.8 363.6L769.8 359.9L775.1 360.9Z" fill="#185a00"/><path d="M728.6 372.1L722.8 370.3L727.5 367.5L733.4 369.3Z" fill="#185a00"/><path d="M754.4 365.9L748.8 364.5L753.7 361.0L759.3 362.4Z" fill="#1f5c00"/><path d="M743.9 367.8L738.2 366.2L743.0 362.9L748.8 364.5Z" fill="#1f5c00"/><path d="M764.8 363.6L759.3 362.4L764.2 358.6L769.8 359.9Z" fill="#1f5c00"/><path d="M733.4 369.3L727.5 367.5L732.3 364.4L738.2 366.2Z" fill="#1f5c00"/><path d="M748.8 364.5L743.0 362.9L747.9 359.3L753.7 361.0Z" fill="#275f00"/><path d="M759.3 362.4L753.7 361.0L758.6 357.2L764.2 358.6Z" fill="#275e00"/><path d="M738.2 366.2L732.3 364.4L737.2 361.0L743.0 362.9Z" fill="#275f00"/><path d="M753.7 361.0L747.9 359.3L752.9 355.4L758.6 357.2Z" fill="#2f6100"/><path d="M743.0 362.9L737.2 361.0L742.0 357.4L747.9 359.3Z" fill="#2f6100"/><path d="M747.9 359.3L742.0 357.4L747.0 353.5L752.9 355.4Z" fill="#376300"/></g>
<g stroke="#fff" stroke-width="1" fill="none" shape-rendering="crispEdges">
<path d="M471.5 258 L474 256.5 L520 387.5 L516.5 387.5"/>
<path d="M493 323 L497.5 323"/>
<path d="M527 396 L528 393.8 L767 507 L767 511"/>
<path d="M646.6 451.6 L646.6 455"/>
<path d="M779.5 508.5 L779.5 506.2 L965.3 315 L967 316.5"/>
<path d="M873 410 L876 413"/>
<path d="M796.6 488.2 L798.6 490.2"/>
<path d="M835.0 448.9 L837.0 450.9"/>
<path d="M909.0 373.0 L911.0 375.0"/>
<path d="M946.6 334.3 L948.6 336.3"/>
</g>
<g fill="#fff" font-family="Liberation Sans" font-style="italic" font-size="10.5">
<text x="432.3" y="266.0">0.3279</text>
<text x="455.0" y="331.5">0.0908</text>
<text x="478.4" y="396.5">-0.1463</text>
<text x="492.5" y="409.5">-0.475</text>
<text x="612.0" y="466.5">-2.98e-08</text>
<text x="735.0" y="523.5">0.475</text>
<text x="782.5" y="519.5">0.475</text>
<text x="888.0" y="424.5">0</text>
<text x="966.9" y="328.3">-0.475</text>
</g>
<g fill="#fff" font-family="Liberation Sans" font-style="italic" font-weight="bold" font-size="13">
<text x="444.4" y="347.0">Z</text>
<text x="629.4" y="494.5">Y</text>
<text x="896.0" y="446.0">X</text>
</g>
<g shape-rendering="crispEdges">
<rect x="479.00" y="574.8" width="7.77" height="21" fill="#0008ff"/>
<rect x="486.47" y="574.8" width="7.77" height="21" fill="#0018ff"/>
<rect x="493.94" y="574.8" width="7.77" height="21" fill="#0028ff"/>
<rect x="501.42" y="574.8" width="7.77" height="21" fill="#0038ff"/>
<rect x="508.89" y="574.8" width="7.77" height="21" fill="#0048ff"/>
<rect x="516.36" y="574.8" width="7.77" height="21" fill="#0058ff"/>
<rect x="523.83" y="574.8" width="7.77" height="21" fill="#0068ff"/>
<rect x="531.30" y="574.8" width="7.77" height="21" fill="#0078ff"/>
<rect x="538.77" y="574.8" width="7.77" height="21" fill="#0087ff"/>
<rect x="546.25" y="574.8" width="7.77" height="21" fill="#0097ff"/>
<rect x="553.72" y="574.8" width="7.77" height="21" fill="#00a7ff"/>
<rect x="561.19" y="574.8" width="7.77" height="21" fill="#00b7ff"/>
<rect x="568.66" y="574.8" width="7.77" height="21" fill="#00c7ff"/>
<rect x="576.13" y="574.8" width="7.77" height="21" fill="#00d7ff"/>
<rect x="583.61" y="574.8" width="7.77" height="21" fill="#00e7ff"/>
<rect x="591.08" y="574.8" width="7.77" height="21" fill="#00f7ff"/>
<rect x="598.55" y="574.8" width="7.77" height="21" fill="#00fff7"/>
<rect x="606.02" y="574.8" width="7.77" height="21" fill="#00ffe7"/>
<rect x="613.49" y="574.8" width="7.77" height="21" fill="#00ffd7"/>
<rect x="620.97" y="574.8" width="7.77" height="21" fill="#00ffc7"/>
<rect x="628.44" y="574.8" width="7.77" height="21" fill="#00ffb7"/>
<rect x="635.91" y="574.8" width="7.77" height="21" fill="#00ffa7"/>
<rect x="643.38" y="574.8" width="7.77" height="21" fill="#00ff97"/>
<rect x="650.85" y="574.8" width="7.77" height="21" fill="#00ff87"/>
<rect x="658.33" y="574.8" width="7.77" height="21" fill="#00ff78"/>
<rect x="665.80" y="574.8" width="7.77" height="21" fill="#00ff68"/>
<rect x="673.27" y="574.8" width="7.77" height="21" fill="#00ff58"/>
<rect x="680.74" y="574.8" width="7.77" height="21" fill="#00ff48"/>
<rect x="688.21" y="574.8" width="7.77" height="21" fill="#00ff38"/>
<rect x="695.68" y="574.8" width="7.77" height="21" fill="#00ff28"/>
<rect x="703.16" y="574.8" width="7.77" height="21" fill="#00ff18"/>
<rect x="710.63" y="574.8" width="7.77" height="21" fill="#00ff08"/>
<rect x="718.10" y="574.8" width="7.77" height="21" fill="#08ff00"/>
<rect x="725.57" y="574.8" width="7.77" height="21" fill="#18ff00"/>
<rect x="733.04" y="574.8" width="7.77" height="21" fill="#28ff00"/>
<rect x="740.52" y="574.8" width="7.77" height="21" fill="#38ff00"/>
<rect x="747.99" y="574.8" width="7.77" height="21" fill="#48ff00"/>
<rect x="755.46" y="574.8" width="7.77" height="21" fill="#58ff00"/>
<rect x="762.93" y="574.8" width="7.77" height="21" fill="#68ff00"/>
<rect x="770.40" y="574.8" width="7.77" height="21" fill="#78ff00"/>
<rect x="777.88" y="574.8" width="7.77" height="21" fill="#87ff00"/>
<rect x="785.35" y="574.8" width="7.77" height="21" fill="#97ff00"/>
<rect x="792.82" y="574.8" width="7.77" height="21" fill="#a7ff00"/>
<rect x="800.29" y="574.8" width="7.77" height="21" fill="#b7ff00"/>
<rect x="807.76" y="574.8" width="7.77" height="21" fill="#c7ff00"/>
<rect x="815.23" y="574.8" width="7.77" height="21" fill="#d7ff00"/>
<rect x="822.71" y="574.8" width="7.77" height="21" fill="#e7ff00"/>
<rect x="830.18" y="574.8" width="7.77" height="21" fill="#f7ff00"/>
<rect x="837.65" y="574.8" width="7.77" height="21" fill="#fff700"/>
<rect x="845.12" y="574.8" width="7.77" height="21" fill="#ffe700"/>
<rect x="852.59" y="574.8" width="7.77" height="21" fill="#ffd700"/>
<rect x="860.07" y="574.8" width="7.77" height="21" fill="#ffc700"/>
<rect x="867.54" y="574.8" width="7.77" height="21" fill="#ffb700"/>
<rect x="875.01" y="574.8" width="7.77" height="21" fill="#ffa700"/>
<rect x="882.48" y="574.8" width="7.77" height="21" fill="#ff9700"/>
<rect x="889.95" y="574.8" width="7.77" height="21" fill="#ff8700"/>
<rect x="897.43" y="574.8" width="7.77" height="21" fill="#ff7800"/>
<rect x="904.90" y="574.8" width="7.77" height="21" fill="#ff6800"/>
<rect x="912.37" y="574.8" width="7.77" height="21" fill="#ff5800"/>
<rect x="919.84" y="574.8" width="7.77" height="21" fill="#ff4800"/>
<rect x="927.31" y="574.8" width="7.77" height="21" fill="#ff3800"/>
<rect x="934.78" y="574.8" width="7.77" height="21" fill="#ff2800"/>
<rect x="942.26" y="574.8" width="7.77" height="21" fill="#ff1800"/>
<rect x="949.73" y="574.8" width="7.77" height="21" fill="#ff0800"/>
</g>
<g fill="#fff" font-family="Liberation Sans" font-style="italic" font-weight="bold" font-size="13" text-anchor="middle">
<text x="480.7" y="571.8">-0.159</text>
<text x="599.0" y="571.8">0.0284</text>
<text x="717.0" y="571.8">0.216</text>
<text x="835.7" y="571.8">0.403</text>
<text x="956.0" y="571.8">0.590</text>
<text x="719" y="556.4">value</text>
</g>
</svg>

<!-- horizontal splitter -->
<svg class="a" style="left:4px;top:623px" width="1016" height="10"><defs><pattern id="dh" width="4" height="10" patternUnits="userSpaceOnUse"><rect x="0" y="5" width="1" height="1" fill="#8494aa"/><rect x="2" y="7" width="1" height="1" fill="#8494aa"/></pattern></defs><rect x="0" y="1" width="1016" height="1" fill="#fafafa"/><rect width="1016" height="10" fill="url(#dh)"/></svg>
<svg class="a" style="left:4px;top:624px" width="30" height="10">
<path d="M4 6 L8 2 L12 6 Z" fill="#5a7ed0"/><path d="M4 6 L8 2" stroke="#222"/>
<path d="M16 2 L24 2 L20 6 Z" fill="#5a7ed0"/><path d="M16 2.5 L24 2.5" stroke="#222"/>
</svg>
<div class="a" style="left:4px;top:633px;width:1016px;height:2px;background:#7a8ca2"></div>
<!-- console -->
<div class="a" style="left:6px;top:635px;width:1012px;height:126px;background:#fff"></div>
<div class="a" style="left:4px;top:761px;width:1016px;height:1px;background:#8494a6"></div>
<div class="tx" style="position:absolute;left:9px;top:633px;font-size:12px;line-height:15px;color:#000;white-space:pre">End
0
1
2
3
End</div>
<div class="tx" style="position:absolute;left:9px;top:742px;font-size:13px;line-height:15px;color:#000;white-space:pre;letter-spacing:2.6px">&gt;&gt;&gt;</div>
<!-- scrollbar -->
<div class="a" style="left:1002px;top:635px;width:16px;height:126px;background:#eeeeee;border-left:1px solid #7a8ca2;border-right:1px solid #7a8ca2"></div>
<svg class="a" style="left:1003px;top:635px" width="14" height="16"><path d="M3 10 L7 6 L11 10 Z" fill="#222"/></svg>
<div class="a" style="left:1003px;top:650px;width:14px;height:1px;background:#7a8ca2"></div>
<div class="a" style="left:1003px;top:651px;width:14px;height:77px;border-top:1px solid #9ab4e0;border-left:1px solid #9ab4e0;background:#eeeeee"></div>
<div class="a" style="left:1002px;top:728px;width:8px;height:17px;background:linear-gradient(90deg,#dbe8f8,#f4f8ff);border-top:1px solid #6a8ccc;border-bottom:1px solid #6a8ccc;border-left:1px solid #6a8ccc"></div>
<div class="a" style="left:1006px;top:735px;width:4px;height:1px;background:#6a8ccc"></div>
<div class="a" style="left:1006px;top:739px;width:4px;height:1px;background:#6a8ccc"></div>
<svg class="a" style="left:1003px;top:747px" width="8" height="16"><path d="M2.5 4.5 L8 4.5 L8 9.5 Z" fill="#222"/></svg>
<div class="a" style="left:1003px;top:760px;width:7px;height:1px;background:#7a8ca2"></div>
<div class="a" style="left:1010px;top:721px;width:14px;height:47px;background:#fff"></div>

<div id="frameB" class="a"></div>
</body></html>
